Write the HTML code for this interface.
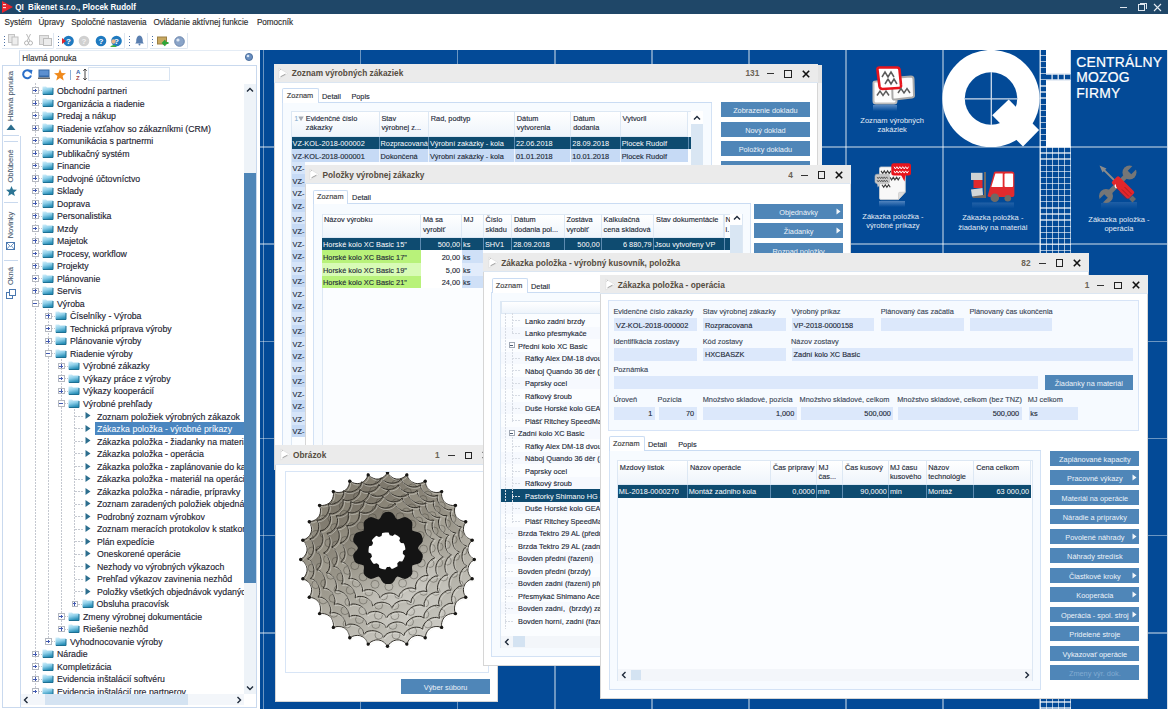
<!DOCTYPE html><html><head><meta charset="utf-8"><style>html,body{margin:0;padding:0;width:1168px;height:709px;overflow:hidden;background:#fff}body{font-family:"Liberation Sans", sans-serif;position:relative}div{position:absolute;box-sizing:border-box}.t{white-space:pre;transform:scaleY(1.06);-webkit-text-stroke:0.13px currentColor}</style></head><body><div style="left:0.00px;top:0.00px;width:1168.00px;height:13.50px;background:#1f4768"></div><svg style="position:absolute;left:2.00px;top:1.00px;" width="11" height="12" viewBox="0 0 11 12"><polygon points="0,0 11,6 0,12" fill="#e8242c"/><rect x="1" y="3" width="3" height="1.2" fill="#fff" opacity=".8"/><rect x="1" y="6" width="3" height="1.2" fill="#fff" opacity=".8"/></svg><div class="t" style="left:15.20px;top:2.00px;line-height:11px;font-size:8.03px;color:#ffffff;font-weight:700;-webkit-text-stroke:0;">QI  Bikenet s.r.o., Plocek Rudolf</div><div style="left:1119.50px;top:6.50px;width:7.50px;height:1.00px;background:#dfe6ee"></div><div style="left:1138.00px;top:4.00px;width:7.00px;height:6.50px;border:1px solid #dfe6ee"></div><div style="left:1140.00px;top:2.50px;width:6.50px;height:6.00px;border-top:1px solid #dfe6ee;border-right:1px solid #dfe6ee"></div><svg style="position:absolute;left:1153.00px;top:3.00px;" width="9" height="9" viewBox="0 0 9 9"><path d="M1 1 L8 8 M8 1 L1 8" stroke="#e6ecf2" stroke-width="1.1"/></svg><div class="t" style="left:4.60px;top:17.40px;line-height:12px;font-size:8.15px;color:#2a2a2a;font-weight:400;">Systém</div><div class="t" style="left:38.50px;top:17.40px;line-height:12px;font-size:8.15px;color:#2a2a2a;font-weight:400;">Úpravy</div><div class="t" style="left:71.20px;top:17.40px;line-height:12px;font-size:8.15px;color:#2a2a2a;font-weight:400;">Spoločné nastavenia</div><div class="t" style="left:153.40px;top:17.40px;line-height:12px;font-size:8.15px;color:#2a2a2a;font-weight:400;">Ovládanie aktívnej funkcie</div><div class="t" style="left:256.90px;top:17.40px;line-height:12px;font-size:8.15px;color:#2a2a2a;font-weight:400;">Pomocník</div><div style="left:2.00px;top:32.50px;width:52.00px;height:16.10px;border-right:1px solid #dfe7f1;border-bottom:1px solid #dfe7f1;border-radius:0 0 2px 0"></div><div style="left:56.00px;top:32.50px;width:68.60px;height:16.10px;border-right:1px solid #dfe7f1;border-bottom:1px solid #dfe7f1;border-radius:0 0 2px 0"></div><div style="left:126.40px;top:32.50px;width:21.30px;height:16.10px;border-right:1px solid #dfe7f1;border-bottom:1px solid #dfe7f1;border-radius:0 0 2px 0"></div><div style="left:149.50px;top:32.50px;width:38.00px;height:16.10px;border-right:1px solid #dfe7f1;border-bottom:1px solid #dfe7f1;border-radius:0 0 2px 0"></div><div style="left:3.50px;top:35.60px;width:1.20px;height:1.20px;background:#4a6fa5"></div><div style="left:3.50px;top:38.60px;width:1.20px;height:1.20px;background:#4a6fa5"></div><div style="left:3.50px;top:41.60px;width:1.20px;height:1.20px;background:#4a6fa5"></div><div style="left:3.50px;top:44.60px;width:1.20px;height:1.20px;background:#4a6fa5"></div><div style="left:58.00px;top:35.60px;width:1.20px;height:1.20px;background:#4a6fa5"></div><div style="left:58.00px;top:38.60px;width:1.20px;height:1.20px;background:#4a6fa5"></div><div style="left:58.00px;top:41.60px;width:1.20px;height:1.20px;background:#4a6fa5"></div><div style="left:58.00px;top:44.60px;width:1.20px;height:1.20px;background:#4a6fa5"></div><div style="left:129.00px;top:35.60px;width:1.20px;height:1.20px;background:#4a6fa5"></div><div style="left:129.00px;top:38.60px;width:1.20px;height:1.20px;background:#4a6fa5"></div><div style="left:129.00px;top:41.60px;width:1.20px;height:1.20px;background:#4a6fa5"></div><div style="left:129.00px;top:44.60px;width:1.20px;height:1.20px;background:#4a6fa5"></div><div style="left:152.00px;top:35.60px;width:1.20px;height:1.20px;background:#4a6fa5"></div><div style="left:152.00px;top:38.60px;width:1.20px;height:1.20px;background:#4a6fa5"></div><div style="left:152.00px;top:41.60px;width:1.20px;height:1.20px;background:#4a6fa5"></div><div style="left:152.00px;top:44.60px;width:1.20px;height:1.20px;background:#4a6fa5"></div><svg style="position:absolute;left:8.00px;top:34.00px;" width="11" height="12" viewBox="0 0 11 12"><rect x="0.5" y="0.5" width="6" height="8" fill="#e8e8e8" stroke="#c4c4c4"/><rect x="4" y="3" width="6" height="8" fill="#eee" stroke="#c0c0c0"/></svg><svg style="position:absolute;left:24.00px;top:34.00px;" width="9" height="12" viewBox="0 0 9 12"><circle cx="2.5" cy="9" r="2" fill="none" stroke="#b5b5b5"/><circle cx="6.5" cy="9" r="2" fill="none" stroke="#b5b5b5"/><path d="M3 7 L6.5 0 M6 7 L2.5 0" stroke="#b9b9b9"/></svg><svg style="position:absolute;left:39.00px;top:34.00px;" width="13" height="12" viewBox="0 0 13 12"><rect x="0.5" y="1.5" width="9" height="9" fill="#e4e4e4" stroke="#c4c4c4"/><rect x="4.5" y="4.5" width="8" height="7" fill="#ececec" stroke="#bcbcbc"/></svg><svg style="position:absolute;left:61.50px;top:34.50px;" width="12" height="12" viewBox="0 0 12 12"><circle cx="6.5" cy="6" r="5.3" fill="#1f7ac0"/><path d="M0 3 L4 6 L0 9Z" fill="#e0242a"/><text x="6.5" y="8.8" font-size="8" font-weight="700" fill="#fff" text-anchor="middle" font-family="Liberation Sans">?</text></svg><svg style="position:absolute;left:78.00px;top:34.50px;" width="12" height="12" viewBox="0 0 12 12"><circle cx="6" cy="6" r="5.3" fill="#d0d0d0"/><text x="6" y="8.8" font-size="8" font-weight="700" fill="#f2f2f2" text-anchor="middle" font-family="Liberation Sans">?</text></svg><svg style="position:absolute;left:94.50px;top:34.50px;" width="12" height="12" viewBox="0 0 12 12"><circle cx="6" cy="6" r="5.3" fill="#1f7ac0"/><text x="6" y="8.8" font-size="8" font-weight="700" fill="#fff" text-anchor="middle" font-family="Liberation Sans">?</text></svg><svg style="position:absolute;left:110.00px;top:34.50px;" width="12" height="12" viewBox="0 0 12 12"><circle cx="6.5" cy="6" r="5.3" fill="#1f7ac0"/><text x="6.5" y="8.8" font-size="8" font-weight="700" fill="#fff" text-anchor="middle" font-family="Liberation Sans">?</text><circle cx="3.5" cy="6.5" r="2.2" fill="#e9b48a"/><path d="M0 12 Q3.5 8 7 12Z" fill="#3cb043"/></svg><svg style="position:absolute;left:134.50px;top:35.00px;" width="9" height="11" viewBox="0 0 9 11"><path d="M4.5 0.5 Q8 1 7.8 7 L8.8 8.5 L0.2 8.5 L1.2 7 Q1 1 4.5 0.5Z" fill="#5a7fb0"/><circle cx="4.5" cy="9.6" r="1" fill="#5a7fb0"/></svg><svg style="position:absolute;left:157.00px;top:34.50px;" width="12" height="12" viewBox="0 0 12 12"><rect x="0.5" y="2" width="9" height="7" fill="#c8a860" stroke="#9b8045"/><path d="M6 8 L11.5 8 M8.5 5.5 L6 8 L8.5 10.5" stroke="#2fa53a" stroke-width="2" fill="none"/></svg><svg style="position:absolute;left:174.00px;top:34.50px;" width="11" height="12" viewBox="0 0 11 12"><circle cx="5.5" cy="6.5" r="4.8" fill="#8aa4c8" stroke="#6b86ad"/><circle cx="4" cy="5" r="1.6" fill="#dfe8f3"/></svg><div style="left:19.30px;top:49.60px;width:239.70px;height:15.40px;border-left:1px solid #d3e0ef;border-top:1px solid #e4ecf5"></div><div class="t" style="left:22.30px;top:52.60px;line-height:12px;font-size:8.15px;color:#2a2a2a;font-weight:400;">Hlavná ponuka</div><svg style="position:absolute;left:244.00px;top:52.00px;" width="10" height="10" viewBox="0 0 10 10"><circle cx="5" cy="5" r="3.6" fill="#6a8fc0" stroke="#3a5f90" stroke-width=".8"/><circle cx="4" cy="4" r="1.3" fill="#d8e6f5"/></svg><div style="left:2.00px;top:65.00px;width:255.00px;height:642.50px;border:1px solid #c9d9ee;border-right:1px solid #c9d9ee"></div><div style="left:19.60px;top:65.50px;width:1.00px;height:641.50px;background:#c9d9ee"></div><div style="left:2.50px;top:65.50px;width:17.00px;height:70.80px;background:#fff;border-bottom:1px solid #c9d9ee"></div><div style="left:19.00px;top:66.00px;width:1.60px;height:70.00px;background:#fff"></div><div class="t" style="left:-29px;top:89.5px;width:80px;line-height:12px;text-align:center;font-size:7.5px;color:#4a5a70;transform:rotate(-90deg);-webkit-text-stroke:0.1px #4a5a70">Hlavná ponuka</div><div class="t" style="left:-29px;top:159.5px;width:80px;line-height:12px;text-align:center;font-size:7.5px;color:#4a5a70;transform:rotate(-90deg);-webkit-text-stroke:0.1px #4a5a70">Obľúbené</div><div class="t" style="left:-29px;top:219.3px;width:80px;line-height:12px;text-align:center;font-size:7.5px;color:#4a5a70;transform:rotate(-90deg);-webkit-text-stroke:0.1px #4a5a70">Novinky</div><div class="t" style="left:-29px;top:270px;width:80px;line-height:12px;text-align:center;font-size:7.5px;color:#4a5a70;transform:rotate(-90deg);-webkit-text-stroke:0.1px #4a5a70">Okná</div><div style="left:4.00px;top:141.00px;width:14.00px;height:1.00px;background:#c9d9ee"></div><div style="left:4.00px;top:202.00px;width:14.00px;height:1.00px;background:#c9d9ee"></div><div style="left:4.00px;top:260.00px;width:14.00px;height:1.00px;background:#c9d9ee"></div><svg style="position:absolute;left:6.00px;top:124.00px;" width="10" height="7" viewBox="0 0 10 7"><polygon points="5,0.5 9.5,6 0.5,6" fill="#2c6e8e"/></svg><svg style="position:absolute;left:5.50px;top:185.50px;" width="11" height="10" viewBox="0 0 11 10"><polygon points="5.5,0 7,3.6 11,3.8 7.9,6.4 8.9,10 5.5,7.9 2.1,10 3.1,6.4 0,3.8 4,3.6" fill="#2c7494"/></svg><svg style="position:absolute;left:6.00px;top:242.00px;" width="10" height="9" viewBox="0 0 10 9"><rect x="0.5" y="0.5" width="8" height="7" fill="none" stroke="#4a78b0"/><path d="M0.5 0.5 L4.5 4.5 L8.5 0.5 M0.5 7.5 L3.5 4 M8.5 7.5 L5.5 4" stroke="#4a78b0" stroke-width=".8" fill="none"/></svg><svg style="position:absolute;left:5.50px;top:289.00px;" width="11" height="10" viewBox="0 0 11 10"><rect x="0.5" y="3.5" width="6" height="6" fill="#fff" stroke="#4a78b0"/><rect x="3.5" y="0.5" width="6" height="6" fill="#fff" stroke="#4a78b0"/></svg><svg style="position:absolute;left:21.50px;top:68.50px;" width="11" height="11" viewBox="0 0 11 11"><path d="M8.5 3 A4 4 0 1 0 9 6.5" fill="none" stroke="#2a6fc9" stroke-width="2"/><polygon points="6,0.5 10.5,1 9.5,5.5" fill="#2a6fc9"/></svg><svg style="position:absolute;left:37.50px;top:69.00px;" width="12" height="10" viewBox="0 0 12 10"><rect x="0.5" y="0.5" width="11" height="8" fill="#3568a8"/><rect x="1.5" y="1.5" width="9" height="5" fill="#5c8fd0"/><rect x="0" y="8.5" width="12" height="1.5" fill="#6a6a6a"/></svg><svg style="position:absolute;left:53.50px;top:68.50px;" width="12" height="12" viewBox="0 0 12 12"><polygon points="6,0 7.6,4 12,4.2 8.6,7 9.7,11.5 6,9 2.3,11.5 3.4,7 0,4.2 4.4,4" fill="#f08a1c"/></svg><div style="left:70.00px;top:69.50px;width:1.00px;height:10.00px;background:#8ab0d8"></div><svg style="position:absolute;left:76.00px;top:68.00px;" width="12" height="13" viewBox="0 0 12 13"><text x="0" y="5.5" font-size="6" font-weight="700" fill="#3060a8" font-family="Liberation Sans">A</text><text x="0" y="12" font-size="6" font-weight="700" fill="#a04040" font-family="Liberation Sans">Z</text><path d="M9 1 L9 12 M7.3 2.8 L9 1 L10.7 2.8 M7.3 10.2 L9 12 L10.7 10.2" stroke="#333" stroke-width=".9" fill="none"/></svg><div style="left:87.80px;top:67.30px;width:82.50px;height:13.90px;border:1px solid #d8e4f2;background:#fff"></div><svg width="0" height="0" style="position:absolute"><defs><linearGradient id="fg" x1="0" y1="0" x2="0.3" y2="1"><stop offset="0" stop-color="#d6f0fb"/><stop offset="0.5" stop-color="#8fd0ea"/><stop offset="1" stop-color="#2a90b8"/></linearGradient></defs></svg><div style="left:20.60px;top:83.00px;width:223.40px;height:610.50px;overflow:hidden;"><div style="left:-20.60px;top:-83.00px;width:1168px;height:709px"><div style="left:34.50px;top:83.00px;width:1px;height:617.00px;background:repeating-linear-gradient(#c4c8d0 0 2px,transparent 2px 3px)"></div><div style="left:47.50px;top:303.24px;width:1px;height:338.04px;background:repeating-linear-gradient(#c4c8d0 0 2px,transparent 2px 3px)"></div><div style="left:60.50px;top:353.32px;width:1px;height:275.44px;background:repeating-linear-gradient(#c4c8d0 0 2px,transparent 2px 3px)"></div><div style="left:74.00px;top:403.40px;width:1px;height:200.32px;background:repeating-linear-gradient(#c4c8d0 0 2px,transparent 2px 3px)"></div><div style="left:35.00px;top:90.40px;width:7px;height:1px;background:repeating-linear-gradient(90deg,#c4c8d0 0 2px,transparent 2px 3px)"></div><div style="left:32.00px;top:87.40px;width:6.5px;height:6.5px;border:1px solid #b4b8c0;background:#fff"></div><div style="left:33.40px;top:90.10px;width:3.50px;height:1.00px;background:#4058b0"></div><div style="left:34.80px;top:88.80px;width:0.70px;height:3.50px;background:#4058b0"></div><svg style="position:absolute;left:42.30px;top:85.90px;" width="12" height="9" viewBox="0 0 12 9"><path d="M0.5 0.5 L4 0.5 L5 1.5 L11 1.5 L11 8.5 L0.5 8.5Z" fill="url(#fg)"/><path d="M11 2 L11 8.5 L1 8.5" stroke="#1d6f92" stroke-width="1" fill="none"/></svg><div class="t" style="left:57.00px;top:85.00px;line-height:12px;font-size:8.75px;color:#1c2230;font-weight:400;">Obchodní partneri</div><div style="left:35.00px;top:102.92px;width:7px;height:1px;background:repeating-linear-gradient(90deg,#c4c8d0 0 2px,transparent 2px 3px)"></div><div style="left:32.00px;top:99.92px;width:6.5px;height:6.5px;border:1px solid #b4b8c0;background:#fff"></div><div style="left:33.40px;top:102.62px;width:3.50px;height:1.00px;background:#4058b0"></div><div style="left:34.80px;top:101.32px;width:0.70px;height:3.50px;background:#4058b0"></div><svg style="position:absolute;left:42.30px;top:98.42px;" width="12" height="9" viewBox="0 0 12 9"><path d="M0.5 0.5 L4 0.5 L5 1.5 L11 1.5 L11 8.5 L0.5 8.5Z" fill="url(#fg)"/><path d="M11 2 L11 8.5 L1 8.5" stroke="#1d6f92" stroke-width="1" fill="none"/></svg><div class="t" style="left:57.00px;top:97.52px;line-height:12px;font-size:8.75px;color:#1c2230;font-weight:400;">Organizácia a riadenie</div><div style="left:35.00px;top:115.44px;width:7px;height:1px;background:repeating-linear-gradient(90deg,#c4c8d0 0 2px,transparent 2px 3px)"></div><div style="left:32.00px;top:112.44px;width:6.5px;height:6.5px;border:1px solid #b4b8c0;background:#fff"></div><div style="left:33.40px;top:115.14px;width:3.50px;height:1.00px;background:#4058b0"></div><div style="left:34.80px;top:113.84px;width:0.70px;height:3.50px;background:#4058b0"></div><svg style="position:absolute;left:42.30px;top:110.94px;" width="12" height="9" viewBox="0 0 12 9"><path d="M0.5 0.5 L4 0.5 L5 1.5 L11 1.5 L11 8.5 L0.5 8.5Z" fill="url(#fg)"/><path d="M11 2 L11 8.5 L1 8.5" stroke="#1d6f92" stroke-width="1" fill="none"/></svg><div class="t" style="left:57.00px;top:110.04px;line-height:12px;font-size:8.75px;color:#1c2230;font-weight:400;">Predaj a nákup</div><div style="left:35.00px;top:127.96px;width:7px;height:1px;background:repeating-linear-gradient(90deg,#c4c8d0 0 2px,transparent 2px 3px)"></div><div style="left:32.00px;top:124.96px;width:6.5px;height:6.5px;border:1px solid #b4b8c0;background:#fff"></div><div style="left:33.40px;top:127.66px;width:3.50px;height:1.00px;background:#4058b0"></div><div style="left:34.80px;top:126.36px;width:0.70px;height:3.50px;background:#4058b0"></div><svg style="position:absolute;left:42.30px;top:123.46px;" width="12" height="9" viewBox="0 0 12 9"><path d="M0.5 0.5 L4 0.5 L5 1.5 L11 1.5 L11 8.5 L0.5 8.5Z" fill="url(#fg)"/><path d="M11 2 L11 8.5 L1 8.5" stroke="#1d6f92" stroke-width="1" fill="none"/></svg><div class="t" style="left:57.00px;top:122.56px;line-height:12px;font-size:8.75px;color:#1c2230;font-weight:400;">Riadenie vzťahov so zákazníkmi (CRM)</div><div style="left:35.00px;top:140.48px;width:7px;height:1px;background:repeating-linear-gradient(90deg,#c4c8d0 0 2px,transparent 2px 3px)"></div><div style="left:32.00px;top:137.48px;width:6.5px;height:6.5px;border:1px solid #b4b8c0;background:#fff"></div><div style="left:33.40px;top:140.18px;width:3.50px;height:1.00px;background:#4058b0"></div><div style="left:34.80px;top:138.88px;width:0.70px;height:3.50px;background:#4058b0"></div><svg style="position:absolute;left:42.30px;top:135.98px;" width="12" height="9" viewBox="0 0 12 9"><path d="M0.5 0.5 L4 0.5 L5 1.5 L11 1.5 L11 8.5 L0.5 8.5Z" fill="url(#fg)"/><path d="M11 2 L11 8.5 L1 8.5" stroke="#1d6f92" stroke-width="1" fill="none"/></svg><div class="t" style="left:57.00px;top:135.08px;line-height:12px;font-size:8.75px;color:#1c2230;font-weight:400;">Komunikácia s partnermi</div><div style="left:35.00px;top:153.00px;width:7px;height:1px;background:repeating-linear-gradient(90deg,#c4c8d0 0 2px,transparent 2px 3px)"></div><div style="left:32.00px;top:150.00px;width:6.5px;height:6.5px;border:1px solid #b4b8c0;background:#fff"></div><div style="left:33.40px;top:152.70px;width:3.50px;height:1.00px;background:#4058b0"></div><div style="left:34.80px;top:151.40px;width:0.70px;height:3.50px;background:#4058b0"></div><svg style="position:absolute;left:42.30px;top:148.50px;" width="12" height="9" viewBox="0 0 12 9"><path d="M0.5 0.5 L4 0.5 L5 1.5 L11 1.5 L11 8.5 L0.5 8.5Z" fill="url(#fg)"/><path d="M11 2 L11 8.5 L1 8.5" stroke="#1d6f92" stroke-width="1" fill="none"/></svg><div class="t" style="left:57.00px;top:147.60px;line-height:12px;font-size:8.75px;color:#1c2230;font-weight:400;">Publikačný systém</div><div style="left:35.00px;top:165.52px;width:7px;height:1px;background:repeating-linear-gradient(90deg,#c4c8d0 0 2px,transparent 2px 3px)"></div><div style="left:32.00px;top:162.52px;width:6.5px;height:6.5px;border:1px solid #b4b8c0;background:#fff"></div><div style="left:33.40px;top:165.22px;width:3.50px;height:1.00px;background:#4058b0"></div><div style="left:34.80px;top:163.92px;width:0.70px;height:3.50px;background:#4058b0"></div><svg style="position:absolute;left:42.30px;top:161.02px;" width="12" height="9" viewBox="0 0 12 9"><path d="M0.5 0.5 L4 0.5 L5 1.5 L11 1.5 L11 8.5 L0.5 8.5Z" fill="url(#fg)"/><path d="M11 2 L11 8.5 L1 8.5" stroke="#1d6f92" stroke-width="1" fill="none"/></svg><div class="t" style="left:57.00px;top:160.12px;line-height:12px;font-size:8.75px;color:#1c2230;font-weight:400;">Financie</div><div style="left:35.00px;top:178.04px;width:7px;height:1px;background:repeating-linear-gradient(90deg,#c4c8d0 0 2px,transparent 2px 3px)"></div><div style="left:32.00px;top:175.04px;width:6.5px;height:6.5px;border:1px solid #b4b8c0;background:#fff"></div><div style="left:33.40px;top:177.74px;width:3.50px;height:1.00px;background:#4058b0"></div><div style="left:34.80px;top:176.44px;width:0.70px;height:3.50px;background:#4058b0"></div><svg style="position:absolute;left:42.30px;top:173.54px;" width="12" height="9" viewBox="0 0 12 9"><path d="M0.5 0.5 L4 0.5 L5 1.5 L11 1.5 L11 8.5 L0.5 8.5Z" fill="url(#fg)"/><path d="M11 2 L11 8.5 L1 8.5" stroke="#1d6f92" stroke-width="1" fill="none"/></svg><div class="t" style="left:57.00px;top:172.64px;line-height:12px;font-size:8.75px;color:#1c2230;font-weight:400;">Podvojné účtovníctvo</div><div style="left:35.00px;top:190.56px;width:7px;height:1px;background:repeating-linear-gradient(90deg,#c4c8d0 0 2px,transparent 2px 3px)"></div><div style="left:32.00px;top:187.56px;width:6.5px;height:6.5px;border:1px solid #b4b8c0;background:#fff"></div><div style="left:33.40px;top:190.26px;width:3.50px;height:1.00px;background:#4058b0"></div><div style="left:34.80px;top:188.96px;width:0.70px;height:3.50px;background:#4058b0"></div><svg style="position:absolute;left:42.30px;top:186.06px;" width="12" height="9" viewBox="0 0 12 9"><path d="M0.5 0.5 L4 0.5 L5 1.5 L11 1.5 L11 8.5 L0.5 8.5Z" fill="url(#fg)"/><path d="M11 2 L11 8.5 L1 8.5" stroke="#1d6f92" stroke-width="1" fill="none"/></svg><div class="t" style="left:57.00px;top:185.16px;line-height:12px;font-size:8.75px;color:#1c2230;font-weight:400;">Sklady</div><div style="left:35.00px;top:203.08px;width:7px;height:1px;background:repeating-linear-gradient(90deg,#c4c8d0 0 2px,transparent 2px 3px)"></div><div style="left:32.00px;top:200.08px;width:6.5px;height:6.5px;border:1px solid #b4b8c0;background:#fff"></div><div style="left:33.40px;top:202.78px;width:3.50px;height:1.00px;background:#4058b0"></div><div style="left:34.80px;top:201.48px;width:0.70px;height:3.50px;background:#4058b0"></div><svg style="position:absolute;left:42.30px;top:198.58px;" width="12" height="9" viewBox="0 0 12 9"><path d="M0.5 0.5 L4 0.5 L5 1.5 L11 1.5 L11 8.5 L0.5 8.5Z" fill="url(#fg)"/><path d="M11 2 L11 8.5 L1 8.5" stroke="#1d6f92" stroke-width="1" fill="none"/></svg><div class="t" style="left:57.00px;top:197.68px;line-height:12px;font-size:8.75px;color:#1c2230;font-weight:400;">Doprava</div><div style="left:35.00px;top:215.60px;width:7px;height:1px;background:repeating-linear-gradient(90deg,#c4c8d0 0 2px,transparent 2px 3px)"></div><div style="left:32.00px;top:212.60px;width:6.5px;height:6.5px;border:1px solid #b4b8c0;background:#fff"></div><div style="left:33.40px;top:215.30px;width:3.50px;height:1.00px;background:#4058b0"></div><div style="left:34.80px;top:214.00px;width:0.70px;height:3.50px;background:#4058b0"></div><svg style="position:absolute;left:42.30px;top:211.10px;" width="12" height="9" viewBox="0 0 12 9"><path d="M0.5 0.5 L4 0.5 L5 1.5 L11 1.5 L11 8.5 L0.5 8.5Z" fill="url(#fg)"/><path d="M11 2 L11 8.5 L1 8.5" stroke="#1d6f92" stroke-width="1" fill="none"/></svg><div class="t" style="left:57.00px;top:210.20px;line-height:12px;font-size:8.75px;color:#1c2230;font-weight:400;">Personalistika</div><div style="left:35.00px;top:228.12px;width:7px;height:1px;background:repeating-linear-gradient(90deg,#c4c8d0 0 2px,transparent 2px 3px)"></div><div style="left:32.00px;top:225.12px;width:6.5px;height:6.5px;border:1px solid #b4b8c0;background:#fff"></div><div style="left:33.40px;top:227.82px;width:3.50px;height:1.00px;background:#4058b0"></div><div style="left:34.80px;top:226.52px;width:0.70px;height:3.50px;background:#4058b0"></div><svg style="position:absolute;left:42.30px;top:223.62px;" width="12" height="9" viewBox="0 0 12 9"><path d="M0.5 0.5 L4 0.5 L5 1.5 L11 1.5 L11 8.5 L0.5 8.5Z" fill="url(#fg)"/><path d="M11 2 L11 8.5 L1 8.5" stroke="#1d6f92" stroke-width="1" fill="none"/></svg><div class="t" style="left:57.00px;top:222.72px;line-height:12px;font-size:8.75px;color:#1c2230;font-weight:400;">Mzdy</div><div style="left:35.00px;top:240.64px;width:7px;height:1px;background:repeating-linear-gradient(90deg,#c4c8d0 0 2px,transparent 2px 3px)"></div><div style="left:32.00px;top:237.64px;width:6.5px;height:6.5px;border:1px solid #b4b8c0;background:#fff"></div><div style="left:33.40px;top:240.34px;width:3.50px;height:1.00px;background:#4058b0"></div><div style="left:34.80px;top:239.04px;width:0.70px;height:3.50px;background:#4058b0"></div><svg style="position:absolute;left:42.30px;top:236.14px;" width="12" height="9" viewBox="0 0 12 9"><path d="M0.5 0.5 L4 0.5 L5 1.5 L11 1.5 L11 8.5 L0.5 8.5Z" fill="url(#fg)"/><path d="M11 2 L11 8.5 L1 8.5" stroke="#1d6f92" stroke-width="1" fill="none"/></svg><div class="t" style="left:57.00px;top:235.24px;line-height:12px;font-size:8.75px;color:#1c2230;font-weight:400;">Majetok</div><div style="left:35.00px;top:253.16px;width:7px;height:1px;background:repeating-linear-gradient(90deg,#c4c8d0 0 2px,transparent 2px 3px)"></div><div style="left:32.00px;top:250.16px;width:6.5px;height:6.5px;border:1px solid #b4b8c0;background:#fff"></div><div style="left:33.40px;top:252.86px;width:3.50px;height:1.00px;background:#4058b0"></div><div style="left:34.80px;top:251.56px;width:0.70px;height:3.50px;background:#4058b0"></div><svg style="position:absolute;left:42.30px;top:248.66px;" width="12" height="9" viewBox="0 0 12 9"><path d="M0.5 0.5 L4 0.5 L5 1.5 L11 1.5 L11 8.5 L0.5 8.5Z" fill="url(#fg)"/><path d="M11 2 L11 8.5 L1 8.5" stroke="#1d6f92" stroke-width="1" fill="none"/></svg><div class="t" style="left:57.00px;top:247.76px;line-height:12px;font-size:8.75px;color:#1c2230;font-weight:400;">Procesy, workflow</div><div style="left:35.00px;top:265.68px;width:7px;height:1px;background:repeating-linear-gradient(90deg,#c4c8d0 0 2px,transparent 2px 3px)"></div><div style="left:32.00px;top:262.68px;width:6.5px;height:6.5px;border:1px solid #b4b8c0;background:#fff"></div><div style="left:33.40px;top:265.38px;width:3.50px;height:1.00px;background:#4058b0"></div><div style="left:34.80px;top:264.08px;width:0.70px;height:3.50px;background:#4058b0"></div><svg style="position:absolute;left:42.30px;top:261.18px;" width="12" height="9" viewBox="0 0 12 9"><path d="M0.5 0.5 L4 0.5 L5 1.5 L11 1.5 L11 8.5 L0.5 8.5Z" fill="url(#fg)"/><path d="M11 2 L11 8.5 L1 8.5" stroke="#1d6f92" stroke-width="1" fill="none"/></svg><div class="t" style="left:57.00px;top:260.28px;line-height:12px;font-size:8.75px;color:#1c2230;font-weight:400;">Projekty</div><div style="left:35.00px;top:278.20px;width:7px;height:1px;background:repeating-linear-gradient(90deg,#c4c8d0 0 2px,transparent 2px 3px)"></div><div style="left:32.00px;top:275.20px;width:6.5px;height:6.5px;border:1px solid #b4b8c0;background:#fff"></div><div style="left:33.40px;top:277.90px;width:3.50px;height:1.00px;background:#4058b0"></div><div style="left:34.80px;top:276.60px;width:0.70px;height:3.50px;background:#4058b0"></div><svg style="position:absolute;left:42.30px;top:273.70px;" width="12" height="9" viewBox="0 0 12 9"><path d="M0.5 0.5 L4 0.5 L5 1.5 L11 1.5 L11 8.5 L0.5 8.5Z" fill="url(#fg)"/><path d="M11 2 L11 8.5 L1 8.5" stroke="#1d6f92" stroke-width="1" fill="none"/></svg><div class="t" style="left:57.00px;top:272.80px;line-height:12px;font-size:8.75px;color:#1c2230;font-weight:400;">Plánovanie</div><div style="left:35.00px;top:290.72px;width:7px;height:1px;background:repeating-linear-gradient(90deg,#c4c8d0 0 2px,transparent 2px 3px)"></div><div style="left:32.00px;top:287.72px;width:6.5px;height:6.5px;border:1px solid #b4b8c0;background:#fff"></div><div style="left:33.40px;top:290.42px;width:3.50px;height:1.00px;background:#4058b0"></div><div style="left:34.80px;top:289.12px;width:0.70px;height:3.50px;background:#4058b0"></div><svg style="position:absolute;left:42.30px;top:286.22px;" width="12" height="9" viewBox="0 0 12 9"><path d="M0.5 0.5 L4 0.5 L5 1.5 L11 1.5 L11 8.5 L0.5 8.5Z" fill="url(#fg)"/><path d="M11 2 L11 8.5 L1 8.5" stroke="#1d6f92" stroke-width="1" fill="none"/></svg><div class="t" style="left:57.00px;top:285.32px;line-height:12px;font-size:8.75px;color:#1c2230;font-weight:400;">Servis</div><div style="left:35.00px;top:303.24px;width:7px;height:1px;background:repeating-linear-gradient(90deg,#c4c8d0 0 2px,transparent 2px 3px)"></div><div style="left:32.00px;top:300.24px;width:6.5px;height:6.5px;border:1px solid #b4b8c0;background:#fff"></div><div style="left:33.40px;top:302.94px;width:3.50px;height:1.00px;background:#4058b0"></div><svg style="position:absolute;left:42.30px;top:298.74px;" width="12" height="9" viewBox="0 0 12 9"><path d="M0.5 0.5 L4 0.5 L5 1.5 L11 1.5 L11 8.5 L0.5 8.5Z" fill="url(#fg)"/><path d="M11 2 L11 8.5 L1 8.5" stroke="#1d6f92" stroke-width="1" fill="none"/></svg><div class="t" style="left:57.00px;top:297.84px;line-height:12px;font-size:8.75px;color:#1c2230;font-weight:400;">Výroba</div><div style="left:48.00px;top:315.76px;width:7px;height:1px;background:repeating-linear-gradient(90deg,#c4c8d0 0 2px,transparent 2px 3px)"></div><div style="left:45.00px;top:312.76px;width:6.5px;height:6.5px;border:1px solid #b4b8c0;background:#fff"></div><div style="left:46.40px;top:315.46px;width:3.50px;height:1.00px;background:#4058b0"></div><div style="left:47.80px;top:314.16px;width:0.70px;height:3.50px;background:#4058b0"></div><svg style="position:absolute;left:55.30px;top:311.26px;" width="12" height="9" viewBox="0 0 12 9"><path d="M0.5 0.5 L4 0.5 L5 1.5 L11 1.5 L11 8.5 L0.5 8.5Z" fill="url(#fg)"/><path d="M11 2 L11 8.5 L1 8.5" stroke="#1d6f92" stroke-width="1" fill="none"/></svg><div class="t" style="left:70.00px;top:310.36px;line-height:12px;font-size:8.75px;color:#1c2230;font-weight:400;">Číselníky - Výroba</div><div style="left:48.00px;top:328.28px;width:7px;height:1px;background:repeating-linear-gradient(90deg,#c4c8d0 0 2px,transparent 2px 3px)"></div><div style="left:45.00px;top:325.28px;width:6.5px;height:6.5px;border:1px solid #b4b8c0;background:#fff"></div><div style="left:46.40px;top:327.98px;width:3.50px;height:1.00px;background:#4058b0"></div><div style="left:47.80px;top:326.68px;width:0.70px;height:3.50px;background:#4058b0"></div><svg style="position:absolute;left:55.30px;top:323.78px;" width="12" height="9" viewBox="0 0 12 9"><path d="M0.5 0.5 L4 0.5 L5 1.5 L11 1.5 L11 8.5 L0.5 8.5Z" fill="url(#fg)"/><path d="M11 2 L11 8.5 L1 8.5" stroke="#1d6f92" stroke-width="1" fill="none"/></svg><div class="t" style="left:70.00px;top:322.88px;line-height:12px;font-size:8.75px;color:#1c2230;font-weight:400;">Technická príprava výroby</div><div style="left:48.00px;top:340.80px;width:7px;height:1px;background:repeating-linear-gradient(90deg,#c4c8d0 0 2px,transparent 2px 3px)"></div><div style="left:45.00px;top:337.80px;width:6.5px;height:6.5px;border:1px solid #b4b8c0;background:#fff"></div><div style="left:46.40px;top:340.50px;width:3.50px;height:1.00px;background:#4058b0"></div><div style="left:47.80px;top:339.20px;width:0.70px;height:3.50px;background:#4058b0"></div><svg style="position:absolute;left:55.30px;top:336.30px;" width="12" height="9" viewBox="0 0 12 9"><path d="M0.5 0.5 L4 0.5 L5 1.5 L11 1.5 L11 8.5 L0.5 8.5Z" fill="url(#fg)"/><path d="M11 2 L11 8.5 L1 8.5" stroke="#1d6f92" stroke-width="1" fill="none"/></svg><div class="t" style="left:70.00px;top:335.40px;line-height:12px;font-size:8.75px;color:#1c2230;font-weight:400;">Plánovanie výroby</div><div style="left:48.00px;top:353.32px;width:7px;height:1px;background:repeating-linear-gradient(90deg,#c4c8d0 0 2px,transparent 2px 3px)"></div><div style="left:45.00px;top:350.32px;width:6.5px;height:6.5px;border:1px solid #b4b8c0;background:#fff"></div><div style="left:46.40px;top:353.02px;width:3.50px;height:1.00px;background:#4058b0"></div><svg style="position:absolute;left:55.30px;top:348.82px;" width="12" height="9" viewBox="0 0 12 9"><path d="M0.5 0.5 L4 0.5 L5 1.5 L11 1.5 L11 8.5 L0.5 8.5Z" fill="url(#fg)"/><path d="M11 2 L11 8.5 L1 8.5" stroke="#1d6f92" stroke-width="1" fill="none"/></svg><div class="t" style="left:70.00px;top:347.92px;line-height:12px;font-size:8.75px;color:#1c2230;font-weight:400;">Riadenie výroby</div><div style="left:61.00px;top:365.84px;width:7px;height:1px;background:repeating-linear-gradient(90deg,#c4c8d0 0 2px,transparent 2px 3px)"></div><div style="left:58.00px;top:362.84px;width:6.5px;height:6.5px;border:1px solid #b4b8c0;background:#fff"></div><div style="left:59.40px;top:365.54px;width:3.50px;height:1.00px;background:#4058b0"></div><div style="left:60.80px;top:364.24px;width:0.70px;height:3.50px;background:#4058b0"></div><svg style="position:absolute;left:68.30px;top:361.34px;" width="12" height="9" viewBox="0 0 12 9"><path d="M0.5 0.5 L4 0.5 L5 1.5 L11 1.5 L11 8.5 L0.5 8.5Z" fill="url(#fg)"/><path d="M11 2 L11 8.5 L1 8.5" stroke="#1d6f92" stroke-width="1" fill="none"/></svg><div class="t" style="left:83.00px;top:360.44px;line-height:12px;font-size:8.75px;color:#1c2230;font-weight:400;">Výrobné zákazky</div><div style="left:61.00px;top:378.36px;width:7px;height:1px;background:repeating-linear-gradient(90deg,#c4c8d0 0 2px,transparent 2px 3px)"></div><div style="left:58.00px;top:375.36px;width:6.5px;height:6.5px;border:1px solid #b4b8c0;background:#fff"></div><div style="left:59.40px;top:378.06px;width:3.50px;height:1.00px;background:#4058b0"></div><div style="left:60.80px;top:376.76px;width:0.70px;height:3.50px;background:#4058b0"></div><svg style="position:absolute;left:68.30px;top:373.86px;" width="12" height="9" viewBox="0 0 12 9"><path d="M0.5 0.5 L4 0.5 L5 1.5 L11 1.5 L11 8.5 L0.5 8.5Z" fill="url(#fg)"/><path d="M11 2 L11 8.5 L1 8.5" stroke="#1d6f92" stroke-width="1" fill="none"/></svg><div class="t" style="left:83.00px;top:372.96px;line-height:12px;font-size:8.75px;color:#1c2230;font-weight:400;">Výkazy práce z výroby</div><div style="left:61.00px;top:390.88px;width:7px;height:1px;background:repeating-linear-gradient(90deg,#c4c8d0 0 2px,transparent 2px 3px)"></div><div style="left:58.00px;top:387.88px;width:6.5px;height:6.5px;border:1px solid #b4b8c0;background:#fff"></div><div style="left:59.40px;top:390.58px;width:3.50px;height:1.00px;background:#4058b0"></div><div style="left:60.80px;top:389.28px;width:0.70px;height:3.50px;background:#4058b0"></div><svg style="position:absolute;left:68.30px;top:386.38px;" width="12" height="9" viewBox="0 0 12 9"><path d="M0.5 0.5 L4 0.5 L5 1.5 L11 1.5 L11 8.5 L0.5 8.5Z" fill="url(#fg)"/><path d="M11 2 L11 8.5 L1 8.5" stroke="#1d6f92" stroke-width="1" fill="none"/></svg><div class="t" style="left:83.00px;top:385.48px;line-height:12px;font-size:8.75px;color:#1c2230;font-weight:400;">Výkazy kooperácií</div><div style="left:61.00px;top:403.40px;width:7px;height:1px;background:repeating-linear-gradient(90deg,#c4c8d0 0 2px,transparent 2px 3px)"></div><div style="left:58.00px;top:400.40px;width:6.5px;height:6.5px;border:1px solid #b4b8c0;background:#fff"></div><div style="left:59.40px;top:403.10px;width:3.50px;height:1.00px;background:#4058b0"></div><svg style="position:absolute;left:68.30px;top:398.90px;" width="12" height="9" viewBox="0 0 12 9"><path d="M0.5 0.5 L4 0.5 L5 1.5 L11 1.5 L11 8.5 L0.5 8.5Z" fill="url(#fg)"/><path d="M11 2 L11 8.5 L1 8.5" stroke="#1d6f92" stroke-width="1" fill="none"/></svg><div class="t" style="left:83.00px;top:398.00px;line-height:12px;font-size:8.75px;color:#1c2230;font-weight:400;">Výrobné prehľady</div><div style="left:74.50px;top:415.92px;width:8px;height:1px;background:repeating-linear-gradient(90deg,#c4c8d0 0 2px,transparent 2px 3px)"></div><svg style="position:absolute;left:85.00px;top:412.42px;" width="6" height="7" viewBox="0 0 6 7"><polygon points="0.5,0 5.5,3.5 0.5,7" fill="#2c6e8e"/></svg><div class="t" style="left:96.90px;top:410.52px;line-height:12px;font-size:8.75px;color:#1c2230;font-weight:400;">Zoznam položiek výrobných zákazok</div><div style="left:74.50px;top:428.44px;width:8px;height:1px;background:repeating-linear-gradient(90deg,#c4c8d0 0 2px,transparent 2px 3px)"></div><svg style="position:absolute;left:85.00px;top:424.94px;" width="6" height="7" viewBox="0 0 6 7"><polygon points="0.5,0 5.5,3.5 0.5,7" fill="#2c6e8e"/></svg><div style="left:95.00px;top:422.14px;width:149.00px;height:12.50px;background:#4a86c0"></div><div class="t" style="left:96.90px;top:423.04px;line-height:12px;font-size:8.75px;color:#ffffff;font-weight:400;-webkit-text-stroke:0;">Zákazka položka - výrobné príkazy</div><div style="left:74.50px;top:440.96px;width:8px;height:1px;background:repeating-linear-gradient(90deg,#c4c8d0 0 2px,transparent 2px 3px)"></div><svg style="position:absolute;left:85.00px;top:437.46px;" width="6" height="7" viewBox="0 0 6 7"><polygon points="0.5,0 5.5,3.5 0.5,7" fill="#2c6e8e"/></svg><div class="t" style="left:96.90px;top:435.56px;line-height:12px;font-size:8.75px;color:#1c2230;font-weight:400;">Zákazka položka - žiadanky na materiál</div><div style="left:74.50px;top:453.48px;width:8px;height:1px;background:repeating-linear-gradient(90deg,#c4c8d0 0 2px,transparent 2px 3px)"></div><svg style="position:absolute;left:85.00px;top:449.98px;" width="6" height="7" viewBox="0 0 6 7"><polygon points="0.5,0 5.5,3.5 0.5,7" fill="#2c6e8e"/></svg><div class="t" style="left:96.90px;top:448.08px;line-height:12px;font-size:8.75px;color:#1c2230;font-weight:400;">Zákazka položka - operácia</div><div style="left:74.50px;top:466.00px;width:8px;height:1px;background:repeating-linear-gradient(90deg,#c4c8d0 0 2px,transparent 2px 3px)"></div><svg style="position:absolute;left:85.00px;top:462.50px;" width="6" height="7" viewBox="0 0 6 7"><polygon points="0.5,0 5.5,3.5 0.5,7" fill="#2c6e8e"/></svg><div class="t" style="left:96.90px;top:460.60px;line-height:12px;font-size:8.75px;color:#1c2230;font-weight:400;">Zákazka položka - zaplánovanie do kapacít</div><div style="left:74.50px;top:478.52px;width:8px;height:1px;background:repeating-linear-gradient(90deg,#c4c8d0 0 2px,transparent 2px 3px)"></div><svg style="position:absolute;left:85.00px;top:475.02px;" width="6" height="7" viewBox="0 0 6 7"><polygon points="0.5,0 5.5,3.5 0.5,7" fill="#2c6e8e"/></svg><div class="t" style="left:96.90px;top:473.12px;line-height:12px;font-size:8.75px;color:#1c2230;font-weight:400;">Zákazka položka - materiál na operácie</div><div style="left:74.50px;top:491.04px;width:8px;height:1px;background:repeating-linear-gradient(90deg,#c4c8d0 0 2px,transparent 2px 3px)"></div><svg style="position:absolute;left:85.00px;top:487.54px;" width="6" height="7" viewBox="0 0 6 7"><polygon points="0.5,0 5.5,3.5 0.5,7" fill="#2c6e8e"/></svg><div class="t" style="left:96.90px;top:485.64px;line-height:12px;font-size:8.75px;color:#1c2230;font-weight:400;">Zákazka položka - náradie, prípravky</div><div style="left:74.50px;top:503.56px;width:8px;height:1px;background:repeating-linear-gradient(90deg,#c4c8d0 0 2px,transparent 2px 3px)"></div><svg style="position:absolute;left:85.00px;top:500.06px;" width="6" height="7" viewBox="0 0 6 7"><polygon points="0.5,0 5.5,3.5 0.5,7" fill="#2c6e8e"/></svg><div class="t" style="left:96.90px;top:498.16px;line-height:12px;font-size:8.75px;color:#1c2230;font-weight:400;">Zoznam zaradených položiek objednávok</div><div style="left:74.50px;top:516.08px;width:8px;height:1px;background:repeating-linear-gradient(90deg,#c4c8d0 0 2px,transparent 2px 3px)"></div><svg style="position:absolute;left:85.00px;top:512.58px;" width="6" height="7" viewBox="0 0 6 7"><polygon points="0.5,0 5.5,3.5 0.5,7" fill="#2c6e8e"/></svg><div class="t" style="left:96.90px;top:510.68px;line-height:12px;font-size:8.75px;color:#1c2230;font-weight:400;">Podrobný zoznam výrobkov</div><div style="left:74.50px;top:528.60px;width:8px;height:1px;background:repeating-linear-gradient(90deg,#c4c8d0 0 2px,transparent 2px 3px)"></div><svg style="position:absolute;left:85.00px;top:525.10px;" width="6" height="7" viewBox="0 0 6 7"><polygon points="0.5,0 5.5,3.5 0.5,7" fill="#2c6e8e"/></svg><div class="t" style="left:96.90px;top:523.20px;line-height:12px;font-size:8.75px;color:#1c2230;font-weight:400;">Zoznam meracích protokolov k statkom</div><div style="left:74.50px;top:541.12px;width:8px;height:1px;background:repeating-linear-gradient(90deg,#c4c8d0 0 2px,transparent 2px 3px)"></div><svg style="position:absolute;left:85.00px;top:537.62px;" width="6" height="7" viewBox="0 0 6 7"><polygon points="0.5,0 5.5,3.5 0.5,7" fill="#2c6e8e"/></svg><div class="t" style="left:96.90px;top:535.72px;line-height:12px;font-size:8.75px;color:#1c2230;font-weight:400;">Plán expedície</div><div style="left:74.50px;top:553.64px;width:8px;height:1px;background:repeating-linear-gradient(90deg,#c4c8d0 0 2px,transparent 2px 3px)"></div><svg style="position:absolute;left:85.00px;top:550.14px;" width="6" height="7" viewBox="0 0 6 7"><polygon points="0.5,0 5.5,3.5 0.5,7" fill="#2c6e8e"/></svg><div class="t" style="left:96.90px;top:548.24px;line-height:12px;font-size:8.75px;color:#1c2230;font-weight:400;">Oneskorené operácie</div><div style="left:74.50px;top:566.16px;width:8px;height:1px;background:repeating-linear-gradient(90deg,#c4c8d0 0 2px,transparent 2px 3px)"></div><svg style="position:absolute;left:85.00px;top:562.66px;" width="6" height="7" viewBox="0 0 6 7"><polygon points="0.5,0 5.5,3.5 0.5,7" fill="#2c6e8e"/></svg><div class="t" style="left:96.90px;top:560.76px;line-height:12px;font-size:8.75px;color:#1c2230;font-weight:400;">Nezhody vo výrobných výkazoch</div><div style="left:74.50px;top:578.68px;width:8px;height:1px;background:repeating-linear-gradient(90deg,#c4c8d0 0 2px,transparent 2px 3px)"></div><svg style="position:absolute;left:85.00px;top:575.18px;" width="6" height="7" viewBox="0 0 6 7"><polygon points="0.5,0 5.5,3.5 0.5,7" fill="#2c6e8e"/></svg><div class="t" style="left:96.90px;top:573.28px;line-height:12px;font-size:8.75px;color:#1c2230;font-weight:400;">Prehľad výkazov zavinenia nezhôd</div><div style="left:74.50px;top:591.20px;width:8px;height:1px;background:repeating-linear-gradient(90deg,#c4c8d0 0 2px,transparent 2px 3px)"></div><svg style="position:absolute;left:85.00px;top:587.70px;" width="6" height="7" viewBox="0 0 6 7"><polygon points="0.5,0 5.5,3.5 0.5,7" fill="#2c6e8e"/></svg><div class="t" style="left:96.90px;top:585.80px;line-height:12px;font-size:8.75px;color:#1c2230;font-weight:400;">Položky všetkých objednávok vydaných</div><div style="left:74.50px;top:603.72px;width:7px;height:1px;background:repeating-linear-gradient(90deg,#c4c8d0 0 2px,transparent 2px 3px)"></div><div style="left:71.50px;top:600.72px;width:6.5px;height:6.5px;border:1px solid #b4b8c0;background:#fff"></div><div style="left:72.90px;top:603.42px;width:3.50px;height:1.00px;background:#4058b0"></div><div style="left:74.30px;top:602.12px;width:0.70px;height:3.50px;background:#4058b0"></div><svg style="position:absolute;left:81.80px;top:599.22px;" width="12" height="9" viewBox="0 0 12 9"><path d="M0.5 0.5 L4 0.5 L5 1.5 L11 1.5 L11 8.5 L0.5 8.5Z" fill="url(#fg)"/><path d="M11 2 L11 8.5 L1 8.5" stroke="#1d6f92" stroke-width="1" fill="none"/></svg><div class="t" style="left:96.50px;top:598.32px;line-height:12px;font-size:8.75px;color:#1c2230;font-weight:400;">Obsluha pracovísk</div><div style="left:61.00px;top:616.24px;width:7px;height:1px;background:repeating-linear-gradient(90deg,#c4c8d0 0 2px,transparent 2px 3px)"></div><div style="left:58.00px;top:613.24px;width:6.5px;height:6.5px;border:1px solid #b4b8c0;background:#fff"></div><div style="left:59.40px;top:615.94px;width:3.50px;height:1.00px;background:#4058b0"></div><div style="left:60.80px;top:614.64px;width:0.70px;height:3.50px;background:#4058b0"></div><svg style="position:absolute;left:68.30px;top:611.74px;" width="12" height="9" viewBox="0 0 12 9"><path d="M0.5 0.5 L4 0.5 L5 1.5 L11 1.5 L11 8.5 L0.5 8.5Z" fill="url(#fg)"/><path d="M11 2 L11 8.5 L1 8.5" stroke="#1d6f92" stroke-width="1" fill="none"/></svg><div class="t" style="left:83.00px;top:610.84px;line-height:12px;font-size:8.75px;color:#1c2230;font-weight:400;">Zmeny výrobnej dokumentácie</div><div style="left:61.00px;top:628.76px;width:7px;height:1px;background:repeating-linear-gradient(90deg,#c4c8d0 0 2px,transparent 2px 3px)"></div><div style="left:58.00px;top:625.76px;width:6.5px;height:6.5px;border:1px solid #b4b8c0;background:#fff"></div><div style="left:59.40px;top:628.46px;width:3.50px;height:1.00px;background:#4058b0"></div><div style="left:60.80px;top:627.16px;width:0.70px;height:3.50px;background:#4058b0"></div><svg style="position:absolute;left:68.30px;top:624.26px;" width="12" height="9" viewBox="0 0 12 9"><path d="M0.5 0.5 L4 0.5 L5 1.5 L11 1.5 L11 8.5 L0.5 8.5Z" fill="url(#fg)"/><path d="M11 2 L11 8.5 L1 8.5" stroke="#1d6f92" stroke-width="1" fill="none"/></svg><div class="t" style="left:83.00px;top:623.36px;line-height:12px;font-size:8.75px;color:#1c2230;font-weight:400;">Riešenie nezhôd</div><div style="left:48.00px;top:641.28px;width:7px;height:1px;background:repeating-linear-gradient(90deg,#c4c8d0 0 2px,transparent 2px 3px)"></div><div style="left:45.00px;top:638.28px;width:6.5px;height:6.5px;border:1px solid #b4b8c0;background:#fff"></div><div style="left:46.40px;top:640.98px;width:3.50px;height:1.00px;background:#4058b0"></div><div style="left:47.80px;top:639.68px;width:0.70px;height:3.50px;background:#4058b0"></div><svg style="position:absolute;left:55.30px;top:636.78px;" width="12" height="9" viewBox="0 0 12 9"><path d="M0.5 0.5 L4 0.5 L5 1.5 L11 1.5 L11 8.5 L0.5 8.5Z" fill="url(#fg)"/><path d="M11 2 L11 8.5 L1 8.5" stroke="#1d6f92" stroke-width="1" fill="none"/></svg><div class="t" style="left:70.00px;top:635.88px;line-height:12px;font-size:8.75px;color:#1c2230;font-weight:400;">Vyhodnocovanie výroby</div><div style="left:35.00px;top:653.80px;width:7px;height:1px;background:repeating-linear-gradient(90deg,#c4c8d0 0 2px,transparent 2px 3px)"></div><div style="left:32.00px;top:650.80px;width:6.5px;height:6.5px;border:1px solid #b4b8c0;background:#fff"></div><div style="left:33.40px;top:653.50px;width:3.50px;height:1.00px;background:#4058b0"></div><div style="left:34.80px;top:652.20px;width:0.70px;height:3.50px;background:#4058b0"></div><svg style="position:absolute;left:42.30px;top:649.30px;" width="12" height="9" viewBox="0 0 12 9"><path d="M0.5 0.5 L4 0.5 L5 1.5 L11 1.5 L11 8.5 L0.5 8.5Z" fill="url(#fg)"/><path d="M11 2 L11 8.5 L1 8.5" stroke="#1d6f92" stroke-width="1" fill="none"/></svg><div class="t" style="left:57.00px;top:648.40px;line-height:12px;font-size:8.75px;color:#1c2230;font-weight:400;">Náradie</div><div style="left:35.00px;top:666.32px;width:7px;height:1px;background:repeating-linear-gradient(90deg,#c4c8d0 0 2px,transparent 2px 3px)"></div><div style="left:32.00px;top:663.32px;width:6.5px;height:6.5px;border:1px solid #b4b8c0;background:#fff"></div><div style="left:33.40px;top:666.02px;width:3.50px;height:1.00px;background:#4058b0"></div><div style="left:34.80px;top:664.72px;width:0.70px;height:3.50px;background:#4058b0"></div><svg style="position:absolute;left:42.30px;top:661.82px;" width="12" height="9" viewBox="0 0 12 9"><path d="M0.5 0.5 L4 0.5 L5 1.5 L11 1.5 L11 8.5 L0.5 8.5Z" fill="url(#fg)"/><path d="M11 2 L11 8.5 L1 8.5" stroke="#1d6f92" stroke-width="1" fill="none"/></svg><div class="t" style="left:57.00px;top:660.92px;line-height:12px;font-size:8.75px;color:#1c2230;font-weight:400;">Kompletizácia</div><div style="left:35.00px;top:678.84px;width:7px;height:1px;background:repeating-linear-gradient(90deg,#c4c8d0 0 2px,transparent 2px 3px)"></div><div style="left:32.00px;top:675.84px;width:6.5px;height:6.5px;border:1px solid #b4b8c0;background:#fff"></div><div style="left:33.40px;top:678.54px;width:3.50px;height:1.00px;background:#4058b0"></div><div style="left:34.80px;top:677.24px;width:0.70px;height:3.50px;background:#4058b0"></div><svg style="position:absolute;left:42.30px;top:674.34px;" width="12" height="9" viewBox="0 0 12 9"><path d="M0.5 0.5 L4 0.5 L5 1.5 L11 1.5 L11 8.5 L0.5 8.5Z" fill="url(#fg)"/><path d="M11 2 L11 8.5 L1 8.5" stroke="#1d6f92" stroke-width="1" fill="none"/></svg><div class="t" style="left:57.00px;top:673.44px;line-height:12px;font-size:8.75px;color:#1c2230;font-weight:400;">Evidencia inštalácií softvéru</div><div style="left:35.00px;top:691.36px;width:7px;height:1px;background:repeating-linear-gradient(90deg,#c4c8d0 0 2px,transparent 2px 3px)"></div><div style="left:32.00px;top:688.36px;width:6.5px;height:6.5px;border:1px solid #b4b8c0;background:#fff"></div><div style="left:33.40px;top:691.06px;width:3.50px;height:1.00px;background:#4058b0"></div><div style="left:34.80px;top:689.76px;width:0.70px;height:3.50px;background:#4058b0"></div><svg style="position:absolute;left:42.30px;top:686.86px;" width="12" height="9" viewBox="0 0 12 9"><path d="M0.5 0.5 L4 0.5 L5 1.5 L11 1.5 L11 8.5 L0.5 8.5Z" fill="url(#fg)"/><path d="M11 2 L11 8.5 L1 8.5" stroke="#1d6f92" stroke-width="1" fill="none"/></svg><div class="t" style="left:57.00px;top:685.96px;line-height:12px;font-size:8.75px;color:#1c2230;font-weight:400;">Evidencia inštalácií pre partnerov</div></div></div><div style="left:244.10px;top:83.60px;width:11.80px;height:610.00px;background:#eef3f8"></div><div style="left:244.10px;top:173.30px;width:11.80px;height:409.70px;background:#4f86b8"></div><svg style="position:absolute;left:246.00px;top:86.50px;" width="8" height="6" viewBox="0 0 8 6"><path d="M1 4.5 L4 1.5 L7 4.5" stroke="#1e2a3a" stroke-width="1.4" fill="none"/></svg><svg style="position:absolute;left:246.00px;top:684.50px;" width="8" height="6" viewBox="0 0 8 6"><path d="M1 1.5 L4 4.5 L7 1.5" stroke="#1e2a3a" stroke-width="1.4" fill="none"/></svg><div style="left:20.60px;top:693.60px;width:223.40px;height:11.60px;background:#f3f6fa"></div><div style="left:45.00px;top:693.60px;width:143.40px;height:11.60px;background:#d4e3f2"></div><svg style="position:absolute;left:22.50px;top:696.00px;" width="6" height="8" viewBox="0 0 6 8"><path d="M4.5 1 L1.5 4 L4.5 7" stroke="#1e2a3a" stroke-width="1.4" fill="none"/></svg><svg style="position:absolute;left:235.50px;top:696.00px;" width="6" height="8" viewBox="0 0 6 8"><path d="M1.5 1 L4.5 4 L1.5 7" stroke="#1e2a3a" stroke-width="1.4" fill="none"/></svg><div style="left:259.80px;top:49.70px;width:908.20px;height:659.30px;background:#034a97"></div><div style="left:262.75px;top:49.70px;width:1.50px;height:659.30px;background:rgba(255,255,255,0.42)"></div><div style="left:359.84px;top:49.70px;width:1.50px;height:659.30px;background:rgba(255,255,255,0.42)"></div><div style="left:456.93px;top:49.70px;width:1.50px;height:659.30px;background:rgba(255,255,255,0.42)"></div><div style="left:554.02px;top:49.70px;width:1.50px;height:659.30px;background:rgba(255,255,255,0.42)"></div><div style="left:651.11px;top:49.70px;width:1.50px;height:659.30px;background:rgba(255,255,255,0.42)"></div><div style="left:748.20px;top:49.70px;width:1.50px;height:659.30px;background:rgba(255,255,255,0.42)"></div><div style="left:845.29px;top:49.70px;width:1.50px;height:659.30px;background:rgba(255,255,255,0.42)"></div><div style="left:942.38px;top:49.70px;width:1.50px;height:659.30px;background:rgba(255,255,255,0.42)"></div><div style="left:1039.47px;top:49.70px;width:1.50px;height:659.30px;background:rgba(255,255,255,0.42)"></div><div style="left:259.80px;top:146.15px;width:908.20px;height:1.50px;background:rgba(255,255,255,0.42)"></div><div style="left:259.80px;top:243.35px;width:908.20px;height:1.50px;background:rgba(255,255,255,0.42)"></div><div style="left:259.80px;top:340.55px;width:908.20px;height:1.50px;background:rgba(255,255,255,0.42)"></div><div style="left:259.80px;top:437.75px;width:908.20px;height:1.50px;background:rgba(255,255,255,0.42)"></div><div style="left:259.80px;top:534.95px;width:908.20px;height:1.50px;background:rgba(255,255,255,0.42)"></div><div style="left:259.80px;top:632.15px;width:908.20px;height:1.50px;background:rgba(255,255,255,0.42)"></div><div style="left:1039.50px;top:49.70px;width:1.40px;height:659.30px;background:rgba(255,255,255,0.62)"></div><div style="left:1045.62px;top:49.70px;width:1.40px;height:659.30px;background:rgba(255,255,255,0.62)"></div><div style="left:1051.74px;top:49.70px;width:1.40px;height:659.30px;background:rgba(255,255,255,0.62)"></div><div style="left:1057.86px;top:49.70px;width:1.40px;height:659.30px;background:rgba(255,255,255,0.62)"></div><div style="left:1063.98px;top:49.70px;width:1.40px;height:659.30px;background:rgba(255,255,255,0.62)"></div><div style="left:1070.10px;top:49.70px;width:1.40px;height:659.30px;background:rgba(255,255,255,0.62)"></div><div style="left:1040.20px;top:146.20px;width:30.60px;height:1.40px;background:rgba(255,255,255,0.62)"></div><div style="left:1040.20px;top:152.30px;width:30.60px;height:1.40px;background:rgba(255,255,255,0.62)"></div><div style="left:1040.20px;top:158.40px;width:30.60px;height:1.40px;background:rgba(255,255,255,0.62)"></div><div style="left:1040.20px;top:164.50px;width:30.60px;height:1.40px;background:rgba(255,255,255,0.62)"></div><div style="left:1040.20px;top:170.60px;width:30.60px;height:1.40px;background:rgba(255,255,255,0.62)"></div><div style="left:1040.20px;top:176.70px;width:30.60px;height:1.40px;background:rgba(255,255,255,0.62)"></div><div style="left:1040.20px;top:182.80px;width:30.60px;height:1.40px;background:rgba(255,255,255,0.62)"></div><div style="left:1040.20px;top:188.90px;width:30.60px;height:1.40px;background:rgba(255,255,255,0.62)"></div><div style="left:1040.20px;top:195.00px;width:30.60px;height:1.40px;background:rgba(255,255,255,0.62)"></div><div style="left:1040.20px;top:201.10px;width:30.60px;height:1.40px;background:rgba(255,255,255,0.62)"></div><div style="left:1040.20px;top:207.20px;width:30.60px;height:1.40px;background:rgba(255,255,255,0.62)"></div><div style="left:1040.20px;top:213.30px;width:30.60px;height:1.40px;background:rgba(255,255,255,0.62)"></div><div style="left:1040.20px;top:219.40px;width:30.60px;height:1.40px;background:rgba(255,255,255,0.62)"></div><div style="left:1040.20px;top:225.50px;width:30.60px;height:1.40px;background:rgba(255,255,255,0.62)"></div><div style="left:1040.20px;top:231.60px;width:30.60px;height:1.40px;background:rgba(255,255,255,0.62)"></div><div style="left:1040.20px;top:237.70px;width:30.60px;height:1.40px;background:rgba(255,255,255,0.62)"></div><div style="left:1040.20px;top:243.80px;width:30.60px;height:1.40px;background:rgba(255,255,255,0.62)"></div><div style="left:1040.20px;top:249.90px;width:30.60px;height:1.40px;background:rgba(255,255,255,0.62)"></div><div style="left:1040.20px;top:256.00px;width:30.60px;height:1.40px;background:rgba(255,255,255,0.62)"></div><div style="left:1040.20px;top:262.10px;width:30.60px;height:1.40px;background:rgba(255,255,255,0.62)"></div><div style="left:1040.20px;top:268.20px;width:30.60px;height:1.40px;background:rgba(255,255,255,0.62)"></div><div style="left:1040.20px;top:274.30px;width:30.60px;height:1.40px;background:rgba(255,255,255,0.62)"></div><div style="left:1040.20px;top:280.40px;width:30.60px;height:1.40px;background:rgba(255,255,255,0.62)"></div><div style="left:1040.20px;top:286.50px;width:30.60px;height:1.40px;background:rgba(255,255,255,0.62)"></div><div style="left:1040.20px;top:292.60px;width:30.60px;height:1.40px;background:rgba(255,255,255,0.62)"></div><div style="left:1040.20px;top:298.70px;width:30.60px;height:1.40px;background:rgba(255,255,255,0.62)"></div><div style="left:1040.20px;top:304.80px;width:30.60px;height:1.40px;background:rgba(255,255,255,0.62)"></div><div style="left:1040.20px;top:310.90px;width:30.60px;height:1.40px;background:rgba(255,255,255,0.62)"></div><div style="left:1040.20px;top:317.00px;width:30.60px;height:1.40px;background:rgba(255,255,255,0.62)"></div><div style="left:1040.20px;top:323.10px;width:30.60px;height:1.40px;background:rgba(255,255,255,0.62)"></div><div style="left:1040.20px;top:329.20px;width:30.60px;height:1.40px;background:rgba(255,255,255,0.62)"></div><div style="left:1040.20px;top:335.30px;width:30.60px;height:1.40px;background:rgba(255,255,255,0.62)"></div><div style="left:1040.20px;top:341.40px;width:30.60px;height:1.40px;background:rgba(255,255,255,0.62)"></div><div style="left:1040.20px;top:347.50px;width:30.60px;height:1.40px;background:rgba(255,255,255,0.62)"></div><div style="left:1040.20px;top:353.60px;width:30.60px;height:1.40px;background:rgba(255,255,255,0.62)"></div><div style="left:1040.20px;top:359.70px;width:30.60px;height:1.40px;background:rgba(255,255,255,0.62)"></div><div style="left:1040.20px;top:365.80px;width:30.60px;height:1.40px;background:rgba(255,255,255,0.62)"></div><div style="left:1040.20px;top:371.90px;width:30.60px;height:1.40px;background:rgba(255,255,255,0.62)"></div><div style="left:1040.20px;top:378.00px;width:30.60px;height:1.40px;background:rgba(255,255,255,0.62)"></div><div style="left:1040.20px;top:384.10px;width:30.60px;height:1.40px;background:rgba(255,255,255,0.62)"></div><div style="left:1040.20px;top:390.20px;width:30.60px;height:1.40px;background:rgba(255,255,255,0.62)"></div><div style="left:1040.20px;top:396.30px;width:30.60px;height:1.40px;background:rgba(255,255,255,0.62)"></div><div style="left:1040.20px;top:402.40px;width:30.60px;height:1.40px;background:rgba(255,255,255,0.62)"></div><div style="left:1040.20px;top:408.50px;width:30.60px;height:1.40px;background:rgba(255,255,255,0.62)"></div><div style="left:1040.20px;top:414.60px;width:30.60px;height:1.40px;background:rgba(255,255,255,0.62)"></div><div style="left:1040.20px;top:420.70px;width:30.60px;height:1.40px;background:rgba(255,255,255,0.62)"></div><div style="left:1040.20px;top:426.80px;width:30.60px;height:1.40px;background:rgba(255,255,255,0.62)"></div><div style="left:1040.20px;top:432.90px;width:30.60px;height:1.40px;background:rgba(255,255,255,0.62)"></div><div style="left:1040.20px;top:439.00px;width:30.60px;height:1.40px;background:rgba(255,255,255,0.62)"></div><div style="left:1040.20px;top:445.10px;width:30.60px;height:1.40px;background:rgba(255,255,255,0.62)"></div><div style="left:1040.20px;top:451.20px;width:30.60px;height:1.40px;background:rgba(255,255,255,0.62)"></div><div style="left:1040.20px;top:457.30px;width:30.60px;height:1.40px;background:rgba(255,255,255,0.62)"></div><div style="left:1040.20px;top:463.40px;width:30.60px;height:1.40px;background:rgba(255,255,255,0.62)"></div><div style="left:1040.20px;top:469.50px;width:30.60px;height:1.40px;background:rgba(255,255,255,0.62)"></div><div style="left:1040.20px;top:475.60px;width:30.60px;height:1.40px;background:rgba(255,255,255,0.62)"></div><div style="left:1040.20px;top:481.70px;width:30.60px;height:1.40px;background:rgba(255,255,255,0.62)"></div><div style="left:1040.20px;top:487.80px;width:30.60px;height:1.40px;background:rgba(255,255,255,0.62)"></div><div style="left:1040.20px;top:493.90px;width:30.60px;height:1.40px;background:rgba(255,255,255,0.62)"></div><div style="left:1040.20px;top:500.00px;width:30.60px;height:1.40px;background:rgba(255,255,255,0.62)"></div><div style="left:1040.20px;top:506.10px;width:30.60px;height:1.40px;background:rgba(255,255,255,0.62)"></div><div style="left:1040.20px;top:512.20px;width:30.60px;height:1.40px;background:rgba(255,255,255,0.62)"></div><div style="left:1040.20px;top:518.30px;width:30.60px;height:1.40px;background:rgba(255,255,255,0.62)"></div><div style="left:1040.20px;top:524.40px;width:30.60px;height:1.40px;background:rgba(255,255,255,0.62)"></div><div style="left:1040.20px;top:530.50px;width:30.60px;height:1.40px;background:rgba(255,255,255,0.62)"></div><div style="left:1040.20px;top:536.60px;width:30.60px;height:1.40px;background:rgba(255,255,255,0.62)"></div><div style="left:1040.20px;top:542.70px;width:30.60px;height:1.40px;background:rgba(255,255,255,0.62)"></div><div style="left:1040.20px;top:548.80px;width:30.60px;height:1.40px;background:rgba(255,255,255,0.62)"></div><div style="left:1040.20px;top:554.90px;width:30.60px;height:1.40px;background:rgba(255,255,255,0.62)"></div><div style="left:1040.20px;top:561.00px;width:30.60px;height:1.40px;background:rgba(255,255,255,0.62)"></div><div style="left:1040.20px;top:567.10px;width:30.60px;height:1.40px;background:rgba(255,255,255,0.62)"></div><div style="left:1040.20px;top:573.20px;width:30.60px;height:1.40px;background:rgba(255,255,255,0.62)"></div><div style="left:1040.20px;top:579.30px;width:30.60px;height:1.40px;background:rgba(255,255,255,0.62)"></div><div style="left:1040.20px;top:585.40px;width:30.60px;height:1.40px;background:rgba(255,255,255,0.62)"></div><div style="left:1040.20px;top:591.50px;width:30.60px;height:1.40px;background:rgba(255,255,255,0.62)"></div><div style="left:1040.20px;top:597.60px;width:30.60px;height:1.40px;background:rgba(255,255,255,0.62)"></div><div style="left:1040.20px;top:603.70px;width:30.60px;height:1.40px;background:rgba(255,255,255,0.62)"></div><div style="left:1040.20px;top:609.80px;width:30.60px;height:1.40px;background:rgba(255,255,255,0.62)"></div><div style="left:1040.20px;top:615.90px;width:30.60px;height:1.40px;background:rgba(255,255,255,0.62)"></div><div style="left:1040.20px;top:622.00px;width:30.60px;height:1.40px;background:rgba(255,255,255,0.62)"></div><div style="left:1040.20px;top:628.10px;width:30.60px;height:1.40px;background:rgba(255,255,255,0.62)"></div><div style="left:1040.20px;top:634.20px;width:30.60px;height:1.40px;background:rgba(255,255,255,0.62)"></div><div style="left:1040.20px;top:640.30px;width:30.60px;height:1.40px;background:rgba(255,255,255,0.62)"></div><div style="left:1040.20px;top:646.40px;width:30.60px;height:1.40px;background:rgba(255,255,255,0.62)"></div><div style="left:1040.20px;top:652.50px;width:30.60px;height:1.40px;background:rgba(255,255,255,0.62)"></div><div style="left:1040.20px;top:658.60px;width:30.60px;height:1.40px;background:rgba(255,255,255,0.62)"></div><div style="left:1040.20px;top:664.70px;width:30.60px;height:1.40px;background:rgba(255,255,255,0.62)"></div><div style="left:1040.20px;top:670.80px;width:30.60px;height:1.40px;background:rgba(255,255,255,0.62)"></div><div style="left:1040.20px;top:676.90px;width:30.60px;height:1.40px;background:rgba(255,255,255,0.62)"></div><div style="left:1040.20px;top:683.00px;width:30.60px;height:1.40px;background:rgba(255,255,255,0.62)"></div><div style="left:1040.20px;top:689.10px;width:30.60px;height:1.40px;background:rgba(255,255,255,0.62)"></div><div style="left:1040.20px;top:695.20px;width:30.60px;height:1.40px;background:rgba(255,255,255,0.62)"></div><div style="left:1040.20px;top:701.30px;width:30.60px;height:1.40px;background:rgba(255,255,255,0.62)"></div><div style="left:1040.20px;top:707.40px;width:30.60px;height:1.40px;background:rgba(255,255,255,0.62)"></div><div style="left:1040.20px;top:140.10px;width:6.12px;height:1.40px;background:rgba(255,255,255,0.62)"></div><div style="left:1040.20px;top:134.00px;width:6.12px;height:1.40px;background:rgba(255,255,255,0.62)"></div><div style="left:1040.20px;top:127.90px;width:6.12px;height:1.40px;background:rgba(255,255,255,0.62)"></div><div style="left:1040.20px;top:121.80px;width:6.12px;height:1.40px;background:rgba(255,255,255,0.62)"></div><div style="left:1040.20px;top:115.70px;width:6.12px;height:1.40px;background:rgba(255,255,255,0.62)"></div><div style="left:1040.20px;top:109.60px;width:6.12px;height:1.40px;background:rgba(255,255,255,0.62)"></div><div style="left:1040.20px;top:103.50px;width:6.12px;height:1.40px;background:rgba(255,255,255,0.62)"></div><div style="left:1040.20px;top:97.40px;width:6.12px;height:1.40px;background:rgba(255,255,255,0.62)"></div><div style="left:1040.20px;top:91.30px;width:6.12px;height:1.40px;background:rgba(255,255,255,0.62)"></div><div style="left:1040.20px;top:85.20px;width:6.12px;height:1.40px;background:rgba(255,255,255,0.62)"></div><div style="left:1040.20px;top:79.10px;width:6.12px;height:1.40px;background:rgba(255,255,255,0.62)"></div><div style="left:1040.20px;top:73.00px;width:6.12px;height:1.40px;background:rgba(255,255,255,0.62)"></div><div style="left:1040.20px;top:66.90px;width:6.12px;height:1.40px;background:rgba(255,255,255,0.62)"></div><div style="left:1040.20px;top:60.80px;width:6.12px;height:1.40px;background:rgba(255,255,255,0.62)"></div><div style="left:1040.20px;top:54.70px;width:6.12px;height:1.40px;background:rgba(255,255,255,0.62)"></div><div style="left:1040.20px;top:48.60px;width:6.12px;height:1.40px;background:rgba(255,255,255,0.62)"></div><svg style="position:absolute;left:940.00px;top:49.70px;" width="131" height="98" viewBox="0 0 131 98"><defs><clipPath id="qc"><rect x="0" y="0" width="131" height="97.2"/></clipPath></defs><g clip-path="url(#qc)"><circle cx="51" cy="48.5" r="48.6" fill="#fff"/><circle cx="51" cy="48.5" r="26.2" fill="#034a97"/><path d="M51.3 22 L51.3 75 M25 48.8 L77 48.8" stroke="#cfdcec" stroke-width="1.3"/><polygon points="68.7,49.6 99.1,80.1 83,96.6 52.2,65.3" fill="#fff"/><rect x="106" y="0" width="24.5" height="97.2" fill="#fff"/><rect x="106" y="24" width="24.5" height="6" fill="#034a97"/><path d="M106 24 H130.5 M106 30 H130.5 M112.1 24 V30 M118.2 24 V30 M124.3 24 V30" stroke="#dfe8f2" stroke-width="1.3"/></g></svg><div style="left:1071.00px;top:49.70px;width:95.80px;height:96.50px;background:#034a97"></div><div style="left:1166.80px;top:49.70px;width:1.20px;height:659.30px;background:#d9e1ea"></div><div class="t" style="left:1076.20px;top:55.30px;line-height:15px;font-size:13.9px;color:#ffffff;font-weight:400;letter-spacing:0.2px;-webkit-text-stroke:0.2px #fff">CENTRÁLNY</div><div class="t" style="left:1076.20px;top:70.20px;line-height:15px;font-size:13.9px;color:#ffffff;font-weight:400;letter-spacing:0.2px;-webkit-text-stroke:0.2px #fff">MOZOG</div><div class="t" style="left:1076.20px;top:85.60px;line-height:15px;font-size:13.9px;color:#ffffff;font-weight:400;letter-spacing:0.2px;-webkit-text-stroke:0.2px #fff">FIRMY</div><div class="t" style="left:592.20px;width:600px;text-align:center;top:116.10px;line-height:10px;font-size:7.55px;color:#e4ecf6;font-weight:400;-webkit-text-stroke:0;">Zoznam výrobných</div><div class="t" style="left:592.20px;width:600px;text-align:center;top:124.90px;line-height:10px;font-size:7.55px;color:#e4ecf6;font-weight:400;-webkit-text-stroke:0;">zakáziek</div><div class="t" style="left:592.90px;width:600px;text-align:center;top:211.60px;line-height:10px;font-size:7.55px;color:#e4ecf6;font-weight:400;-webkit-text-stroke:0;">Zákazka položka -</div><div class="t" style="left:592.90px;width:600px;text-align:center;top:221.00px;line-height:10px;font-size:7.55px;color:#e4ecf6;font-weight:400;-webkit-text-stroke:0;">výrobné príkazy</div><div class="t" style="left:692.80px;width:600px;text-align:center;top:213.20px;line-height:10px;font-size:7.55px;color:#e4ecf6;font-weight:400;-webkit-text-stroke:0;">Zákazka položka -</div><div class="t" style="left:692.80px;width:600px;text-align:center;top:222.60px;line-height:10px;font-size:7.55px;color:#e4ecf6;font-weight:400;-webkit-text-stroke:0;">žiadanky na materiál</div><div class="t" style="left:818.90px;width:600px;text-align:center;top:214.50px;line-height:10px;font-size:7.55px;color:#e4ecf6;font-weight:400;-webkit-text-stroke:0;">Zákazka položka -</div><div class="t" style="left:818.90px;width:600px;text-align:center;top:224.00px;line-height:10px;font-size:7.55px;color:#e4ecf6;font-weight:400;-webkit-text-stroke:0;">operácia</div><svg style="position:absolute;left:866.00px;top:62.00px;" width="54" height="50" viewBox="0 0 54 50"><defs><linearGradient id="rf1" x1="0" y1="0" x2="0" y2="1"><stop offset="0" stop-color="#9fbde6" stop-opacity=".55"/><stop offset="1" stop-color="#9fbde6" stop-opacity="0"/></linearGradient></defs><rect x="7" y="43" width="24" height="6" fill="url(#rf1)"/><path d="M7.5 22 Q7 19.5 9.5 19.5 L27.5 19 Q30 19 30 21.5 L30.5 39 Q30.5 41.5 28 41.5 L10 41.5 Q7.5 41.5 7.5 39Z" fill="#fdfdfd" stroke="#bdbdbd" stroke-width="2"/><path d="M26 16 L45 14.5 Q47.5 14.5 47.5 17 L48 33 Q48.5 35 46 35.5 L29 37.5 Q26.5 38 26.5 35.5Z" fill="#fbfbfb" stroke="#a9a9a9" stroke-width="2"/><path d="M11.5 8 Q11 5.5 13.5 5.5 L31 5.5 Q33.5 5.5 33.5 8 L35 23 Q35.5 26 32.5 26 L16.5 27 Q14 27 13.5 24.5Z" fill="#fff" stroke="#e8141c" stroke-width="2.6"/><path d="M16 15 L19 10 L22 15 L25 10 L28 15 M19 22 L22 17 L25 22 L28 17 L31 22 M11 33.5 L14 29 L17 33.5 L20 29 L23 33.5 M32 31 L35 26.5 L38 31 L41 26.5 L44 31" stroke="#5c5c5c" stroke-width="1.5" fill="none"/></svg><svg style="position:absolute;left:868.00px;top:158.00px;" width="50" height="50" viewBox="0 0 50 50"><defs><linearGradient id="rf2" x1="0" y1="0" x2="0" y2="1"><stop offset="0" stop-color="#9fbde6" stop-opacity=".5"/><stop offset="1" stop-color="#9fbde6" stop-opacity="0"/></linearGradient></defs><rect x="11" y="43" width="26" height="6" fill="url(#rf2)"/><path d="M11.5 10.5 Q11.5 9 13 9 L36 9 Q37.3 9 37.3 10.5 L37.3 34 L30.5 41.6 L13 41.6 Q11.5 41.6 11.5 40Z" fill="#f8f8f8" stroke="#d2d2d2" stroke-width=".8"/><path d="M30.5 41.6 L30.5 35.5 Q30.5 34.3 31.7 34.3 L37.3 34Z" fill="#dcdcdc" stroke="#c4c4c4" stroke-width=".6"/><path d="M13.0 12.9 L14.7 15.5 L16.3 12.9 L17.9 15.5 L19.6 12.9 L21.2 15.5 L22.9 12.9 M22.0 19.3 L23.6 21.9 L25.3 19.3 L26.9 21.9 L28.6 19.3 L30.2 21.9 L31.9 19.3 M14.0 26.7 L15.7 29.3 L17.3 26.7 L18.9 29.3 L20.6 26.7 L22.2 29.3" stroke="#3a3a3a" stroke-width="1.1" fill="none"/><rect x="7" y="16.2" width="14.5" height="9.4" rx="2" fill="#c8c8c8" stroke="#b0b0b0" stroke-width=".6"/><polygon points="9,25 13,25 9.8,29.6" fill="#c8c8c8"/><path d="M9.0 18.9 L10.2 20.7 L11.4 18.9 L12.6 20.7 L13.8 18.9 L15.0 20.7 L16.2 18.9 L17.4 20.7 L18.6 18.9 L19.8 20.7 M9.0 22.1 L10.2 23.9 L11.4 22.1 L12.6 23.9 L13.8 22.1 L15.0 23.9 L16.2 22.1 L17.4 23.9 L18.6 22.1 L19.8 23.9" stroke="#555" stroke-width=".9" fill="none"/><rect x="23.3" y="5.3" width="19.7" height="12.2" rx="2.5" fill="#e8141c"/><polygon points="33,17 37.5,17 36.5,23.6" fill="#e8141c"/><path d="M26.0 8.7 L27.4 10.9 L28.9 8.7 L30.3 10.9 L31.8 8.7 L33.2 10.9 L34.7 8.7 L36.2 10.9 L37.6 8.7 L39.1 10.9 L40.5 8.7 M26.0 12.9 L27.4 15.1 L28.9 12.9 L30.3 15.1 L31.8 12.9 L33.2 15.1 L34.7 12.9 L36.2 15.1 L37.6 12.9 L39.1 15.1 L40.5 12.9" stroke="#fff" stroke-width="1" fill="none"/></svg><svg style="position:absolute;left:1101.00px;top:202.00px;" width="36" height="7" viewBox="0 0 36 7"><defs><linearGradient id="rf4" x1="0" y1="0" x2="0" y2="1"><stop offset="0" stop-color="#9fbde6" stop-opacity=".18"/><stop offset="1" stop-color="#9fbde6" stop-opacity="0"/></linearGradient></defs><rect x="0" y="0" width="36" height="7" fill="url(#rf4)"/></svg><svg style="position:absolute;left:965.00px;top:165.00px;" width="55" height="45" viewBox="0 0 55 45"><defs><linearGradient id="rf3" x1="0" y1="0" x2="0" y2="1"><stop offset="0" stop-color="#9fbde6" stop-opacity=".2"/><stop offset="1" stop-color="#9fbde6" stop-opacity="0"/></linearGradient></defs><rect x="7" y="37.5" width="42" height="6" fill="url(#rf3)"/><rect x="19" y="7" width="2" height="26" fill="#6f6a66"/><rect x="7.6" y="30" width="13.4" height="3" fill="#6f6a66"/><rect x="6" y="7.8" width="11.5" height="7.2" fill="#cdd1d3"/><rect x="8.5" y="15" width="9" height="8" fill="#e22a2e"/><polygon points="6,24.5 17.5,23 18,30 7,31.5" fill="#d2d6d8"/><path d="M22.6 31 L29 7.6 Q29.5 6.5 31 6.5 L47 6.5 Q49.4 6.5 49.4 9 L49.4 30 Q49.4 32 47.4 32 L24 32Z" fill="#e22a2e"/><polygon points="26.3,22 30.4,8.6 37.7,8.6 37.7,22" fill="#fff"/><rect x="39.5" y="8.6" width="8.6" height="13.4" rx="1" fill="#fff"/><circle cx="29.8" cy="32.7" r="4.3" fill="#6f6a66"/><circle cx="42.8" cy="33.3" r="3.3" fill="#6f6a66"/></svg><svg style="position:absolute;left:1099.00px;top:165.00px;" width="38" height="38" viewBox="0 0 38 38"><path d="M8 30 L29 9" stroke="#767676" stroke-width="4.6"/><circle cx="30.5" cy="7.5" r="7" fill="#767676"/><rect x="30.5" y="5" width="10" height="5" fill="#034a97" transform="rotate(-45 30.5 7.5)"/><circle cx="7" cy="31" r="7" fill="#767676"/><rect x="-3" y="28.5" width="10" height="5" fill="#034a97" transform="rotate(-45 7 31)"/><polygon points="0.5,0.5 7.5,3.5 3.5,7.5" fill="#8c8c8c"/><path d="M4 4 L16 16" stroke="#8c8c8c" stroke-width="1.8"/><rect x="12" y="17.5" width="24" height="10" rx="2" fill="#e2262c" transform="rotate(45 24 22.5)"/><path d="M20.5 27 L27.5 34 M23 24.5 L30 31.5 M25.5 22 L32.5 29" stroke="#9e1a1e" stroke-width="1" opacity=".8"/><path d="M16.5 19.5 Q15.5 21.5 17.5 23" stroke="#fff" stroke-width="1.2" fill="none"/><rect x="31" y="31.5" width="5" height="5" fill="#6a6a6a" transform="rotate(45 33.5 34)"/></svg><div style="left:817.80px;top:65.20px;width:4.00px;height:404.80px;background:#f2f2f2"></div><div style="left:817.80px;top:65.20px;width:4.00px;height:17.60px;background:#e3e3e3"></div><div style="left:273.90px;top:63.80px;width:543.90px;height:406.20px;background:#fff;border:1px solid #d6d6d6"></div><div style="left:273.90px;top:63.80px;width:543.90px;height:19.20px;background:#ebebeb;border-bottom:1px solid #dbe6f2"></div><svg style="position:absolute;left:278.40px;top:66.60px;" width="11" height="13" viewBox="0 0 11 13"><polygon points="0.8,1 9.8,6.5 0.8,12" fill="#ffffff" stroke="#dcdcdc" stroke-width=".7"/><path d="M2.5 9.8 L7.5 7.2" stroke="#9c9c9c" stroke-width="1"/><path d="M1.5 3.5 L2.8 2" stroke="#b0b0b0" stroke-width=".8"/></svg><div class="t" style="left:291.70px;top:66.90px;line-height:12px;font-size:8.3px;color:#554c40;font-weight:700;-webkit-text-stroke:0;">Zoznam výrobných zákaziek</div><div class="t" style="left:459.30px;width:300px;text-align:right;top:66.80px;line-height:12px;font-size:8.3px;color:#6a6254;font-weight:700;-webkit-text-stroke:0;">131</div><div style="left:767.30px;top:73.30px;width:7.00px;height:1.00px;background:#333"></div><div style="left:784.30px;top:70.20px;width:7.60px;height:7.50px;border:1.2px solid #222"></div><svg style="position:absolute;left:801.60px;top:69.80px;" width="8" height="8" viewBox="0 0 8 8"><path d="M0.8 0.8 L7.2 7.2 M7.2 0.8 L0.8 7.2" stroke="#111" stroke-width="1.6"/></svg><div style="left:282.40px;top:102.20px;width:429.20px;height:372.80px;background:#f7fbff;border:1px solid #d3e2f5"></div><div style="left:282.40px;top:88.20px;width:36.50px;height:15.00px;background:#fff;border:1px solid #cadcf3;border-bottom:none;border-radius:2px 2px 0 0"></div><div style="left:318.90px;top:102.20px;width:392.70px;height:1.00px;background:#cadcf3"></div><div class="t" style="left:286.70px;top:89.80px;line-height:11px;font-size:7.35px;color:#3a3a3a;font-weight:400;">Zoznam</div><div class="t" style="left:322.00px;top:90.70px;line-height:11px;font-size:7.35px;color:#1e2a38;font-weight:400;">Detail</div><div class="t" style="left:351.40px;top:90.70px;line-height:11px;font-size:7.35px;color:#1e2a38;font-weight:400;">Popis</div><div style="left:291.00px;top:111.20px;width:412.20px;height:363.80px;background:#fbfdff;border:1px solid #dde8f4"></div><div style="left:291.00px;top:111.20px;width:397.20px;height:25.60px;background:linear-gradient(#ffffff,#eef4fb);border:1px solid #dde8f4"></div><div style="left:378.50px;top:111.20px;width:1.00px;height:25.60px;background:#dde8f4"></div><div style="left:427.90px;top:111.20px;width:1.00px;height:25.60px;background:#dde8f4"></div><div style="left:513.90px;top:111.20px;width:1.00px;height:25.60px;background:#dde8f4"></div><div style="left:570.30px;top:111.20px;width:1.00px;height:25.60px;background:#dde8f4"></div><div style="left:619.70px;top:111.20px;width:1.00px;height:25.60px;background:#dde8f4"></div><div class="t" style="left:294.50px;top:115.20px;line-height:8px;font-size:6.5px;color:#8ab0d0;font-weight:400;">1</div><svg style="position:absolute;left:298.00px;top:115.50px;" width="6" height="6" viewBox="0 0 6 6"><polygon points="0.3,0.5 5.7,0.5 3,5.2" fill="#a4a9b2"/></svg><div class="t" style="left:305.80px;top:114.20px;line-height:10px;font-size:7.35px;color:#1e2a38;font-weight:400;">Evidenčné číslo</div><div class="t" style="left:305.80px;top:123.20px;line-height:10px;font-size:7.35px;color:#1e2a38;font-weight:400;">zákazky</div><div class="t" style="left:381.40px;top:114.20px;line-height:10px;font-size:7.35px;color:#1e2a38;font-weight:400;">Stav</div><div class="t" style="left:381.40px;top:123.20px;line-height:10px;font-size:7.35px;color:#1e2a38;font-weight:400;">výrobnej z...</div><div class="t" style="left:430.80px;top:114.20px;line-height:10px;font-size:7.35px;color:#1e2a38;font-weight:400;">Rad, podtyp</div><div class="t" style="left:516.80px;top:114.20px;line-height:10px;font-size:7.35px;color:#1e2a38;font-weight:400;">Dátum</div><div class="t" style="left:516.80px;top:123.20px;line-height:10px;font-size:7.35px;color:#1e2a38;font-weight:400;">vytvorenia</div><div class="t" style="left:573.20px;top:114.20px;line-height:10px;font-size:7.35px;color:#1e2a38;font-weight:400;">Dátum</div><div class="t" style="left:573.20px;top:123.20px;line-height:10px;font-size:7.35px;color:#1e2a38;font-weight:400;">dodania</div><div class="t" style="left:622.60px;top:114.20px;line-height:10px;font-size:7.35px;color:#1e2a38;font-weight:400;">Vytvoril</div><div style="left:291.50px;top:136.80px;width:399.00px;height:12.53px;background:#0e4b70"></div><div style="left:378.50px;top:136.80px;width:1.00px;height:12.53px;background:#5d8bb0"></div><div style="left:427.90px;top:136.80px;width:1.00px;height:12.53px;background:#5d8bb0"></div><div style="left:513.90px;top:136.80px;width:1.00px;height:12.53px;background:#5d8bb0"></div><div style="left:570.30px;top:136.80px;width:1.00px;height:12.53px;background:#5d8bb0"></div><div style="left:619.70px;top:136.80px;width:1.00px;height:12.53px;background:#5d8bb0"></div><div style="left:687.70px;top:136.80px;width:1.00px;height:12.53px;background:#5d8bb0"></div><div style="left:291.00px;top:136.80px;width:87.50px;height:12.53px;overflow:hidden;"><div style="left:-291.00px;top:-136.80px;width:1168px;height:709px"><div class="t" style="left:292.50px;top:138.36px;line-height:11px;font-size:7.35px;color:#ffffff;font-weight:400;-webkit-text-stroke:0;">VZ-KOL-2018-000002</div></div></div><div style="left:379.00px;top:136.80px;width:48.90px;height:12.53px;overflow:hidden;"><div style="left:-379.00px;top:-136.80px;width:1168px;height:709px"><div class="t" style="left:380.50px;top:138.36px;line-height:11px;font-size:7.35px;color:#ffffff;font-weight:400;-webkit-text-stroke:0;">Rozpracovaná</div></div></div><div style="left:428.40px;top:136.80px;width:85.50px;height:12.53px;overflow:hidden;"><div style="left:-428.40px;top:-136.80px;width:1168px;height:709px"><div class="t" style="left:429.90px;top:138.36px;line-height:11px;font-size:7.35px;color:#ffffff;font-weight:400;-webkit-text-stroke:0;">Výrobní zakázky - kola</div></div></div><div style="left:514.40px;top:136.80px;width:55.90px;height:12.53px;overflow:hidden;"><div style="left:-514.40px;top:-136.80px;width:1168px;height:709px"><div class="t" style="left:515.90px;top:138.36px;line-height:11px;font-size:7.35px;color:#ffffff;font-weight:400;-webkit-text-stroke:0;">22.06.2018</div></div></div><div style="left:570.80px;top:136.80px;width:48.90px;height:12.53px;overflow:hidden;"><div style="left:-570.80px;top:-136.80px;width:1168px;height:709px"><div class="t" style="left:572.30px;top:138.36px;line-height:11px;font-size:7.35px;color:#ffffff;font-weight:400;-webkit-text-stroke:0;">28.09.2018</div></div></div><div style="left:620.20px;top:136.80px;width:67.50px;height:12.53px;overflow:hidden;"><div style="left:-620.20px;top:-136.80px;width:1168px;height:709px"><div class="t" style="left:621.70px;top:138.36px;line-height:11px;font-size:7.35px;color:#ffffff;font-weight:400;-webkit-text-stroke:0;">Plocek Rudolf</div></div></div><div style="left:291.50px;top:149.33px;width:396.70px;height:12.53px;background:#c6daf5"></div><div style="left:378.50px;top:149.33px;width:1.00px;height:12.53px;background:#eef4fc"></div><div style="left:427.90px;top:149.33px;width:1.00px;height:12.53px;background:#eef4fc"></div><div style="left:513.90px;top:149.33px;width:1.00px;height:12.53px;background:#eef4fc"></div><div style="left:570.30px;top:149.33px;width:1.00px;height:12.53px;background:#eef4fc"></div><div style="left:619.70px;top:149.33px;width:1.00px;height:12.53px;background:#eef4fc"></div><div style="left:291.00px;top:149.33px;width:87.50px;height:12.53px;overflow:hidden;"><div style="left:-291.00px;top:-149.33px;width:1168px;height:709px"><div class="t" style="left:292.50px;top:150.89px;line-height:11px;font-size:7.35px;color:#1e2a38;font-weight:400;">VZ-KOL-2018-000001</div></div></div><div style="left:379.00px;top:149.33px;width:48.90px;height:12.53px;overflow:hidden;"><div style="left:-379.00px;top:-149.33px;width:1168px;height:709px"><div class="t" style="left:380.50px;top:150.89px;line-height:11px;font-size:7.35px;color:#1e2a38;font-weight:400;">Dokončená</div></div></div><div style="left:428.40px;top:149.33px;width:85.50px;height:12.53px;overflow:hidden;"><div style="left:-428.40px;top:-149.33px;width:1168px;height:709px"><div class="t" style="left:429.90px;top:150.89px;line-height:11px;font-size:7.35px;color:#1e2a38;font-weight:400;">Výrobní zakázky - kola</div></div></div><div style="left:514.40px;top:149.33px;width:55.90px;height:12.53px;overflow:hidden;"><div style="left:-514.40px;top:-149.33px;width:1168px;height:709px"><div class="t" style="left:515.90px;top:150.89px;line-height:11px;font-size:7.35px;color:#1e2a38;font-weight:400;">01.01.2018</div></div></div><div style="left:570.80px;top:149.33px;width:48.90px;height:12.53px;overflow:hidden;"><div style="left:-570.80px;top:-149.33px;width:1168px;height:709px"><div class="t" style="left:572.30px;top:150.89px;line-height:11px;font-size:7.35px;color:#1e2a38;font-weight:400;">10.01.2018</div></div></div><div style="left:620.20px;top:149.33px;width:67.50px;height:12.53px;overflow:hidden;"><div style="left:-620.20px;top:-149.33px;width:1168px;height:709px"><div class="t" style="left:621.70px;top:150.89px;line-height:11px;font-size:7.35px;color:#1e2a38;font-weight:400;">Plocek Rudolf</div></div></div><div style="left:291.50px;top:161.85px;width:13.00px;height:12.53px;background:#d6e5f9"></div><div style="left:291.00px;top:161.85px;width:13.50px;height:12.53px;overflow:hidden;"><div style="left:-291.00px;top:-161.85px;width:1168px;height:709px"><div class="t" style="left:292.50px;top:163.41px;line-height:11px;font-size:7.35px;color:#1e2a38;font-weight:400;">VZ-</div></div></div><div style="left:291.50px;top:174.38px;width:13.00px;height:12.53px;background:#c6daf5"></div><div style="left:291.00px;top:174.38px;width:13.50px;height:12.53px;overflow:hidden;"><div style="left:-291.00px;top:-174.38px;width:1168px;height:709px"><div class="t" style="left:292.50px;top:175.94px;line-height:11px;font-size:7.35px;color:#1e2a38;font-weight:400;">VZ-</div></div></div><div style="left:291.50px;top:186.90px;width:13.00px;height:12.53px;background:#d6e5f9"></div><div style="left:291.00px;top:186.90px;width:13.50px;height:12.53px;overflow:hidden;"><div style="left:-291.00px;top:-186.90px;width:1168px;height:709px"><div class="t" style="left:292.50px;top:188.46px;line-height:11px;font-size:7.35px;color:#1e2a38;font-weight:400;">VZ-</div></div></div><div style="left:291.50px;top:199.43px;width:13.00px;height:12.53px;background:#c6daf5"></div><div style="left:291.00px;top:199.43px;width:13.50px;height:12.53px;overflow:hidden;"><div style="left:-291.00px;top:-199.43px;width:1168px;height:709px"><div class="t" style="left:292.50px;top:200.99px;line-height:11px;font-size:7.35px;color:#1e2a38;font-weight:400;">VZ-</div></div></div><div style="left:291.50px;top:211.95px;width:13.00px;height:12.53px;background:#d6e5f9"></div><div style="left:291.00px;top:211.95px;width:13.50px;height:12.53px;overflow:hidden;"><div style="left:-291.00px;top:-211.95px;width:1168px;height:709px"><div class="t" style="left:292.50px;top:213.51px;line-height:11px;font-size:7.35px;color:#1e2a38;font-weight:400;">VZ-</div></div></div><div style="left:291.50px;top:224.48px;width:13.00px;height:12.53px;background:#c6daf5"></div><div style="left:291.00px;top:224.48px;width:13.50px;height:12.53px;overflow:hidden;"><div style="left:-291.00px;top:-224.48px;width:1168px;height:709px"><div class="t" style="left:292.50px;top:226.04px;line-height:11px;font-size:7.35px;color:#1e2a38;font-weight:400;">VZ-</div></div></div><div style="left:291.50px;top:237.00px;width:13.00px;height:12.53px;background:#d6e5f9"></div><div style="left:291.00px;top:237.00px;width:13.50px;height:12.53px;overflow:hidden;"><div style="left:-291.00px;top:-237.00px;width:1168px;height:709px"><div class="t" style="left:292.50px;top:238.56px;line-height:11px;font-size:7.35px;color:#1e2a38;font-weight:400;">VZ-</div></div></div><div style="left:291.50px;top:249.53px;width:13.00px;height:12.52px;background:#c6daf5"></div><div style="left:291.00px;top:249.53px;width:13.50px;height:12.52px;overflow:hidden;"><div style="left:-291.00px;top:-249.53px;width:1168px;height:709px"><div class="t" style="left:292.50px;top:251.09px;line-height:11px;font-size:7.35px;color:#1e2a38;font-weight:400;">VZ-</div></div></div><div style="left:291.50px;top:262.05px;width:13.00px;height:12.52px;background:#d6e5f9"></div><div style="left:291.00px;top:262.05px;width:13.50px;height:12.52px;overflow:hidden;"><div style="left:-291.00px;top:-262.05px;width:1168px;height:709px"><div class="t" style="left:292.50px;top:263.61px;line-height:11px;font-size:7.35px;color:#1e2a38;font-weight:400;">VZ-</div></div></div><div style="left:291.50px;top:274.58px;width:13.00px;height:12.52px;background:#c6daf5"></div><div style="left:291.00px;top:274.58px;width:13.50px;height:12.52px;overflow:hidden;"><div style="left:-291.00px;top:-274.58px;width:1168px;height:709px"><div class="t" style="left:292.50px;top:276.14px;line-height:11px;font-size:7.35px;color:#1e2a38;font-weight:400;">VZ-</div></div></div><div style="left:291.50px;top:287.10px;width:13.00px;height:12.52px;background:#d6e5f9"></div><div style="left:291.00px;top:287.10px;width:13.50px;height:12.52px;overflow:hidden;"><div style="left:-291.00px;top:-287.10px;width:1168px;height:709px"><div class="t" style="left:292.50px;top:288.66px;line-height:11px;font-size:7.35px;color:#1e2a38;font-weight:400;">VZ-</div></div></div><div style="left:291.50px;top:299.62px;width:13.00px;height:12.52px;background:#c6daf5"></div><div style="left:291.00px;top:299.62px;width:13.50px;height:12.52px;overflow:hidden;"><div style="left:-291.00px;top:-299.62px;width:1168px;height:709px"><div class="t" style="left:292.50px;top:301.19px;line-height:11px;font-size:7.35px;color:#1e2a38;font-weight:400;">VZ-</div></div></div><div style="left:291.50px;top:312.15px;width:13.00px;height:12.52px;background:#d6e5f9"></div><div style="left:291.00px;top:312.15px;width:13.50px;height:12.52px;overflow:hidden;"><div style="left:-291.00px;top:-312.15px;width:1168px;height:709px"><div class="t" style="left:292.50px;top:313.71px;line-height:11px;font-size:7.35px;color:#1e2a38;font-weight:400;">VZ-</div></div></div><div style="left:291.50px;top:324.68px;width:13.00px;height:12.52px;background:#c6daf5"></div><div style="left:291.00px;top:324.68px;width:13.50px;height:12.52px;overflow:hidden;"><div style="left:-291.00px;top:-324.68px;width:1168px;height:709px"><div class="t" style="left:292.50px;top:326.24px;line-height:11px;font-size:7.35px;color:#1e2a38;font-weight:400;">VZ-</div></div></div><div style="left:291.50px;top:337.20px;width:13.00px;height:12.52px;background:#d6e5f9"></div><div style="left:291.00px;top:337.20px;width:13.50px;height:12.52px;overflow:hidden;"><div style="left:-291.00px;top:-337.20px;width:1168px;height:709px"><div class="t" style="left:292.50px;top:338.76px;line-height:11px;font-size:7.35px;color:#1e2a38;font-weight:400;">VZ-</div></div></div><div style="left:291.50px;top:349.73px;width:13.00px;height:12.52px;background:#c6daf5"></div><div style="left:291.00px;top:349.73px;width:13.50px;height:12.52px;overflow:hidden;"><div style="left:-291.00px;top:-349.73px;width:1168px;height:709px"><div class="t" style="left:292.50px;top:351.29px;line-height:11px;font-size:7.35px;color:#1e2a38;font-weight:400;">VZ-</div></div></div><div style="left:291.50px;top:362.25px;width:13.00px;height:12.52px;background:#d6e5f9"></div><div style="left:291.00px;top:362.25px;width:13.50px;height:12.52px;overflow:hidden;"><div style="left:-291.00px;top:-362.25px;width:1168px;height:709px"><div class="t" style="left:292.50px;top:363.81px;line-height:11px;font-size:7.35px;color:#1e2a38;font-weight:400;">VZ-</div></div></div><div style="left:291.50px;top:374.77px;width:13.00px;height:12.52px;background:#c6daf5"></div><div style="left:291.00px;top:374.77px;width:13.50px;height:12.52px;overflow:hidden;"><div style="left:-291.00px;top:-374.77px;width:1168px;height:709px"><div class="t" style="left:292.50px;top:376.34px;line-height:11px;font-size:7.35px;color:#1e2a38;font-weight:400;">VZ-</div></div></div><div style="left:291.50px;top:387.30px;width:13.00px;height:12.52px;background:#d6e5f9"></div><div style="left:291.00px;top:387.30px;width:13.50px;height:12.52px;overflow:hidden;"><div style="left:-291.00px;top:-387.30px;width:1168px;height:709px"><div class="t" style="left:292.50px;top:388.86px;line-height:11px;font-size:7.35px;color:#1e2a38;font-weight:400;">VZ-</div></div></div><div style="left:291.50px;top:399.83px;width:13.00px;height:12.52px;background:#c6daf5"></div><div style="left:291.00px;top:399.83px;width:13.50px;height:12.52px;overflow:hidden;"><div style="left:-291.00px;top:-399.83px;width:1168px;height:709px"><div class="t" style="left:292.50px;top:401.39px;line-height:11px;font-size:7.35px;color:#1e2a38;font-weight:400;">VZ-</div></div></div><div style="left:291.50px;top:412.35px;width:13.00px;height:12.52px;background:#d6e5f9"></div><div style="left:291.00px;top:412.35px;width:13.50px;height:12.52px;overflow:hidden;"><div style="left:-291.00px;top:-412.35px;width:1168px;height:709px"><div class="t" style="left:292.50px;top:413.91px;line-height:11px;font-size:7.35px;color:#1e2a38;font-weight:400;">VZ-</div></div></div><div style="left:291.50px;top:424.88px;width:13.00px;height:12.52px;background:#c6daf5"></div><div style="left:291.00px;top:424.88px;width:13.50px;height:12.52px;overflow:hidden;"><div style="left:-291.00px;top:-424.88px;width:1168px;height:709px"><div class="t" style="left:292.50px;top:426.44px;line-height:11px;font-size:7.35px;color:#1e2a38;font-weight:400;">VZ-</div></div></div><div style="left:690.50px;top:111.20px;width:12.70px;height:12.80px;background:#fff"></div><svg style="position:absolute;left:693.00px;top:114.60px;" width="8" height="6" viewBox="0 0 8 6"><path d="M1 4.5 L4 1.5 L7 4.5" stroke="#1e2a3a" stroke-width="1.4" fill="none"/></svg><div style="left:690.50px;top:124.00px;width:12.70px;height:346.00px;background:#d9e6f3"></div><div style="left:721.00px;top:102.30px;width:88.80px;height:15.00px;background:#4f86b8"></div><div class="t" style="left:465.40px;width:600px;text-align:center;top:105.30px;line-height:11px;font-size:7.35px;color:#eef3f9;font-weight:400;-webkit-text-stroke:0;">Zobrazenie dokladu</div><div style="left:721.00px;top:121.75px;width:88.80px;height:15.00px;background:#4f86b8"></div><div class="t" style="left:465.40px;width:600px;text-align:center;top:124.75px;line-height:11px;font-size:7.35px;color:#eef3f9;font-weight:400;-webkit-text-stroke:0;">Nový doklad</div><div style="left:721.00px;top:141.20px;width:88.80px;height:15.00px;background:#4f86b8"></div><div class="t" style="left:465.40px;width:600px;text-align:center;top:144.20px;line-height:11px;font-size:7.35px;color:#eef3f9;font-weight:400;-webkit-text-stroke:0;">Položky dokladu</div><div style="left:721.00px;top:160.65px;width:88.80px;height:15.00px;background:#4f86b8"></div><div class="t" style="left:465.40px;width:600px;text-align:center;top:163.65px;line-height:11px;font-size:7.35px;color:#eef3f9;font-weight:400;-webkit-text-stroke:0;">Rozpad</div><div style="left:304.70px;top:165.00px;width:546.70px;height:305.00px;background:#fff;border:1px solid #d6d6d6"></div><div style="left:304.70px;top:165.00px;width:546.70px;height:19.20px;background:#ebebeb;border-bottom:1px solid #dbe6f2"></div><svg style="position:absolute;left:309.20px;top:167.80px;" width="11" height="13" viewBox="0 0 11 13"><polygon points="0.8,1 9.8,6.5 0.8,12" fill="#ffffff" stroke="#dcdcdc" stroke-width=".7"/><path d="M2.5 9.8 L7.5 7.2" stroke="#9c9c9c" stroke-width="1"/><path d="M1.5 3.5 L2.8 2" stroke="#b0b0b0" stroke-width=".8"/></svg><div class="t" style="left:322.50px;top:168.70px;line-height:12px;font-size:8.3px;color:#554c40;font-weight:700;-webkit-text-stroke:0;">Položky výrobnej zákazky</div><div class="t" style="left:492.90px;width:300px;text-align:right;top:168.60px;line-height:12px;font-size:8.3px;color:#6a6254;font-weight:700;-webkit-text-stroke:0;">4</div><div style="left:800.90px;top:174.50px;width:7.00px;height:1.00px;background:#333"></div><div style="left:817.90px;top:171.40px;width:7.60px;height:7.50px;border:1.2px solid #222"></div><svg style="position:absolute;left:835.20px;top:171.00px;" width="8" height="8" viewBox="0 0 8 8"><path d="M0.8 0.8 L7.2 7.2 M7.2 0.8 L0.8 7.2" stroke="#111" stroke-width="1.6"/></svg><div style="left:312.60px;top:203.40px;width:438.80px;height:271.60px;background:#f7fbff;border:1px solid #d3e2f5"></div><div style="left:312.60px;top:190.00px;width:35.90px;height:14.40px;background:#fff;border:1px solid #cadcf3;border-bottom:none;border-radius:2px 2px 0 0"></div><div style="left:348.50px;top:203.40px;width:402.90px;height:1.00px;background:#cadcf3"></div><div class="t" style="left:317.00px;top:191.30px;line-height:11px;font-size:7.35px;color:#3a3a3a;font-weight:400;">Zoznam</div><div class="t" style="left:352.10px;top:192.20px;line-height:11px;font-size:7.35px;color:#1e2a38;font-weight:400;">Detail</div><div style="left:321.50px;top:213.60px;width:421.00px;height:261.40px;background:#fbfdff;border:1px solid #dde8f4"></div><div style="left:321.50px;top:213.60px;width:402.70px;height:24.30px;background:linear-gradient(#ffffff,#eef4fb);border:1px solid #dde8f4"></div><div style="left:420.20px;top:213.60px;width:1.00px;height:24.30px;background:#dde8f4"></div><div style="left:461.10px;top:213.60px;width:1.00px;height:24.30px;background:#dde8f4"></div><div style="left:482.90px;top:213.60px;width:1.00px;height:24.30px;background:#dde8f4"></div><div style="left:511.20px;top:213.60px;width:1.00px;height:24.30px;background:#dde8f4"></div><div style="left:563.50px;top:213.60px;width:1.00px;height:24.30px;background:#dde8f4"></div><div style="left:600.80px;top:213.60px;width:1.00px;height:24.30px;background:#dde8f4"></div><div style="left:652.60px;top:213.60px;width:1.00px;height:24.30px;background:#dde8f4"></div><div class="t" style="left:323.90px;top:215.20px;line-height:10px;font-size:7.35px;color:#1e2a38;font-weight:400;">Názov výrobku</div><div class="t" style="left:422.90px;top:215.20px;line-height:10px;font-size:7.35px;color:#1e2a38;font-weight:400;">Má sa</div><div class="t" style="left:422.90px;top:224.50px;line-height:10px;font-size:7.35px;color:#1e2a38;font-weight:400;">vyrobiť</div><div class="t" style="left:463.60px;top:215.20px;line-height:10px;font-size:7.35px;color:#1e2a38;font-weight:400;">MJ</div><div class="t" style="left:485.50px;top:215.20px;line-height:10px;font-size:7.35px;color:#1e2a38;font-weight:400;">Číslo</div><div class="t" style="left:485.50px;top:224.50px;line-height:10px;font-size:7.35px;color:#1e2a38;font-weight:400;">skladu</div><div class="t" style="left:514.00px;top:215.20px;line-height:10px;font-size:7.35px;color:#1e2a38;font-weight:400;">Dátum</div><div class="t" style="left:514.00px;top:224.50px;line-height:10px;font-size:7.35px;color:#1e2a38;font-weight:400;">dodania pol...</div><div class="t" style="left:566.40px;top:215.20px;line-height:10px;font-size:7.35px;color:#1e2a38;font-weight:400;">Zostáva</div><div class="t" style="left:566.40px;top:224.50px;line-height:10px;font-size:7.35px;color:#1e2a38;font-weight:400;">vyrobiť</div><div class="t" style="left:603.60px;top:215.20px;line-height:10px;font-size:7.35px;color:#1e2a38;font-weight:400;">Kalkulačná</div><div class="t" style="left:603.60px;top:224.50px;line-height:10px;font-size:7.35px;color:#1e2a38;font-weight:400;">cena skladová</div><div class="t" style="left:656.00px;top:215.20px;line-height:10px;font-size:7.35px;color:#1e2a38;font-weight:400;">Stav dokumentácie</div><div class="t" style="left:725.60px;top:215.20px;line-height:10px;font-size:7.35px;color:#1e2a38;font-weight:400;">N</div><div class="t" style="left:725.60px;top:224.50px;line-height:10px;font-size:7.35px;color:#1e2a38;font-weight:400;">i.</div><div style="left:730.30px;top:213.60px;width:12.20px;height:11.40px;background:#fff"></div><svg style="position:absolute;left:732.50px;top:214.80px;" width="8" height="6" viewBox="0 0 8 6"><path d="M1 4.5 L4 1.5 L7 4.5" stroke="#1e2a3a" stroke-width="1.4" fill="none"/></svg><div style="left:730.30px;top:225.00px;width:12.20px;height:245.00px;background:#d9e6f3"></div><div style="left:723.70px;top:213.60px;width:1.00px;height:24.30px;background:#dde8f4"></div><div style="left:322.00px;top:237.90px;width:408.30px;height:12.55px;background:#0e4b70"></div><div style="left:723.70px;top:237.90px;width:1.00px;height:12.55px;background:#5d8bb0"></div><div style="left:420.20px;top:237.90px;width:1.00px;height:12.55px;background:#5d8bb0"></div><div style="left:461.10px;top:237.90px;width:1.00px;height:12.55px;background:#5d8bb0"></div><div style="left:482.90px;top:237.90px;width:1.00px;height:12.55px;background:#5d8bb0"></div><div style="left:511.20px;top:237.90px;width:1.00px;height:12.55px;background:#5d8bb0"></div><div style="left:563.50px;top:237.90px;width:1.00px;height:12.55px;background:#5d8bb0"></div><div style="left:600.80px;top:237.90px;width:1.00px;height:12.55px;background:#5d8bb0"></div><div style="left:652.60px;top:237.90px;width:1.00px;height:12.55px;background:#5d8bb0"></div><div style="left:321.50px;top:237.90px;width:98.70px;height:12.55px;overflow:hidden;"><div style="left:-321.50px;top:-237.90px;width:1168px;height:709px"><div class="t" style="left:323.00px;top:239.47px;line-height:11px;font-size:7.35px;color:#fff;font-weight:400;-webkit-text-stroke:0;">Horské kolo XC Basic 15"</div></div></div><div style="left:420.70px;top:237.90px;width:40.40px;height:12.55px;overflow:hidden;"><div style="left:-420.70px;top:-237.90px;width:1168px;height:709px"><div class="t" style="left:160.10px;width:300px;text-align:right;top:239.47px;line-height:11px;font-size:7.35px;color:#fff;font-weight:400;-webkit-text-stroke:0;">500,00</div></div></div><div style="left:461.60px;top:237.90px;width:21.30px;height:12.55px;overflow:hidden;"><div style="left:-461.60px;top:-237.90px;width:1168px;height:709px"><div class="t" style="left:463.10px;top:239.47px;line-height:11px;font-size:7.35px;color:#fff;font-weight:400;-webkit-text-stroke:0;">ks</div></div></div><div style="left:483.40px;top:237.90px;width:27.80px;height:12.55px;overflow:hidden;"><div style="left:-483.40px;top:-237.90px;width:1168px;height:709px"><div class="t" style="left:484.90px;top:239.47px;line-height:11px;font-size:7.35px;color:#fff;font-weight:400;-webkit-text-stroke:0;">SHV1</div></div></div><div style="left:511.70px;top:237.90px;width:51.80px;height:12.55px;overflow:hidden;"><div style="left:-511.70px;top:-237.90px;width:1168px;height:709px"><div class="t" style="left:513.20px;top:239.47px;line-height:11px;font-size:7.35px;color:#fff;font-weight:400;-webkit-text-stroke:0;">28.09.2018</div></div></div><div style="left:564.00px;top:237.90px;width:36.80px;height:12.55px;overflow:hidden;"><div style="left:-564.00px;top:-237.90px;width:1168px;height:709px"><div class="t" style="left:299.80px;width:300px;text-align:right;top:239.47px;line-height:11px;font-size:7.35px;color:#fff;font-weight:400;-webkit-text-stroke:0;">500,00</div></div></div><div style="left:601.30px;top:237.90px;width:51.30px;height:12.55px;overflow:hidden;"><div style="left:-601.30px;top:-237.90px;width:1168px;height:709px"><div class="t" style="left:351.60px;width:300px;text-align:right;top:239.47px;line-height:11px;font-size:7.35px;color:#fff;font-weight:400;-webkit-text-stroke:0;">6 880,79</div></div></div><div style="left:653.10px;top:237.90px;width:70.60px;height:12.55px;overflow:hidden;"><div style="left:-653.10px;top:-237.90px;width:1168px;height:709px"><div class="t" style="left:654.60px;top:239.47px;line-height:11px;font-size:7.35px;color:#fff;font-weight:400;-webkit-text-stroke:0;">Jsou vytvořeny VP</div></div></div><div style="left:322.00px;top:250.45px;width:98.70px;height:12.55px;background:#b8f27a"></div><div style="left:420.70px;top:250.45px;width:40.90px;height:12.55px;background:#ffffff"></div><div style="left:461.60px;top:250.45px;width:21.80px;height:12.55px;background:#cfe0f7"></div><div style="left:321.50px;top:250.45px;width:98.70px;height:12.55px;overflow:hidden;"><div style="left:-321.50px;top:-250.45px;width:1168px;height:709px"><div class="t" style="left:323.00px;top:252.03px;line-height:11px;font-size:7.35px;color:#1e2a38;font-weight:400;">Horské kolo XC Basic 17"</div></div></div><div style="left:420.70px;top:250.45px;width:40.40px;height:12.55px;overflow:hidden;"><div style="left:-420.70px;top:-250.45px;width:1168px;height:709px"><div class="t" style="left:160.10px;width:300px;text-align:right;top:252.03px;line-height:11px;font-size:7.35px;color:#1e2a38;font-weight:400;">20,00</div></div></div><div style="left:461.60px;top:250.45px;width:21.30px;height:12.55px;overflow:hidden;"><div style="left:-461.60px;top:-250.45px;width:1168px;height:709px"><div class="t" style="left:463.10px;top:252.03px;line-height:11px;font-size:7.35px;color:#1e2a38;font-weight:400;">ks</div></div></div><div style="left:322.00px;top:263.00px;width:98.70px;height:12.55px;background:#d8fbb6"></div><div style="left:420.70px;top:263.00px;width:40.90px;height:12.55px;background:#ffffff"></div><div style="left:461.60px;top:263.00px;width:21.80px;height:12.55px;background:#e2ecfb"></div><div style="left:321.50px;top:263.00px;width:98.70px;height:12.55px;overflow:hidden;"><div style="left:-321.50px;top:-263.00px;width:1168px;height:709px"><div class="t" style="left:323.00px;top:264.57px;line-height:11px;font-size:7.35px;color:#1e2a38;font-weight:400;">Horské kolo XC Basic 19"</div></div></div><div style="left:420.70px;top:263.00px;width:40.40px;height:12.55px;overflow:hidden;"><div style="left:-420.70px;top:-263.00px;width:1168px;height:709px"><div class="t" style="left:160.10px;width:300px;text-align:right;top:264.57px;line-height:11px;font-size:7.35px;color:#1e2a38;font-weight:400;">5,00</div></div></div><div style="left:461.60px;top:263.00px;width:21.30px;height:12.55px;overflow:hidden;"><div style="left:-461.60px;top:-263.00px;width:1168px;height:709px"><div class="t" style="left:463.10px;top:264.57px;line-height:11px;font-size:7.35px;color:#1e2a38;font-weight:400;">ks</div></div></div><div style="left:322.00px;top:275.55px;width:98.70px;height:12.55px;background:#b8f27a"></div><div style="left:420.70px;top:275.55px;width:40.90px;height:12.55px;background:#ffffff"></div><div style="left:461.60px;top:275.55px;width:21.80px;height:12.55px;background:#cfe0f7"></div><div style="left:321.50px;top:275.55px;width:98.70px;height:12.55px;overflow:hidden;"><div style="left:-321.50px;top:-275.55px;width:1168px;height:709px"><div class="t" style="left:323.00px;top:277.12px;line-height:11px;font-size:7.35px;color:#1e2a38;font-weight:400;">Horské kolo XC Basic 21"</div></div></div><div style="left:420.70px;top:275.55px;width:40.40px;height:12.55px;overflow:hidden;"><div style="left:-420.70px;top:-275.55px;width:1168px;height:709px"><div class="t" style="left:160.10px;width:300px;text-align:right;top:277.12px;line-height:11px;font-size:7.35px;color:#1e2a38;font-weight:400;">24,00</div></div></div><div style="left:461.60px;top:275.55px;width:21.30px;height:12.55px;overflow:hidden;"><div style="left:-461.60px;top:-275.55px;width:1168px;height:709px"><div class="t" style="left:463.10px;top:277.12px;line-height:11px;font-size:7.35px;color:#1e2a38;font-weight:400;">ks</div></div></div><div style="left:754.00px;top:203.90px;width:89.30px;height:15.00px;background:#4f86b8"></div><div class="t" style="left:498.65px;width:600px;text-align:center;top:206.90px;line-height:11px;font-size:7.35px;color:#eef3f9;font-weight:400;-webkit-text-stroke:0;">Objednávky</div><svg style="position:absolute;left:835.70px;top:207.90px;" width="5" height="7" viewBox="0 0 5 7"><polygon points="0.5,0.5 4.5,3.5 0.5,6.5" fill="#f2f6fa"/></svg><div style="left:754.00px;top:223.30px;width:89.30px;height:15.00px;background:#4f86b8"></div><div class="t" style="left:498.65px;width:600px;text-align:center;top:226.30px;line-height:11px;font-size:7.35px;color:#eef3f9;font-weight:400;-webkit-text-stroke:0;">Žiadanky</div><svg style="position:absolute;left:835.70px;top:227.30px;" width="5" height="7" viewBox="0 0 5 7"><polygon points="0.5,0.5 4.5,3.5 0.5,6.5" fill="#f2f6fa"/></svg><div style="left:754.00px;top:242.70px;width:89.30px;height:15.00px;background:#4f86b8"></div><div class="t" style="left:498.65px;width:600px;text-align:center;top:245.70px;line-height:11px;font-size:7.35px;color:#eef3f9;font-weight:400;-webkit-text-stroke:0;">Rozpad položky</div><div style="left:275.30px;top:445.40px;width:222.90px;height:256.80px;background:#fff;border:1px solid #d6d6d6"></div><div style="left:275.30px;top:445.40px;width:222.90px;height:19.20px;background:#ebebeb;border-bottom:1px solid #dbe6f2"></div><svg style="position:absolute;left:279.80px;top:448.20px;" width="11" height="13" viewBox="0 0 11 13"><polygon points="0.8,1 9.8,6.5 0.8,12" fill="#ffffff" stroke="#dcdcdc" stroke-width=".7"/><path d="M2.5 9.8 L7.5 7.2" stroke="#9c9c9c" stroke-width="1"/><path d="M1.5 3.5 L2.8 2" stroke="#b0b0b0" stroke-width=".8"/></svg><div class="t" style="left:293.10px;top:448.80px;line-height:12px;font-size:8.3px;color:#554c40;font-weight:700;-webkit-text-stroke:0;">Obrázok</div><div class="t" style="left:139.70px;width:300px;text-align:right;top:448.70px;line-height:12px;font-size:8.3px;color:#6a6254;font-weight:700;-webkit-text-stroke:0;">1</div><div style="left:447.70px;top:454.90px;width:7.00px;height:1.00px;background:#333"></div><div style="left:464.70px;top:451.80px;width:7.60px;height:7.50px;border:1.2px solid #222"></div><svg style="position:absolute;left:482.00px;top:451.40px;" width="8" height="8" viewBox="0 0 8 8"><path d="M0.8 0.8 L7.2 7.2 M7.2 0.8 L0.8 7.2" stroke="#111" stroke-width="1.6"/></svg><div style="left:284.60px;top:470.70px;width:204.40px;height:202.30px;background:#fff;border:1px solid #d8e5f6"></div><div style="left:285.60px;top:471.70px;width:202.40px;height:200.30px;overflow:hidden;"><div style="left:-285.60px;top:-471.70px;width:1168px;height:709px"><svg style="position:absolute;left:280.00px;top:472.00px;" width="220" height="200" viewBox="0 0 220 200"><defs><linearGradient id="sg" x1="0.2" y1="0" x2="0.7" y2="1"><stop offset="0" stop-color="#7c7668"/><stop offset="0.45" stop-color="#a19d91"/><stop offset="1" stop-color="#d0cfc9"/></linearGradient><linearGradient id="sg2" x1="0.2" y1="0" x2="0.7" y2="1"><stop offset="0" stop-color="#726c60"/><stop offset="0.5" stop-color="#9a968a"/><stop offset="1" stop-color="#c8c7c0"/></linearGradient></defs><polygon points="195.5,87.5 192.2,89.1 190.7,90.6 189.6,92.1 188.8,93.6 188.3,95.1 188.0,96.6 187.9,98.1 188.1,99.7 188.6,101.3 189.3,103.0 190.4,104.8 193.3,107.1 189.7,107.9 187.9,109.0 186.5,110.3 185.4,111.5 184.6,112.9 184.0,114.3 183.6,115.7 183.4,117.3 183.5,119.0 183.8,120.8 184.5,122.8 186.8,125.7 183.1,125.7 181.1,126.4 179.5,127.3 178.1,128.3 177.0,129.4 176.1,130.6 175.4,131.9 174.9,133.4 174.6,135.1 174.5,136.9 174.7,139.0 176.3,142.4 172.7,141.5 170.6,141.8 168.8,142.3 167.3,143.0 165.9,143.8 164.8,144.8 163.8,145.9 163.0,147.3 162.3,148.8 161.8,150.6 161.5,152.7 162.4,156.3 159.0,154.7 156.9,154.5 155.1,154.6 153.4,154.9 151.9,155.4 150.6,156.1 149.4,157.0 148.3,158.1 147.3,159.5 146.4,161.1 145.7,163.1 145.7,166.8 142.8,164.5 140.8,163.8 139.0,163.5 137.3,163.4 135.7,163.6 134.3,164.0 132.9,164.6 131.5,165.4 130.3,166.5 129.0,167.9 127.9,169.7 127.1,173.3 124.8,170.4 123.0,169.3 121.3,168.6 119.7,168.1 118.1,167.9 116.6,168.0 115.1,168.3 113.6,168.8 112.1,169.6 110.6,170.7 109.1,172.2 107.5,175.5 105.9,172.2 104.4,170.7 102.9,169.6 101.4,168.8 99.9,168.3 98.4,168.0 96.9,167.9 95.3,168.1 93.7,168.6 92.0,169.3 90.2,170.4 87.9,173.3 87.1,169.7 86.0,167.9 84.7,166.5 83.5,165.4 82.1,164.6 80.7,164.0 79.3,163.6 77.7,163.4 76.0,163.5 74.2,163.8 72.2,164.5 69.3,166.8 69.3,163.1 68.6,161.1 67.7,159.5 66.7,158.1 65.6,157.0 64.4,156.1 63.1,155.4 61.6,154.9 59.9,154.6 58.1,154.5 56.0,154.7 52.6,156.3 53.5,152.7 53.2,150.6 52.7,148.8 52.0,147.3 51.2,145.9 50.2,144.8 49.1,143.8 47.7,143.0 46.2,142.3 44.4,141.8 42.3,141.5 38.7,142.4 40.3,139.0 40.5,136.9 40.4,135.1 40.1,133.4 39.6,131.9 38.9,130.6 38.0,129.4 36.9,128.3 35.5,127.3 33.9,126.4 31.9,125.7 28.2,125.7 30.5,122.8 31.2,120.8 31.5,119.0 31.6,117.3 31.4,115.7 31.0,114.3 30.4,112.9 29.6,111.5 28.5,110.3 27.1,109.0 25.3,107.9 21.7,107.1 24.6,104.8 25.7,103.0 26.4,101.3 26.9,99.7 27.1,98.1 27.0,96.6 26.7,95.1 26.2,93.6 25.4,92.1 24.3,90.6 22.8,89.1 19.5,87.5 22.8,85.9 24.3,84.4 25.4,82.9 26.2,81.4 26.7,79.9 27.0,78.4 27.1,76.9 26.9,75.3 26.4,73.7 25.7,72.0 24.6,70.2 21.7,67.9 25.3,67.1 27.1,66.0 28.5,64.7 29.6,63.5 30.4,62.1 31.0,60.7 31.4,59.3 31.6,57.7 31.5,56.0 31.2,54.2 30.5,52.2 28.2,49.3 31.9,49.3 33.9,48.6 35.5,47.7 36.9,46.7 38.0,45.6 38.9,44.4 39.6,43.1 40.1,41.6 40.4,39.9 40.5,38.1 40.3,36.0 38.7,32.6 42.3,33.5 44.4,33.2 46.2,32.7 47.7,32.0 49.1,31.2 50.2,30.2 51.2,29.1 52.0,27.7 52.7,26.2 53.2,24.4 53.5,22.3 52.6,18.7 56.0,20.3 58.1,20.5 59.9,20.4 61.6,20.1 63.1,19.6 64.4,18.9 65.6,18.0 66.7,16.9 67.7,15.5 68.6,13.9 69.3,11.9 69.3,8.2 72.2,10.5 74.2,11.2 76.0,11.5 77.7,11.6 79.3,11.4 80.7,11.0 82.1,10.4 83.5,9.6 84.7,8.5 86.0,7.1 87.1,5.3 87.9,1.7 90.2,4.6 92.0,5.7 93.7,6.4 95.3,6.9 96.9,7.1 98.4,7.0 99.9,6.7 101.4,6.2 102.9,5.4 104.4,4.3 105.9,2.8 107.5,-0.5 109.1,2.8 110.6,4.3 112.1,5.4 113.6,6.2 115.1,6.7 116.6,7.0 118.1,7.1 119.7,6.9 121.3,6.4 123.0,5.7 124.8,4.6 127.1,1.7 127.9,5.3 129.0,7.1 130.3,8.5 131.5,9.6 132.9,10.4 134.3,11.0 135.7,11.4 137.3,11.6 139.0,11.5 140.8,11.2 142.8,10.5 145.7,8.2 145.7,11.9 146.4,13.9 147.3,15.5 148.3,16.9 149.4,18.0 150.6,18.9 151.9,19.6 153.4,20.1 155.1,20.4 156.9,20.5 159.0,20.3 162.4,18.7 161.5,22.3 161.8,24.4 162.3,26.2 163.0,27.7 163.8,29.1 164.8,30.2 165.9,31.2 167.3,32.0 168.8,32.7 170.6,33.2 172.7,33.5 176.3,32.6 174.7,36.0 174.5,38.1 174.6,39.9 174.9,41.6 175.4,43.1 176.1,44.4 177.0,45.6 178.1,46.7 179.5,47.7 181.1,48.6 183.1,49.3 186.8,49.3 184.5,52.2 183.8,54.2 183.5,56.0 183.4,57.7 183.6,59.3 184.0,60.7 184.6,62.1 185.4,63.5 186.5,64.7 187.9,66.0 189.7,67.1 193.3,67.9 190.4,70.2 189.3,72.0 188.6,73.7 188.1,75.3 187.9,76.9 188.0,78.4 188.3,79.9 188.8,81.4 189.6,82.9 190.7,84.4 192.2,85.9" fill="url(#sg)" stroke="#34312b" stroke-width="1.0"/><polygon points="195.5,87.5 192.2,89.1 190.7,90.6 189.6,92.1 188.8,93.6 188.3,95.1 188.0,96.6 187.9,98.1 188.1,99.7 188.6,101.3 189.3,103.0 190.4,104.8 193.3,107.1 189.7,107.9 187.9,109.0 186.5,110.3 185.4,111.5 184.6,112.9 184.0,114.3 183.6,115.7 183.4,117.3 183.5,119.0 183.8,120.8 184.5,122.8 186.8,125.7 183.1,125.7 181.1,126.4 179.5,127.3 178.1,128.3 177.0,129.4 176.1,130.6 175.4,131.9 174.9,133.4 174.6,135.1 174.5,136.9 174.7,139.0 176.3,142.4 172.7,141.5 170.6,141.8 168.8,142.3 167.3,143.0 165.9,143.8 164.8,144.8 163.8,145.9 163.0,147.3 162.3,148.8 161.8,150.6 161.5,152.7 162.4,156.3 159.0,154.7 156.9,154.5 155.1,154.6 153.4,154.9 151.9,155.4 150.6,156.1 149.4,157.0 148.3,158.1 147.3,159.5 146.4,161.1 145.7,163.1 145.7,166.8 142.8,164.5 140.8,163.8 139.0,163.5 137.3,163.4 135.7,163.6 134.3,164.0 132.9,164.6 131.5,165.4 130.3,166.5 129.0,167.9 127.9,169.7 127.1,173.3 124.8,170.4 123.0,169.3 121.3,168.6 119.7,168.1 118.1,167.9 116.6,168.0 115.1,168.3 113.6,168.8 112.1,169.6 110.6,170.7 109.1,172.2 107.5,175.5 105.9,172.2 104.4,170.7 102.9,169.6 101.4,168.8 99.9,168.3 98.4,168.0 96.9,167.9 95.3,168.1 93.7,168.6 92.0,169.3 90.2,170.4 87.9,173.3 87.1,169.7 86.0,167.9 84.7,166.5 83.5,165.4 82.1,164.6 80.7,164.0 79.3,163.6 77.7,163.4 76.0,163.5 74.2,163.8 72.2,164.5 69.3,166.8 69.3,163.1 68.6,161.1 67.7,159.5 66.7,158.1 65.6,157.0 64.4,156.1 63.1,155.4 61.6,154.9 59.9,154.6 58.1,154.5 56.0,154.7 52.6,156.3 53.5,152.7 53.2,150.6 52.7,148.8 52.0,147.3 51.2,145.9 50.2,144.8 49.1,143.8 47.7,143.0 46.2,142.3 44.4,141.8 42.3,141.5 38.7,142.4 40.3,139.0 40.5,136.9 40.4,135.1 40.1,133.4 39.6,131.9 38.9,130.6 38.0,129.4 36.9,128.3 35.5,127.3 33.9,126.4 31.9,125.7 28.2,125.7 30.5,122.8 31.2,120.8 31.5,119.0 31.6,117.3 31.4,115.7 31.0,114.3 30.4,112.9 29.6,111.5 28.5,110.3 27.1,109.0 25.3,107.9 21.7,107.1 24.6,104.8 25.7,103.0 26.4,101.3 26.9,99.7 27.1,98.1 27.0,96.6 26.7,95.1 26.2,93.6 25.4,92.1 24.3,90.6 22.8,89.1 19.5,87.5 22.8,85.9 24.3,84.4 25.4,82.9 26.2,81.4 26.7,79.9 27.0,78.4 27.1,76.9 26.9,75.3 26.4,73.7 25.7,72.0 24.6,70.2 21.7,67.9 25.3,67.1 27.1,66.0 28.5,64.7 29.6,63.5 30.4,62.1 31.0,60.7 31.4,59.3 31.6,57.7 31.5,56.0 31.2,54.2 30.5,52.2 28.2,49.3 31.9,49.3 33.9,48.6 35.5,47.7 36.9,46.7 38.0,45.6 38.9,44.4 39.6,43.1 40.1,41.6 40.4,39.9 40.5,38.1 40.3,36.0 38.7,32.6 42.3,33.5 44.4,33.2 46.2,32.7 47.7,32.0 49.1,31.2 50.2,30.2 51.2,29.1 52.0,27.7 52.7,26.2 53.2,24.4 53.5,22.3 52.6,18.7 56.0,20.3 58.1,20.5 59.9,20.4 61.6,20.1 63.1,19.6 64.4,18.9 65.6,18.0 66.7,16.9 67.7,15.5 68.6,13.9 69.3,11.9 69.3,8.2 72.2,10.5 74.2,11.2 76.0,11.5 77.7,11.6 79.3,11.4 80.7,11.0 82.1,10.4 83.5,9.6 84.7,8.5 86.0,7.1 87.1,5.3 87.9,1.7 90.2,4.6 92.0,5.7 93.7,6.4 95.3,6.9 96.9,7.1 98.4,7.0 99.9,6.7 101.4,6.2 102.9,5.4 104.4,4.3 105.9,2.8 107.5,-0.5 109.1,2.8 110.6,4.3 112.1,5.4 113.6,6.2 115.1,6.7 116.6,7.0 118.1,7.1 119.7,6.9 121.3,6.4 123.0,5.7 124.8,4.6 127.1,1.7 127.9,5.3 129.0,7.1 130.3,8.5 131.5,9.6 132.9,10.4 134.3,11.0 135.7,11.4 137.3,11.6 139.0,11.5 140.8,11.2 142.8,10.5 145.7,8.2 145.7,11.9 146.4,13.9 147.3,15.5 148.3,16.9 149.4,18.0 150.6,18.9 151.9,19.6 153.4,20.1 155.1,20.4 156.9,20.5 159.0,20.3 162.4,18.7 161.5,22.3 161.8,24.4 162.3,26.2 163.0,27.7 163.8,29.1 164.8,30.2 165.9,31.2 167.3,32.0 168.8,32.7 170.6,33.2 172.7,33.5 176.3,32.6 174.7,36.0 174.5,38.1 174.6,39.9 174.9,41.6 175.4,43.1 176.1,44.4 177.0,45.6 178.1,46.7 179.5,47.7 181.1,48.6 183.1,49.3 186.8,49.3 184.5,52.2 183.8,54.2 183.5,56.0 183.4,57.7 183.6,59.3 184.0,60.7 184.6,62.1 185.4,63.5 186.5,64.7 187.9,66.0 189.7,67.1 193.3,67.9 190.4,70.2 189.3,72.0 188.6,73.7 188.1,75.3 187.9,76.9 188.0,78.4 188.3,79.9 188.8,81.4 189.6,82.9 190.7,84.4 192.2,85.9" fill="none" stroke="#f0f0ec" stroke-width="1" opacity=".4" transform="translate(1.2,1.5)"/><circle cx="194.3" cy="87.5" r="1.7" fill="#171614"/><circle cx="192.1" cy="106.8" r="1.7" fill="#171614"/><circle cx="185.7" cy="125.2" r="1.7" fill="#171614"/><circle cx="175.4" cy="141.6" r="1.7" fill="#171614"/><circle cx="161.6" cy="155.4" r="1.7" fill="#171614"/><circle cx="145.2" cy="165.7" r="1.7" fill="#171614"/><circle cx="126.8" cy="172.1" r="1.7" fill="#171614"/><circle cx="107.5" cy="174.3" r="1.7" fill="#171614"/><circle cx="88.2" cy="172.1" r="1.7" fill="#171614"/><circle cx="69.8" cy="165.7" r="1.7" fill="#171614"/><circle cx="53.4" cy="155.4" r="1.7" fill="#171614"/><circle cx="39.6" cy="141.6" r="1.7" fill="#171614"/><circle cx="29.3" cy="125.2" r="1.7" fill="#171614"/><circle cx="22.9" cy="106.8" r="1.7" fill="#171614"/><circle cx="20.7" cy="87.5" r="1.7" fill="#171614"/><circle cx="22.9" cy="68.2" r="1.7" fill="#171614"/><circle cx="29.3" cy="49.8" r="1.7" fill="#171614"/><circle cx="39.6" cy="33.4" r="1.7" fill="#171614"/><circle cx="53.4" cy="19.6" r="1.7" fill="#171614"/><circle cx="69.8" cy="9.3" r="1.7" fill="#171614"/><circle cx="88.2" cy="2.9" r="1.7" fill="#171614"/><circle cx="107.5" cy="0.7" r="1.7" fill="#171614"/><circle cx="126.8" cy="2.9" r="1.7" fill="#171614"/><circle cx="145.2" cy="9.3" r="1.7" fill="#171614"/><circle cx="161.6" cy="19.6" r="1.7" fill="#171614"/><circle cx="175.4" cy="33.4" r="1.7" fill="#171614"/><circle cx="185.7" cy="49.8" r="1.7" fill="#171614"/><circle cx="192.1" cy="68.2" r="1.7" fill="#171614"/><circle cx="183.0" cy="96.0" r="4.0" fill="none" stroke="#3e3b35" stroke-width=".8" opacity=".5"/><circle cx="179.2" cy="112.6" r="4.0" fill="none" stroke="#3e3b35" stroke-width=".8" opacity=".5"/><circle cx="171.9" cy="127.9" r="4.0" fill="none" stroke="#3e3b35" stroke-width=".8" opacity=".5"/><circle cx="161.2" cy="141.2" r="4.0" fill="none" stroke="#3e3b35" stroke-width=".8" opacity=".5"/><circle cx="147.9" cy="151.9" r="4.0" fill="none" stroke="#3e3b35" stroke-width=".8" opacity=".5"/><circle cx="132.6" cy="159.2" r="4.0" fill="none" stroke="#3e3b35" stroke-width=".8" opacity=".5"/><circle cx="116.0" cy="163.0" r="4.0" fill="none" stroke="#3e3b35" stroke-width=".8" opacity=".5"/><circle cx="99.0" cy="163.0" r="4.0" fill="none" stroke="#3e3b35" stroke-width=".8" opacity=".5"/><circle cx="82.4" cy="159.2" r="4.0" fill="none" stroke="#3e3b35" stroke-width=".8" opacity=".5"/><circle cx="67.1" cy="151.9" r="4.0" fill="none" stroke="#3e3b35" stroke-width=".8" opacity=".5"/><circle cx="53.8" cy="141.2" r="4.0" fill="none" stroke="#3e3b35" stroke-width=".8" opacity=".5"/><circle cx="43.1" cy="127.9" r="4.0" fill="none" stroke="#3e3b35" stroke-width=".8" opacity=".5"/><circle cx="35.8" cy="112.6" r="4.0" fill="none" stroke="#3e3b35" stroke-width=".8" opacity=".5"/><circle cx="32.0" cy="96.0" r="4.0" fill="none" stroke="#3e3b35" stroke-width=".8" opacity=".5"/><circle cx="32.0" cy="79.0" r="4.0" fill="none" stroke="#3e3b35" stroke-width=".8" opacity=".5"/><circle cx="35.8" cy="62.4" r="4.0" fill="none" stroke="#3e3b35" stroke-width=".8" opacity=".5"/><circle cx="43.1" cy="47.1" r="4.0" fill="none" stroke="#3e3b35" stroke-width=".8" opacity=".5"/><circle cx="53.8" cy="33.8" r="4.0" fill="none" stroke="#3e3b35" stroke-width=".8" opacity=".5"/><circle cx="67.1" cy="23.1" r="4.0" fill="none" stroke="#3e3b35" stroke-width=".8" opacity=".5"/><circle cx="82.4" cy="15.8" r="4.0" fill="none" stroke="#3e3b35" stroke-width=".8" opacity=".5"/><circle cx="99.0" cy="12.0" r="4.0" fill="none" stroke="#3e3b35" stroke-width=".8" opacity=".5"/><circle cx="116.0" cy="12.0" r="4.0" fill="none" stroke="#3e3b35" stroke-width=".8" opacity=".5"/><circle cx="132.6" cy="15.8" r="4.0" fill="none" stroke="#3e3b35" stroke-width=".8" opacity=".5"/><circle cx="147.9" cy="23.1" r="4.0" fill="none" stroke="#3e3b35" stroke-width=".8" opacity=".5"/><circle cx="161.2" cy="33.8" r="4.0" fill="none" stroke="#3e3b35" stroke-width=".8" opacity=".5"/><circle cx="171.9" cy="47.1" r="4.0" fill="none" stroke="#3e3b35" stroke-width=".8" opacity=".5"/><circle cx="179.2" cy="62.4" r="4.0" fill="none" stroke="#3e3b35" stroke-width=".8" opacity=".5"/><circle cx="183.0" cy="79.0" r="4.0" fill="none" stroke="#3e3b35" stroke-width=".8" opacity=".5"/><polygon points="187.0,94.3 184.2,95.6 182.9,97.0 181.8,98.5 181.0,99.9 180.4,101.4 179.9,102.9 179.7,104.4 179.6,106.0 179.6,107.7 179.9,109.4 180.4,111.3 182.3,113.8 179.3,114.4 177.6,115.4 176.3,116.6 175.1,117.8 174.1,119.0 173.3,120.4 172.7,121.8 172.2,123.3 171.8,124.9 171.7,126.7 171.7,128.7 172.9,131.5 169.9,131.3 168.0,131.9 166.4,132.7 165.0,133.6 163.7,134.5 162.6,135.6 161.6,136.9 160.7,138.2 160.0,139.7 159.4,141.4 159.0,143.3 159.5,146.3 156.5,145.4 154.5,145.5 152.8,145.8 151.2,146.3 149.8,147.0 148.4,147.8 147.1,148.7 146.0,149.8 144.9,151.0 143.9,152.5 143.0,154.3 142.7,157.3 140.1,155.7 138.1,155.3 136.4,155.2 134.7,155.3 133.1,155.6 131.6,156.0 130.2,156.6 128.8,157.3 127.4,158.3 126.1,159.4 124.8,160.9 123.7,163.8 121.6,161.6 119.8,160.7 118.1,160.2 116.5,159.9 114.9,159.7 113.3,159.8 111.8,160.0 110.2,160.4 108.7,160.9 107.1,161.7 105.5,162.9 103.7,165.4 102.2,162.7 100.7,161.4 99.2,160.5 97.7,159.8 96.2,159.2 94.7,158.9 93.1,158.7 91.5,158.7 89.9,158.9 88.1,159.2 86.3,159.9 84.0,162.0 83.2,159.0 82.0,157.4 80.8,156.1 79.6,155.0 78.2,154.1 76.8,153.4 75.4,152.8 73.8,152.4 72.2,152.2 70.4,152.1 68.5,152.3 65.7,153.7 65.7,150.6 65.0,148.8 64.1,147.2 63.1,145.9 62.1,144.7 60.9,143.6 59.6,142.7 58.2,142.0 56.7,141.3 55.0,140.8 53.1,140.5 50.0,141.2 50.8,138.2 50.6,136.2 50.1,134.5 49.5,132.9 48.8,131.5 47.9,130.2 46.9,129.0 45.8,127.9 44.4,126.9 42.9,126.0 41.1,125.2 38.0,125.1 39.5,122.4 39.7,120.5 39.7,118.7 39.5,117.0 39.2,115.5 38.7,114.0 38.0,112.6 37.1,111.2 36.1,109.9 34.9,108.7 33.3,107.5 30.3,106.6 32.4,104.3 33.2,102.5 33.6,100.8 33.8,99.1 33.9,97.6 33.7,96.0 33.4,94.5 33.0,92.9 32.3,91.4 31.4,89.9 30.2,88.3 27.5,86.8 30.1,85.1 31.3,83.5 32.1,81.9 32.8,80.4 33.2,78.9 33.5,77.3 33.5,75.8 33.4,74.2 33.2,72.5 32.7,70.8 31.9,69.0 29.7,66.8 32.6,65.9 34.2,64.6 35.4,63.3 36.4,62.0 37.2,60.6 37.8,59.2 38.3,57.7 38.6,56.1 38.7,54.4 38.7,52.7 38.4,50.7 36.8,48.1 39.9,47.9 41.7,47.0 43.2,46.1 44.5,45.0 45.6,43.9 46.5,42.7 47.4,41.3 48.1,39.9 48.6,38.3 49.0,36.6 49.2,34.6 48.3,31.7 51.4,32.2 53.3,31.9 55.0,31.3 56.5,30.6 57.9,29.8 59.1,28.8 60.2,27.8 61.3,26.5 62.2,25.2 63.0,23.6 63.7,21.7 63.6,18.6 66.4,19.9 68.3,20.1 70.1,20.0 71.8,19.7 73.3,19.2 74.7,18.6 76.1,17.8 77.4,16.9 78.6,15.8 79.8,14.5 80.9,12.8 81.6,9.8 84.0,11.8 85.8,12.4 87.6,12.7 89.3,12.8 90.8,12.8 92.4,12.5 93.9,12.1 95.4,11.6 96.9,10.8 98.3,9.8 99.8,8.5 101.2,5.7 103.0,8.2 104.7,9.3 106.3,10.1 107.9,10.6 109.5,10.9 111.0,11.1 112.6,11.1 114.2,10.9 115.8,10.5 117.5,9.9 119.2,9.0 121.3,6.7 122.4,9.6 123.7,11.0 125.1,12.1 126.5,13.0 127.9,13.8 129.4,14.3 130.9,14.7 132.5,14.9 134.2,14.9 135.9,14.8 137.9,14.3 140.4,12.6 140.8,15.7 141.8,17.4 142.8,18.8 143.9,20.0 145.1,21.1 146.4,22.0 147.8,22.7 149.3,23.3 150.9,23.8 152.6,24.1 154.6,24.1 157.5,23.1 157.1,26.1 157.6,28.0 158.3,29.7 159.1,31.2 160.0,32.5 161.0,33.7 162.2,34.7 163.4,35.7 164.9,36.5 166.5,37.2 168.4,37.8 171.5,37.5 170.3,40.3 170.3,42.3 170.6,44.1 171.0,45.7 171.5,47.2 172.2,48.6 173.1,49.9 174.1,51.1 175.3,52.3 176.7,53.4 178.4,54.4 181.4,54.9 179.6,57.4 179.1,59.3 178.9,61.1 178.9,62.7 179.0,64.3 179.4,65.8 179.9,67.3 180.5,68.8 181.4,70.2 182.5,71.6 183.9,73.0 186.7,74.2 184.3,76.2 183.4,77.9 182.7,79.6 182.3,81.2 182.1,82.8 182.0,84.3 182.1,85.9 182.4,87.5 182.9,89.1 183.6,90.7 184.6,92.4" fill="url(#sg2)" stroke="#34312b" stroke-width="1.0"/><polygon points="187.0,94.3 184.2,95.6 182.9,97.0 181.8,98.5 181.0,99.9 180.4,101.4 179.9,102.9 179.7,104.4 179.6,106.0 179.6,107.7 179.9,109.4 180.4,111.3 182.3,113.8 179.3,114.4 177.6,115.4 176.3,116.6 175.1,117.8 174.1,119.0 173.3,120.4 172.7,121.8 172.2,123.3 171.8,124.9 171.7,126.7 171.7,128.7 172.9,131.5 169.9,131.3 168.0,131.9 166.4,132.7 165.0,133.6 163.7,134.5 162.6,135.6 161.6,136.9 160.7,138.2 160.0,139.7 159.4,141.4 159.0,143.3 159.5,146.3 156.5,145.4 154.5,145.5 152.8,145.8 151.2,146.3 149.8,147.0 148.4,147.8 147.1,148.7 146.0,149.8 144.9,151.0 143.9,152.5 143.0,154.3 142.7,157.3 140.1,155.7 138.1,155.3 136.4,155.2 134.7,155.3 133.1,155.6 131.6,156.0 130.2,156.6 128.8,157.3 127.4,158.3 126.1,159.4 124.8,160.9 123.7,163.8 121.6,161.6 119.8,160.7 118.1,160.2 116.5,159.9 114.9,159.7 113.3,159.8 111.8,160.0 110.2,160.4 108.7,160.9 107.1,161.7 105.5,162.9 103.7,165.4 102.2,162.7 100.7,161.4 99.2,160.5 97.7,159.8 96.2,159.2 94.7,158.9 93.1,158.7 91.5,158.7 89.9,158.9 88.1,159.2 86.3,159.9 84.0,162.0 83.2,159.0 82.0,157.4 80.8,156.1 79.6,155.0 78.2,154.1 76.8,153.4 75.4,152.8 73.8,152.4 72.2,152.2 70.4,152.1 68.5,152.3 65.7,153.7 65.7,150.6 65.0,148.8 64.1,147.2 63.1,145.9 62.1,144.7 60.9,143.6 59.6,142.7 58.2,142.0 56.7,141.3 55.0,140.8 53.1,140.5 50.0,141.2 50.8,138.2 50.6,136.2 50.1,134.5 49.5,132.9 48.8,131.5 47.9,130.2 46.9,129.0 45.8,127.9 44.4,126.9 42.9,126.0 41.1,125.2 38.0,125.1 39.5,122.4 39.7,120.5 39.7,118.7 39.5,117.0 39.2,115.5 38.7,114.0 38.0,112.6 37.1,111.2 36.1,109.9 34.9,108.7 33.3,107.5 30.3,106.6 32.4,104.3 33.2,102.5 33.6,100.8 33.8,99.1 33.9,97.6 33.7,96.0 33.4,94.5 33.0,92.9 32.3,91.4 31.4,89.9 30.2,88.3 27.5,86.8 30.1,85.1 31.3,83.5 32.1,81.9 32.8,80.4 33.2,78.9 33.5,77.3 33.5,75.8 33.4,74.2 33.2,72.5 32.7,70.8 31.9,69.0 29.7,66.8 32.6,65.9 34.2,64.6 35.4,63.3 36.4,62.0 37.2,60.6 37.8,59.2 38.3,57.7 38.6,56.1 38.7,54.4 38.7,52.7 38.4,50.7 36.8,48.1 39.9,47.9 41.7,47.0 43.2,46.1 44.5,45.0 45.6,43.9 46.5,42.7 47.4,41.3 48.1,39.9 48.6,38.3 49.0,36.6 49.2,34.6 48.3,31.7 51.4,32.2 53.3,31.9 55.0,31.3 56.5,30.6 57.9,29.8 59.1,28.8 60.2,27.8 61.3,26.5 62.2,25.2 63.0,23.6 63.7,21.7 63.6,18.6 66.4,19.9 68.3,20.1 70.1,20.0 71.8,19.7 73.3,19.2 74.7,18.6 76.1,17.8 77.4,16.9 78.6,15.8 79.8,14.5 80.9,12.8 81.6,9.8 84.0,11.8 85.8,12.4 87.6,12.7 89.3,12.8 90.8,12.8 92.4,12.5 93.9,12.1 95.4,11.6 96.9,10.8 98.3,9.8 99.8,8.5 101.2,5.7 103.0,8.2 104.7,9.3 106.3,10.1 107.9,10.6 109.5,10.9 111.0,11.1 112.6,11.1 114.2,10.9 115.8,10.5 117.5,9.9 119.2,9.0 121.3,6.7 122.4,9.6 123.7,11.0 125.1,12.1 126.5,13.0 127.9,13.8 129.4,14.3 130.9,14.7 132.5,14.9 134.2,14.9 135.9,14.8 137.9,14.3 140.4,12.6 140.8,15.7 141.8,17.4 142.8,18.8 143.9,20.0 145.1,21.1 146.4,22.0 147.8,22.7 149.3,23.3 150.9,23.8 152.6,24.1 154.6,24.1 157.5,23.1 157.1,26.1 157.6,28.0 158.3,29.7 159.1,31.2 160.0,32.5 161.0,33.7 162.2,34.7 163.4,35.7 164.9,36.5 166.5,37.2 168.4,37.8 171.5,37.5 170.3,40.3 170.3,42.3 170.6,44.1 171.0,45.7 171.5,47.2 172.2,48.6 173.1,49.9 174.1,51.1 175.3,52.3 176.7,53.4 178.4,54.4 181.4,54.9 179.6,57.4 179.1,59.3 178.9,61.1 178.9,62.7 179.0,64.3 179.4,65.8 179.9,67.3 180.5,68.8 181.4,70.2 182.5,71.6 183.9,73.0 186.7,74.2 184.3,76.2 183.4,77.9 182.7,79.6 182.3,81.2 182.1,82.8 182.0,84.3 182.1,85.9 182.4,87.5 182.9,89.1 183.6,90.7 184.6,92.4" fill="none" stroke="#f0f0ec" stroke-width="1" opacity=".4" transform="translate(1.2,1.5)"/><circle cx="173.6" cy="101.4" r="4.0" fill="none" stroke="#3e3b35" stroke-width=".8" opacity=".5"/><circle cx="167.6" cy="117.3" r="4.0" fill="none" stroke="#3e3b35" stroke-width=".8" opacity=".5"/><circle cx="157.8" cy="131.3" r="4.0" fill="none" stroke="#3e3b35" stroke-width=".8" opacity=".5"/><circle cx="144.8" cy="142.3" r="4.0" fill="none" stroke="#3e3b35" stroke-width=".8" opacity=".5"/><circle cx="129.5" cy="149.8" r="4.0" fill="none" stroke="#3e3b35" stroke-width=".8" opacity=".5"/><circle cx="112.8" cy="153.3" r="4.0" fill="none" stroke="#3e3b35" stroke-width=".8" opacity=".5"/><circle cx="95.8" cy="152.5" r="4.0" fill="none" stroke="#3e3b35" stroke-width=".8" opacity=".5"/><circle cx="79.5" cy="147.5" r="4.0" fill="none" stroke="#3e3b35" stroke-width=".8" opacity=".5"/><circle cx="65.0" cy="138.6" r="4.0" fill="none" stroke="#3e3b35" stroke-width=".8" opacity=".5"/><circle cx="53.1" cy="126.3" r="4.0" fill="none" stroke="#3e3b35" stroke-width=".8" opacity=".5"/><circle cx="44.7" cy="111.5" r="4.0" fill="none" stroke="#3e3b35" stroke-width=".8" opacity=".5"/><circle cx="40.2" cy="95.1" r="4.0" fill="none" stroke="#3e3b35" stroke-width=".8" opacity=".5"/><circle cx="39.9" cy="78.0" r="4.0" fill="none" stroke="#3e3b35" stroke-width=".8" opacity=".5"/><circle cx="43.9" cy="61.5" r="4.0" fill="none" stroke="#3e3b35" stroke-width=".8" opacity=".5"/><circle cx="51.9" cy="46.4" r="4.0" fill="none" stroke="#3e3b35" stroke-width=".8" opacity=".5"/><circle cx="63.3" cy="33.8" r="4.0" fill="none" stroke="#3e3b35" stroke-width=".8" opacity=".5"/><circle cx="77.6" cy="24.4" r="4.0" fill="none" stroke="#3e3b35" stroke-width=".8" opacity=".5"/><circle cx="93.7" cy="18.9" r="4.0" fill="none" stroke="#3e3b35" stroke-width=".8" opacity=".5"/><circle cx="110.7" cy="17.6" r="4.0" fill="none" stroke="#3e3b35" stroke-width=".8" opacity=".5"/><circle cx="127.5" cy="20.5" r="4.0" fill="none" stroke="#3e3b35" stroke-width=".8" opacity=".5"/><circle cx="143.0" cy="27.5" r="4.0" fill="none" stroke="#3e3b35" stroke-width=".8" opacity=".5"/><circle cx="156.3" cy="38.2" r="4.0" fill="none" stroke="#3e3b35" stroke-width=".8" opacity=".5"/><circle cx="166.6" cy="51.8" r="4.0" fill="none" stroke="#3e3b35" stroke-width=".8" opacity=".5"/><circle cx="173.1" cy="67.6" r="4.0" fill="none" stroke="#3e3b35" stroke-width=".8" opacity=".5"/><circle cx="175.5" cy="84.4" r="4.0" fill="none" stroke="#3e3b35" stroke-width=".8" opacity=".5"/><polygon points="177.8,99.7 174.9,100.7 173.4,101.9 172.2,103.2 171.2,104.5 170.4,105.8 169.8,107.2 169.4,108.7 169.1,110.2 169.0,111.8 169.0,113.5 169.3,115.4 170.9,118.1 167.9,118.2 166.1,119.0 164.6,119.9 163.3,120.9 162.2,122.0 161.2,123.2 160.4,124.4 159.7,125.8 159.2,127.4 158.8,129.0 158.6,131.0 159.4,133.9 156.4,133.2 154.5,133.5 152.8,134.0 151.3,134.6 149.9,135.3 148.7,136.2 147.5,137.2 146.5,138.4 145.6,139.7 144.7,141.2 144.0,143.0 144.0,146.1 141.3,144.6 139.4,144.4 137.6,144.4 136.0,144.5 134.5,144.9 133.1,145.4 131.7,146.1 130.4,146.9 129.1,147.9 127.9,149.1 126.7,150.7 125.9,153.6 123.7,151.5 121.9,150.7 120.2,150.2 118.6,150.0 117.1,149.9 115.6,150.0 114.1,150.3 112.6,150.7 111.1,151.4 109.6,152.2 108.0,153.4 106.4,156.0 104.9,153.3 103.4,152.1 101.9,151.2 100.4,150.5 98.9,150.1 97.5,149.7 95.9,149.6 94.4,149.6 92.8,149.8 91.1,150.2 89.3,151.0 87.0,153.0 86.3,150.1 85.1,148.5 84.0,147.2 82.7,146.2 81.4,145.3 80.1,144.6 78.7,144.0 77.2,143.6 75.6,143.4 73.8,143.4 71.9,143.6 69.2,144.9 69.2,141.9 68.6,140.1 67.8,138.5 66.9,137.2 65.9,136.0 64.8,134.9 63.5,134.0 62.2,133.3 60.7,132.6 59.1,132.1 57.2,131.7 54.1,132.3 55.0,129.4 54.9,127.5 54.5,125.8 54.0,124.2 53.4,122.8 52.6,121.5 51.7,120.3 50.6,119.2 49.3,118.2 47.9,117.2 46.1,116.4 43.1,116.2 44.7,113.6 45.1,111.7 45.2,109.9 45.2,108.3 44.9,106.8 44.5,105.3 43.9,103.9 43.2,102.5 42.3,101.2 41.1,99.9 39.7,98.6 36.8,97.6 39.1,95.5 40.0,93.8 40.5,92.2 40.9,90.6 41.1,89.1 41.1,87.5 40.9,86.0 40.6,84.5 40.1,83.0 39.3,81.4 38.2,79.8 35.8,78.0 38.5,76.6 39.8,75.2 40.8,73.8 41.6,72.4 42.2,70.9 42.6,69.5 42.8,68.0 42.9,66.4 42.8,64.8 42.5,63.1 41.9,61.3 40.0,58.9 43.0,58.3 44.7,57.3 46.0,56.2 47.2,55.0 48.1,53.8 48.9,52.5 49.6,51.1 50.1,49.7 50.4,48.1 50.6,46.4 50.5,44.4 49.3,41.6 52.4,41.9 54.2,41.3 55.8,40.6 57.2,39.8 58.5,38.9 59.6,37.9 60.6,36.7 61.5,35.4 62.2,34.0 62.8,32.4 63.3,30.5 62.9,27.5 65.8,28.6 67.7,28.5 69.4,28.3 71.0,27.9 72.5,27.4 73.8,26.7 75.1,25.8 76.3,24.8 77.4,23.6 78.4,22.3 79.4,20.6 79.8,17.5 82.3,19.4 84.2,19.9 85.9,20.1 87.5,20.1 89.0,20.0 90.5,19.7 92.0,19.2 93.4,18.6 94.8,17.8 96.2,16.7 97.5,15.3 98.8,12.5 100.7,15.0 102.3,16.0 103.9,16.6 105.5,17.1 107.0,17.4 108.5,17.5 110.0,17.4 111.6,17.2 113.1,16.8 114.7,16.1 116.4,15.2 118.4,12.8 119.5,15.7 120.9,17.1 122.2,18.2 123.6,19.0 125.0,19.7 126.4,20.2 127.9,20.6 129.4,20.8 131.0,20.8 132.8,20.6 134.7,20.1 137.2,18.4 137.5,21.5 138.4,23.2 139.4,24.6 140.5,25.8 141.7,26.8 142.9,27.7 144.2,28.4 145.7,29.0 147.2,29.5 148.9,29.8 150.9,29.8 153.8,28.8 153.3,31.9 153.7,33.8 154.3,35.4 155.0,36.9 155.8,38.2 156.8,39.3 157.9,40.4 159.1,41.4 160.5,42.2 162.0,43.0 163.9,43.6 166.9,43.4 165.7,46.2 165.5,48.1 165.7,49.8 166.0,51.4 166.4,52.9 167.0,54.3 167.8,55.6 168.7,56.9 169.8,58.1 171.1,59.2 172.7,60.3 175.7,60.9 173.7,63.3 173.1,65.1 172.7,66.8 172.6,68.4 172.6,70.0 172.8,71.5 173.2,72.9 173.7,74.4 174.5,75.8 175.4,77.3 176.7,78.7 179.4,80.2 176.9,81.9 175.7,83.5 174.9,85.0 174.4,86.5 174.0,88.0 173.8,89.5 173.7,91.1 173.9,92.6 174.2,94.2 174.7,95.8 175.5,97.6" fill="url(#sg)" stroke="#34312b" stroke-width="1.0"/><polygon points="177.8,99.7 174.9,100.7 173.4,101.9 172.2,103.2 171.2,104.5 170.4,105.8 169.8,107.2 169.4,108.7 169.1,110.2 169.0,111.8 169.0,113.5 169.3,115.4 170.9,118.1 167.9,118.2 166.1,119.0 164.6,119.9 163.3,120.9 162.2,122.0 161.2,123.2 160.4,124.4 159.7,125.8 159.2,127.4 158.8,129.0 158.6,131.0 159.4,133.9 156.4,133.2 154.5,133.5 152.8,134.0 151.3,134.6 149.9,135.3 148.7,136.2 147.5,137.2 146.5,138.4 145.6,139.7 144.7,141.2 144.0,143.0 144.0,146.1 141.3,144.6 139.4,144.4 137.6,144.4 136.0,144.5 134.5,144.9 133.1,145.4 131.7,146.1 130.4,146.9 129.1,147.9 127.9,149.1 126.7,150.7 125.9,153.6 123.7,151.5 121.9,150.7 120.2,150.2 118.6,150.0 117.1,149.9 115.6,150.0 114.1,150.3 112.6,150.7 111.1,151.4 109.6,152.2 108.0,153.4 106.4,156.0 104.9,153.3 103.4,152.1 101.9,151.2 100.4,150.5 98.9,150.1 97.5,149.7 95.9,149.6 94.4,149.6 92.8,149.8 91.1,150.2 89.3,151.0 87.0,153.0 86.3,150.1 85.1,148.5 84.0,147.2 82.7,146.2 81.4,145.3 80.1,144.6 78.7,144.0 77.2,143.6 75.6,143.4 73.8,143.4 71.9,143.6 69.2,144.9 69.2,141.9 68.6,140.1 67.8,138.5 66.9,137.2 65.9,136.0 64.8,134.9 63.5,134.0 62.2,133.3 60.7,132.6 59.1,132.1 57.2,131.7 54.1,132.3 55.0,129.4 54.9,127.5 54.5,125.8 54.0,124.2 53.4,122.8 52.6,121.5 51.7,120.3 50.6,119.2 49.3,118.2 47.9,117.2 46.1,116.4 43.1,116.2 44.7,113.6 45.1,111.7 45.2,109.9 45.2,108.3 44.9,106.8 44.5,105.3 43.9,103.9 43.2,102.5 42.3,101.2 41.1,99.9 39.7,98.6 36.8,97.6 39.1,95.5 40.0,93.8 40.5,92.2 40.9,90.6 41.1,89.1 41.1,87.5 40.9,86.0 40.6,84.5 40.1,83.0 39.3,81.4 38.2,79.8 35.8,78.0 38.5,76.6 39.8,75.2 40.8,73.8 41.6,72.4 42.2,70.9 42.6,69.5 42.8,68.0 42.9,66.4 42.8,64.8 42.5,63.1 41.9,61.3 40.0,58.9 43.0,58.3 44.7,57.3 46.0,56.2 47.2,55.0 48.1,53.8 48.9,52.5 49.6,51.1 50.1,49.7 50.4,48.1 50.6,46.4 50.5,44.4 49.3,41.6 52.4,41.9 54.2,41.3 55.8,40.6 57.2,39.8 58.5,38.9 59.6,37.9 60.6,36.7 61.5,35.4 62.2,34.0 62.8,32.4 63.3,30.5 62.9,27.5 65.8,28.6 67.7,28.5 69.4,28.3 71.0,27.9 72.5,27.4 73.8,26.7 75.1,25.8 76.3,24.8 77.4,23.6 78.4,22.3 79.4,20.6 79.8,17.5 82.3,19.4 84.2,19.9 85.9,20.1 87.5,20.1 89.0,20.0 90.5,19.7 92.0,19.2 93.4,18.6 94.8,17.8 96.2,16.7 97.5,15.3 98.8,12.5 100.7,15.0 102.3,16.0 103.9,16.6 105.5,17.1 107.0,17.4 108.5,17.5 110.0,17.4 111.6,17.2 113.1,16.8 114.7,16.1 116.4,15.2 118.4,12.8 119.5,15.7 120.9,17.1 122.2,18.2 123.6,19.0 125.0,19.7 126.4,20.2 127.9,20.6 129.4,20.8 131.0,20.8 132.8,20.6 134.7,20.1 137.2,18.4 137.5,21.5 138.4,23.2 139.4,24.6 140.5,25.8 141.7,26.8 142.9,27.7 144.2,28.4 145.7,29.0 147.2,29.5 148.9,29.8 150.9,29.8 153.8,28.8 153.3,31.9 153.7,33.8 154.3,35.4 155.0,36.9 155.8,38.2 156.8,39.3 157.9,40.4 159.1,41.4 160.5,42.2 162.0,43.0 163.9,43.6 166.9,43.4 165.7,46.2 165.5,48.1 165.7,49.8 166.0,51.4 166.4,52.9 167.0,54.3 167.8,55.6 168.7,56.9 169.8,58.1 171.1,59.2 172.7,60.3 175.7,60.9 173.7,63.3 173.1,65.1 172.7,66.8 172.6,68.4 172.6,70.0 172.8,71.5 173.2,72.9 173.7,74.4 174.5,75.8 175.4,77.3 176.7,78.7 179.4,80.2 176.9,81.9 175.7,83.5 174.9,85.0 174.4,86.5 174.0,88.0 173.8,89.5 173.7,91.1 173.9,92.6 174.2,94.2 174.7,95.8 175.5,97.6" fill="none" stroke="#f0f0ec" stroke-width="1" opacity=".4" transform="translate(1.2,1.5)"/><circle cx="163.7" cy="104.9" r="4.0" fill="none" stroke="#3e3b35" stroke-width=".8" opacity=".5"/><circle cx="156.0" cy="119.3" r="4.0" fill="none" stroke="#3e3b35" stroke-width=".8" opacity=".5"/><circle cx="144.7" cy="131.1" r="4.0" fill="none" stroke="#3e3b35" stroke-width=".8" opacity=".5"/><circle cx="130.6" cy="139.4" r="4.0" fill="none" stroke="#3e3b35" stroke-width=".8" opacity=".5"/><circle cx="114.8" cy="143.6" r="4.0" fill="none" stroke="#3e3b35" stroke-width=".8" opacity=".5"/><circle cx="98.4" cy="143.3" r="4.0" fill="none" stroke="#3e3b35" stroke-width=".8" opacity=".5"/><circle cx="82.8" cy="138.7" r="4.0" fill="none" stroke="#3e3b35" stroke-width=".8" opacity=".5"/><circle cx="68.9" cy="130.0" r="4.0" fill="none" stroke="#3e3b35" stroke-width=".8" opacity=".5"/><circle cx="58.0" cy="117.9" r="4.0" fill="none" stroke="#3e3b35" stroke-width=".8" opacity=".5"/><circle cx="50.7" cy="103.2" r="4.0" fill="none" stroke="#3e3b35" stroke-width=".8" opacity=".5"/><circle cx="47.6" cy="87.2" r="4.0" fill="none" stroke="#3e3b35" stroke-width=".8" opacity=".5"/><circle cx="48.9" cy="70.9" r="4.0" fill="none" stroke="#3e3b35" stroke-width=".8" opacity=".5"/><circle cx="54.7" cy="55.6" r="4.0" fill="none" stroke="#3e3b35" stroke-width=".8" opacity=".5"/><circle cx="64.3" cy="42.4" r="4.0" fill="none" stroke="#3e3b35" stroke-width=".8" opacity=".5"/><circle cx="77.1" cy="32.3" r="4.0" fill="none" stroke="#3e3b35" stroke-width=".8" opacity=".5"/><circle cx="92.2" cy="26.0" r="4.0" fill="none" stroke="#3e3b35" stroke-width=".8" opacity=".5"/><circle cx="108.4" cy="24.0" r="4.0" fill="none" stroke="#3e3b35" stroke-width=".8" opacity=".5"/><circle cx="124.6" cy="26.5" r="4.0" fill="none" stroke="#3e3b35" stroke-width=".8" opacity=".5"/><circle cx="139.4" cy="33.2" r="4.0" fill="none" stroke="#3e3b35" stroke-width=".8" opacity=".5"/><circle cx="152.0" cy="43.7" r="4.0" fill="none" stroke="#3e3b35" stroke-width=".8" opacity=".5"/><circle cx="161.2" cy="57.2" r="4.0" fill="none" stroke="#3e3b35" stroke-width=".8" opacity=".5"/><circle cx="166.4" cy="72.7" r="4.0" fill="none" stroke="#3e3b35" stroke-width=".8" opacity=".5"/><circle cx="167.3" cy="89.0" r="4.0" fill="none" stroke="#3e3b35" stroke-width=".8" opacity=".5"/><polygon points="168.0,102.7 165.0,103.4 163.4,104.5 162.1,105.6 160.9,106.8 160.0,108.1 159.2,109.4 158.6,110.8 158.1,112.3 157.7,113.9 157.5,115.6 157.5,117.6 158.7,120.4 155.6,120.1 153.7,120.6 152.1,121.3 150.7,122.1 149.4,123.0 148.2,124.0 147.2,125.1 146.2,126.4 145.4,127.8 144.7,129.4 144.1,131.3 144.3,134.4 141.5,133.1 139.5,133.0 137.8,133.2 136.1,133.5 134.6,133.9 133.2,134.5 131.9,135.3 130.6,136.2 129.4,137.3 128.2,138.6 127.1,140.2 126.3,143.2 124.0,141.1 122.2,140.4 120.5,140.0 118.8,139.8 117.3,139.8 115.7,139.9 114.2,140.2 112.7,140.7 111.2,141.3 109.7,142.2 108.1,143.4 106.5,146.0 104.9,143.3 103.4,142.1 101.9,141.2 100.4,140.5 98.9,140.0 97.4,139.6 95.9,139.4 94.3,139.4 92.7,139.6 91.0,139.9 89.1,140.6 86.8,142.5 86.1,139.5 85.0,137.9 83.9,136.6 82.7,135.4 81.4,134.5 80.1,133.7 78.7,133.1 77.2,132.6 75.6,132.2 73.9,132.0 71.9,132.0 69.1,133.2 69.4,130.1 68.9,128.2 68.2,126.6 67.4,125.2 66.5,123.9 65.5,122.7 64.4,121.7 63.1,120.7 61.7,119.9 60.1,119.2 58.2,118.6 55.1,118.8 56.4,116.0 56.5,114.0 56.3,112.3 56.0,110.6 55.6,109.1 55.0,107.7 54.2,106.4 53.3,105.1 52.2,103.9 50.9,102.7 49.3,101.6 46.3,100.8 48.4,98.5 49.1,96.7 49.5,95.0 49.7,93.3 49.7,91.8 49.6,90.2 49.3,88.7 48.8,87.2 48.2,85.7 47.3,84.2 46.1,82.6 43.5,81.0 46.2,79.4 47.4,77.9 48.3,76.4 49.0,74.9 49.5,73.4 49.9,71.9 50.1,70.4 50.1,68.8 49.9,67.2 49.6,65.5 48.9,63.6 47.0,61.3 50.0,60.6 51.6,59.5 52.9,58.4 54.1,57.2 55.0,55.9 55.8,54.6 56.4,53.2 56.9,51.7 57.3,50.1 57.5,48.4 57.5,46.4 56.3,43.6 59.4,43.9 61.3,43.4 62.9,42.7 64.3,41.9 65.6,41.0 66.8,40.0 67.8,38.9 68.8,37.6 69.6,36.2 70.3,34.6 70.9,32.7 70.7,29.6 73.5,30.9 75.5,31.0 77.2,30.8 78.9,30.5 80.4,30.1 81.8,29.5 83.1,28.7 84.4,27.8 85.6,26.7 86.8,25.4 87.9,23.8 88.7,20.8 91.0,22.9 92.8,23.6 94.5,24.0 96.2,24.2 97.7,24.2 99.3,24.1 100.8,23.8 102.3,23.3 103.8,22.7 105.3,21.8 106.9,20.6 108.5,18.0 110.1,20.7 111.6,21.9 113.1,22.8 114.6,23.5 116.1,24.0 117.6,24.4 119.1,24.6 120.7,24.6 122.3,24.4 124.0,24.1 125.9,23.4 128.2,21.5 128.9,24.5 130.0,26.1 131.1,27.4 132.3,28.6 133.6,29.5 134.9,30.3 136.3,30.9 137.8,31.4 139.4,31.8 141.1,32.0 143.1,32.0 145.9,30.8 145.6,33.9 146.1,35.8 146.8,37.4 147.6,38.8 148.5,40.1 149.5,41.3 150.6,42.3 151.9,43.3 153.3,44.1 154.9,44.8 156.8,45.4 159.9,45.2 158.6,48.0 158.5,50.0 158.7,51.7 159.0,53.4 159.4,54.9 160.0,56.3 160.8,57.6 161.7,58.9 162.8,60.1 164.1,61.3 165.7,62.4 168.7,63.2 166.6,65.5 165.9,67.3 165.5,69.0 165.3,70.7 165.3,72.2 165.4,73.8 165.7,75.3 166.2,76.8 166.8,78.3 167.7,79.8 168.9,81.4 171.5,83.0 168.8,84.6 167.6,86.1 166.7,87.6 166.0,89.1 165.5,90.6 165.1,92.1 164.9,93.6 164.9,95.2 165.1,96.8 165.4,98.5 166.1,100.4" fill="url(#sg2)" stroke="#34312b" stroke-width="1.0"/><polygon points="168.0,102.7 165.0,103.4 163.4,104.5 162.1,105.6 160.9,106.8 160.0,108.1 159.2,109.4 158.6,110.8 158.1,112.3 157.7,113.9 157.5,115.6 157.5,117.6 158.7,120.4 155.6,120.1 153.7,120.6 152.1,121.3 150.7,122.1 149.4,123.0 148.2,124.0 147.2,125.1 146.2,126.4 145.4,127.8 144.7,129.4 144.1,131.3 144.3,134.4 141.5,133.1 139.5,133.0 137.8,133.2 136.1,133.5 134.6,133.9 133.2,134.5 131.9,135.3 130.6,136.2 129.4,137.3 128.2,138.6 127.1,140.2 126.3,143.2 124.0,141.1 122.2,140.4 120.5,140.0 118.8,139.8 117.3,139.8 115.7,139.9 114.2,140.2 112.7,140.7 111.2,141.3 109.7,142.2 108.1,143.4 106.5,146.0 104.9,143.3 103.4,142.1 101.9,141.2 100.4,140.5 98.9,140.0 97.4,139.6 95.9,139.4 94.3,139.4 92.7,139.6 91.0,139.9 89.1,140.6 86.8,142.5 86.1,139.5 85.0,137.9 83.9,136.6 82.7,135.4 81.4,134.5 80.1,133.7 78.7,133.1 77.2,132.6 75.6,132.2 73.9,132.0 71.9,132.0 69.1,133.2 69.4,130.1 68.9,128.2 68.2,126.6 67.4,125.2 66.5,123.9 65.5,122.7 64.4,121.7 63.1,120.7 61.7,119.9 60.1,119.2 58.2,118.6 55.1,118.8 56.4,116.0 56.5,114.0 56.3,112.3 56.0,110.6 55.6,109.1 55.0,107.7 54.2,106.4 53.3,105.1 52.2,103.9 50.9,102.7 49.3,101.6 46.3,100.8 48.4,98.5 49.1,96.7 49.5,95.0 49.7,93.3 49.7,91.8 49.6,90.2 49.3,88.7 48.8,87.2 48.2,85.7 47.3,84.2 46.1,82.6 43.5,81.0 46.2,79.4 47.4,77.9 48.3,76.4 49.0,74.9 49.5,73.4 49.9,71.9 50.1,70.4 50.1,68.8 49.9,67.2 49.6,65.5 48.9,63.6 47.0,61.3 50.0,60.6 51.6,59.5 52.9,58.4 54.1,57.2 55.0,55.9 55.8,54.6 56.4,53.2 56.9,51.7 57.3,50.1 57.5,48.4 57.5,46.4 56.3,43.6 59.4,43.9 61.3,43.4 62.9,42.7 64.3,41.9 65.6,41.0 66.8,40.0 67.8,38.9 68.8,37.6 69.6,36.2 70.3,34.6 70.9,32.7 70.7,29.6 73.5,30.9 75.5,31.0 77.2,30.8 78.9,30.5 80.4,30.1 81.8,29.5 83.1,28.7 84.4,27.8 85.6,26.7 86.8,25.4 87.9,23.8 88.7,20.8 91.0,22.9 92.8,23.6 94.5,24.0 96.2,24.2 97.7,24.2 99.3,24.1 100.8,23.8 102.3,23.3 103.8,22.7 105.3,21.8 106.9,20.6 108.5,18.0 110.1,20.7 111.6,21.9 113.1,22.8 114.6,23.5 116.1,24.0 117.6,24.4 119.1,24.6 120.7,24.6 122.3,24.4 124.0,24.1 125.9,23.4 128.2,21.5 128.9,24.5 130.0,26.1 131.1,27.4 132.3,28.6 133.6,29.5 134.9,30.3 136.3,30.9 137.8,31.4 139.4,31.8 141.1,32.0 143.1,32.0 145.9,30.8 145.6,33.9 146.1,35.8 146.8,37.4 147.6,38.8 148.5,40.1 149.5,41.3 150.6,42.3 151.9,43.3 153.3,44.1 154.9,44.8 156.8,45.4 159.9,45.2 158.6,48.0 158.5,50.0 158.7,51.7 159.0,53.4 159.4,54.9 160.0,56.3 160.8,57.6 161.7,58.9 162.8,60.1 164.1,61.3 165.7,62.4 168.7,63.2 166.6,65.5 165.9,67.3 165.5,69.0 165.3,70.7 165.3,72.2 165.4,73.8 165.7,75.3 166.2,76.8 166.8,78.3 167.7,79.8 168.9,81.4 171.5,83.0 168.8,84.6 167.6,86.1 166.7,87.6 166.0,89.1 165.5,90.6 165.1,92.1 164.9,93.6 164.9,95.2 165.1,96.8 165.4,98.5 166.1,100.4" fill="none" stroke="#f0f0ec" stroke-width="1" opacity=".4" transform="translate(1.2,1.5)"/><circle cx="153.5" cy="106.3" r="4.0" fill="none" stroke="#3e3b35" stroke-width=".8" opacity=".5"/><circle cx="143.7" cy="119.3" r="4.0" fill="none" stroke="#3e3b35" stroke-width=".8" opacity=".5"/><circle cx="130.4" cy="128.7" r="4.0" fill="none" stroke="#3e3b35" stroke-width=".8" opacity=".5"/><circle cx="114.8" cy="133.5" r="4.0" fill="none" stroke="#3e3b35" stroke-width=".8" opacity=".5"/><circle cx="98.6" cy="133.2" r="4.0" fill="none" stroke="#3e3b35" stroke-width=".8" opacity=".5"/><circle cx="83.2" cy="128.0" r="4.0" fill="none" stroke="#3e3b35" stroke-width=".8" opacity=".5"/><circle cx="70.2" cy="118.2" r="4.0" fill="none" stroke="#3e3b35" stroke-width=".8" opacity=".5"/><circle cx="60.8" cy="104.9" r="4.0" fill="none" stroke="#3e3b35" stroke-width=".8" opacity=".5"/><circle cx="56.0" cy="89.3" r="4.0" fill="none" stroke="#3e3b35" stroke-width=".8" opacity=".5"/><circle cx="56.3" cy="73.1" r="4.0" fill="none" stroke="#3e3b35" stroke-width=".8" opacity=".5"/><circle cx="61.5" cy="57.7" r="4.0" fill="none" stroke="#3e3b35" stroke-width=".8" opacity=".5"/><circle cx="71.3" cy="44.7" r="4.0" fill="none" stroke="#3e3b35" stroke-width=".8" opacity=".5"/><circle cx="84.6" cy="35.3" r="4.0" fill="none" stroke="#3e3b35" stroke-width=".8" opacity=".5"/><circle cx="100.2" cy="30.5" r="4.0" fill="none" stroke="#3e3b35" stroke-width=".8" opacity=".5"/><circle cx="116.4" cy="30.8" r="4.0" fill="none" stroke="#3e3b35" stroke-width=".8" opacity=".5"/><circle cx="131.8" cy="36.0" r="4.0" fill="none" stroke="#3e3b35" stroke-width=".8" opacity=".5"/><circle cx="144.8" cy="45.8" r="4.0" fill="none" stroke="#3e3b35" stroke-width=".8" opacity=".5"/><circle cx="154.2" cy="59.1" r="4.0" fill="none" stroke="#3e3b35" stroke-width=".8" opacity=".5"/><circle cx="159.0" cy="74.7" r="4.0" fill="none" stroke="#3e3b35" stroke-width=".8" opacity=".5"/><circle cx="158.7" cy="90.9" r="4.0" fill="none" stroke="#3e3b35" stroke-width=".8" opacity=".5"/><polygon points="158.2,103.9 155.1,104.1 153.4,105.0 152.0,105.9 150.7,106.9 149.7,108.0 148.8,109.1 148.0,110.4 147.3,111.7 146.8,113.2 146.4,114.9 146.2,116.8 147.0,119.7 144.0,119.0 142.1,119.2 140.4,119.5 138.9,120.1 137.6,120.7 136.3,121.5 135.2,122.4 134.1,123.4 133.1,124.7 132.1,126.1 131.3,127.8 131.0,130.8 128.5,129.1 126.6,128.6 124.9,128.4 123.3,128.4 121.8,128.5 120.4,128.8 119.0,129.3 117.6,129.9 116.2,130.7 114.9,131.7 113.5,133.0 112.2,135.8 110.4,133.3 108.8,132.2 107.3,131.5 105.8,130.9 104.4,130.5 102.9,130.3 101.4,130.2 99.9,130.4 98.4,130.6 96.7,131.1 95.0,131.9 92.8,134.0 92.0,131.1 90.9,129.5 89.7,128.3 88.5,127.3 87.3,126.4 86.0,125.7 84.6,125.1 83.2,124.7 81.6,124.5 79.9,124.4 78.0,124.5 75.2,125.8 75.5,122.7 74.9,120.9 74.3,119.3 73.5,117.9 72.6,116.7 71.7,115.6 70.6,114.6 69.3,113.7 68.0,112.9 66.4,112.3 64.6,111.7 61.5,112.0 62.8,109.2 62.9,107.3 62.8,105.6 62.6,104.0 62.2,102.5 61.7,101.2 61.0,99.9 60.1,98.6 59.1,97.4 57.8,96.3 56.3,95.1 53.4,94.3 55.5,92.1 56.3,90.4 56.8,88.7 57.1,87.2 57.2,85.7 57.2,84.2 57.0,82.8 56.6,81.3 56.0,79.8 55.3,78.3 54.2,76.7 51.7,74.9 54.5,73.6 55.8,72.2 56.9,70.9 57.7,69.5 58.3,68.1 58.8,66.8 59.1,65.3 59.2,63.8 59.2,62.2 59.0,60.5 58.6,58.7 56.8,56.1 59.9,55.9 61.6,55.0 63.0,54.1 64.3,53.1 65.3,52.0 66.2,50.9 67.0,49.6 67.7,48.3 68.2,46.8 68.6,45.1 68.8,43.2 68.0,40.3 71.0,41.0 72.9,40.8 74.6,40.5 76.1,39.9 77.4,39.3 78.7,38.5 79.8,37.6 80.9,36.6 81.9,35.3 82.9,33.9 83.7,32.2 84.0,29.2 86.5,30.9 88.4,31.4 90.1,31.6 91.7,31.6 93.2,31.5 94.6,31.2 96.0,30.7 97.4,30.1 98.8,29.3 100.1,28.3 101.5,27.0 102.8,24.2 104.6,26.7 106.2,27.8 107.7,28.5 109.2,29.1 110.6,29.5 112.1,29.7 113.6,29.8 115.1,29.6 116.6,29.4 118.3,28.9 120.0,28.1 122.2,26.0 123.0,28.9 124.1,30.5 125.3,31.7 126.5,32.7 127.7,33.6 129.0,34.3 130.4,34.9 131.8,35.3 133.4,35.5 135.1,35.6 137.0,35.5 139.8,34.2 139.5,37.3 140.1,39.1 140.7,40.7 141.5,42.1 142.4,43.3 143.3,44.4 144.4,45.4 145.7,46.3 147.0,47.1 148.6,47.7 150.4,48.3 153.5,48.0 152.2,50.8 152.1,52.7 152.2,54.4 152.4,56.0 152.8,57.5 153.3,58.8 154.0,60.1 154.9,61.4 155.9,62.6 157.2,63.7 158.7,64.9 161.6,65.7 159.5,67.9 158.7,69.6 158.2,71.3 157.9,72.8 157.8,74.3 157.8,75.8 158.0,77.2 158.4,78.7 159.0,80.2 159.7,81.7 160.8,83.3 163.3,85.1 160.5,86.4 159.2,87.8 158.1,89.1 157.3,90.5 156.7,91.9 156.2,93.2 155.9,94.7 155.8,96.2 155.8,97.8 156.0,99.5 156.4,101.3" fill="url(#sg)" stroke="#34312b" stroke-width="1.0"/><polygon points="158.2,103.9 155.1,104.1 153.4,105.0 152.0,105.9 150.7,106.9 149.7,108.0 148.8,109.1 148.0,110.4 147.3,111.7 146.8,113.2 146.4,114.9 146.2,116.8 147.0,119.7 144.0,119.0 142.1,119.2 140.4,119.5 138.9,120.1 137.6,120.7 136.3,121.5 135.2,122.4 134.1,123.4 133.1,124.7 132.1,126.1 131.3,127.8 131.0,130.8 128.5,129.1 126.6,128.6 124.9,128.4 123.3,128.4 121.8,128.5 120.4,128.8 119.0,129.3 117.6,129.9 116.2,130.7 114.9,131.7 113.5,133.0 112.2,135.8 110.4,133.3 108.8,132.2 107.3,131.5 105.8,130.9 104.4,130.5 102.9,130.3 101.4,130.2 99.9,130.4 98.4,130.6 96.7,131.1 95.0,131.9 92.8,134.0 92.0,131.1 90.9,129.5 89.7,128.3 88.5,127.3 87.3,126.4 86.0,125.7 84.6,125.1 83.2,124.7 81.6,124.5 79.9,124.4 78.0,124.5 75.2,125.8 75.5,122.7 74.9,120.9 74.3,119.3 73.5,117.9 72.6,116.7 71.7,115.6 70.6,114.6 69.3,113.7 68.0,112.9 66.4,112.3 64.6,111.7 61.5,112.0 62.8,109.2 62.9,107.3 62.8,105.6 62.6,104.0 62.2,102.5 61.7,101.2 61.0,99.9 60.1,98.6 59.1,97.4 57.8,96.3 56.3,95.1 53.4,94.3 55.5,92.1 56.3,90.4 56.8,88.7 57.1,87.2 57.2,85.7 57.2,84.2 57.0,82.8 56.6,81.3 56.0,79.8 55.3,78.3 54.2,76.7 51.7,74.9 54.5,73.6 55.8,72.2 56.9,70.9 57.7,69.5 58.3,68.1 58.8,66.8 59.1,65.3 59.2,63.8 59.2,62.2 59.0,60.5 58.6,58.7 56.8,56.1 59.9,55.9 61.6,55.0 63.0,54.1 64.3,53.1 65.3,52.0 66.2,50.9 67.0,49.6 67.7,48.3 68.2,46.8 68.6,45.1 68.8,43.2 68.0,40.3 71.0,41.0 72.9,40.8 74.6,40.5 76.1,39.9 77.4,39.3 78.7,38.5 79.8,37.6 80.9,36.6 81.9,35.3 82.9,33.9 83.7,32.2 84.0,29.2 86.5,30.9 88.4,31.4 90.1,31.6 91.7,31.6 93.2,31.5 94.6,31.2 96.0,30.7 97.4,30.1 98.8,29.3 100.1,28.3 101.5,27.0 102.8,24.2 104.6,26.7 106.2,27.8 107.7,28.5 109.2,29.1 110.6,29.5 112.1,29.7 113.6,29.8 115.1,29.6 116.6,29.4 118.3,28.9 120.0,28.1 122.2,26.0 123.0,28.9 124.1,30.5 125.3,31.7 126.5,32.7 127.7,33.6 129.0,34.3 130.4,34.9 131.8,35.3 133.4,35.5 135.1,35.6 137.0,35.5 139.8,34.2 139.5,37.3 140.1,39.1 140.7,40.7 141.5,42.1 142.4,43.3 143.3,44.4 144.4,45.4 145.7,46.3 147.0,47.1 148.6,47.7 150.4,48.3 153.5,48.0 152.2,50.8 152.1,52.7 152.2,54.4 152.4,56.0 152.8,57.5 153.3,58.8 154.0,60.1 154.9,61.4 155.9,62.6 157.2,63.7 158.7,64.9 161.6,65.7 159.5,67.9 158.7,69.6 158.2,71.3 157.9,72.8 157.8,74.3 157.8,75.8 158.0,77.2 158.4,78.7 159.0,80.2 159.7,81.7 160.8,83.3 163.3,85.1 160.5,86.4 159.2,87.8 158.1,89.1 157.3,90.5 156.7,91.9 156.2,93.2 155.9,94.7 155.8,96.2 155.8,97.8 156.0,99.5 156.4,101.3" fill="none" stroke="#f0f0ec" stroke-width="1" opacity=".4" transform="translate(1.2,1.5)"/><circle cx="143.4" cy="105.4" r="4.0" fill="none" stroke="#3e3b35" stroke-width=".8" opacity=".5"/><circle cx="132.6" cy="116.1" r="4.0" fill="none" stroke="#3e3b35" stroke-width=".8" opacity=".5"/><circle cx="118.7" cy="122.5" r="4.0" fill="none" stroke="#3e3b35" stroke-width=".8" opacity=".5"/><circle cx="103.5" cy="123.8" r="4.0" fill="none" stroke="#3e3b35" stroke-width=".8" opacity=".5"/><circle cx="88.8" cy="119.8" r="4.0" fill="none" stroke="#3e3b35" stroke-width=".8" opacity=".5"/><circle cx="76.3" cy="111.0" r="4.0" fill="none" stroke="#3e3b35" stroke-width=".8" opacity=".5"/><circle cx="67.6" cy="98.4" r="4.0" fill="none" stroke="#3e3b35" stroke-width=".8" opacity=".5"/><circle cx="63.7" cy="83.7" r="4.0" fill="none" stroke="#3e3b35" stroke-width=".8" opacity=".5"/><circle cx="65.0" cy="68.5" r="4.0" fill="none" stroke="#3e3b35" stroke-width=".8" opacity=".5"/><circle cx="71.6" cy="54.6" r="4.0" fill="none" stroke="#3e3b35" stroke-width=".8" opacity=".5"/><circle cx="82.4" cy="43.9" r="4.0" fill="none" stroke="#3e3b35" stroke-width=".8" opacity=".5"/><circle cx="96.3" cy="37.5" r="4.0" fill="none" stroke="#3e3b35" stroke-width=".8" opacity=".5"/><circle cx="111.5" cy="36.2" r="4.0" fill="none" stroke="#3e3b35" stroke-width=".8" opacity=".5"/><circle cx="126.2" cy="40.2" r="4.0" fill="none" stroke="#3e3b35" stroke-width=".8" opacity=".5"/><circle cx="138.7" cy="49.0" r="4.0" fill="none" stroke="#3e3b35" stroke-width=".8" opacity=".5"/><circle cx="147.4" cy="61.6" r="4.0" fill="none" stroke="#3e3b35" stroke-width=".8" opacity=".5"/><circle cx="151.3" cy="76.3" r="4.0" fill="none" stroke="#3e3b35" stroke-width=".8" opacity=".5"/><circle cx="150.0" cy="91.5" r="4.0" fill="none" stroke="#3e3b35" stroke-width=".8" opacity=".5"/><polygon points="148.4,103.6 145.4,103.5 143.6,104.0 142.1,104.7 140.8,105.5 139.7,106.4 138.7,107.4 137.8,108.4 137.0,109.6 136.4,111.0 135.8,112.5 135.4,114.3 135.7,117.3 133.0,116.1 131.1,115.9 129.5,116.0 128.0,116.2 126.6,116.6 125.3,117.1 124.1,117.8 122.9,118.6 121.7,119.6 120.6,120.8 119.5,122.3 118.7,125.2 116.6,123.0 115.0,122.1 113.4,121.5 112.0,121.2 110.6,121.0 109.2,121.0 107.8,121.1 106.4,121.4 104.9,121.9 103.4,122.6 101.9,123.5 100.0,125.9 98.9,123.1 97.7,121.7 96.5,120.5 95.3,119.6 94.1,118.9 92.8,118.4 91.4,118.0 90.0,117.7 88.5,117.6 86.9,117.7 85.1,117.9 82.4,119.4 82.5,116.4 82.0,114.6 81.3,113.1 80.5,111.8 79.6,110.7 78.6,109.7 77.6,108.8 76.4,108.0 75.0,107.4 73.5,106.8 71.7,106.4 68.7,106.7 69.9,104.0 70.1,102.1 70.0,100.5 69.8,99.0 69.4,97.6 68.9,96.3 68.2,95.1 67.4,93.9 66.4,92.7 65.2,91.6 63.7,90.5 60.8,89.7 63.0,87.6 63.9,86.0 64.5,84.4 64.8,83.0 65.0,81.6 65.0,80.2 64.9,78.8 64.6,77.4 64.1,75.9 63.4,74.4 62.5,72.9 60.1,71.0 62.9,69.9 64.3,68.7 65.5,67.5 66.4,66.3 67.1,65.1 67.6,63.8 68.0,62.4 68.3,61.0 68.4,59.5 68.3,57.9 68.1,56.1 66.6,53.4 69.6,53.5 71.4,53.0 72.9,52.3 74.2,51.5 75.3,50.6 76.3,49.6 77.2,48.6 78.0,47.4 78.6,46.0 79.2,44.5 79.6,42.7 79.3,39.7 82.0,40.9 83.9,41.1 85.5,41.0 87.0,40.8 88.4,40.4 89.7,39.9 90.9,39.2 92.1,38.4 93.3,37.4 94.4,36.2 95.5,34.7 96.3,31.8 98.4,34.0 100.0,34.9 101.6,35.5 103.0,35.8 104.4,36.0 105.8,36.0 107.2,35.9 108.6,35.6 110.1,35.1 111.6,34.4 113.1,33.5 115.0,31.1 116.1,33.9 117.3,35.3 118.5,36.5 119.7,37.4 120.9,38.1 122.2,38.6 123.6,39.0 125.0,39.3 126.5,39.4 128.1,39.3 129.9,39.1 132.6,37.6 132.5,40.6 133.0,42.4 133.7,43.9 134.5,45.2 135.4,46.3 136.4,47.3 137.4,48.2 138.6,49.0 140.0,49.6 141.5,50.2 143.3,50.6 146.3,50.3 145.1,53.0 144.9,54.9 145.0,56.5 145.2,58.0 145.6,59.4 146.1,60.7 146.8,61.9 147.6,63.1 148.6,64.3 149.8,65.4 151.3,66.5 154.2,67.3 152.0,69.4 151.1,71.0 150.5,72.6 150.2,74.0 150.0,75.4 150.0,76.8 150.1,78.2 150.4,79.6 150.9,81.1 151.6,82.6 152.5,84.1 154.9,86.0 152.1,87.1 150.7,88.3 149.5,89.5 148.6,90.7 147.9,91.9 147.4,93.2 147.0,94.6 146.7,96.0 146.6,97.5 146.7,99.1 146.9,100.9" fill="url(#sg2)" stroke="#34312b" stroke-width="1.0"/><polygon points="148.4,103.6 145.4,103.5 143.6,104.0 142.1,104.7 140.8,105.5 139.7,106.4 138.7,107.4 137.8,108.4 137.0,109.6 136.4,111.0 135.8,112.5 135.4,114.3 135.7,117.3 133.0,116.1 131.1,115.9 129.5,116.0 128.0,116.2 126.6,116.6 125.3,117.1 124.1,117.8 122.9,118.6 121.7,119.6 120.6,120.8 119.5,122.3 118.7,125.2 116.6,123.0 115.0,122.1 113.4,121.5 112.0,121.2 110.6,121.0 109.2,121.0 107.8,121.1 106.4,121.4 104.9,121.9 103.4,122.6 101.9,123.5 100.0,125.9 98.9,123.1 97.7,121.7 96.5,120.5 95.3,119.6 94.1,118.9 92.8,118.4 91.4,118.0 90.0,117.7 88.5,117.6 86.9,117.7 85.1,117.9 82.4,119.4 82.5,116.4 82.0,114.6 81.3,113.1 80.5,111.8 79.6,110.7 78.6,109.7 77.6,108.8 76.4,108.0 75.0,107.4 73.5,106.8 71.7,106.4 68.7,106.7 69.9,104.0 70.1,102.1 70.0,100.5 69.8,99.0 69.4,97.6 68.9,96.3 68.2,95.1 67.4,93.9 66.4,92.7 65.2,91.6 63.7,90.5 60.8,89.7 63.0,87.6 63.9,86.0 64.5,84.4 64.8,83.0 65.0,81.6 65.0,80.2 64.9,78.8 64.6,77.4 64.1,75.9 63.4,74.4 62.5,72.9 60.1,71.0 62.9,69.9 64.3,68.7 65.5,67.5 66.4,66.3 67.1,65.1 67.6,63.8 68.0,62.4 68.3,61.0 68.4,59.5 68.3,57.9 68.1,56.1 66.6,53.4 69.6,53.5 71.4,53.0 72.9,52.3 74.2,51.5 75.3,50.6 76.3,49.6 77.2,48.6 78.0,47.4 78.6,46.0 79.2,44.5 79.6,42.7 79.3,39.7 82.0,40.9 83.9,41.1 85.5,41.0 87.0,40.8 88.4,40.4 89.7,39.9 90.9,39.2 92.1,38.4 93.3,37.4 94.4,36.2 95.5,34.7 96.3,31.8 98.4,34.0 100.0,34.9 101.6,35.5 103.0,35.8 104.4,36.0 105.8,36.0 107.2,35.9 108.6,35.6 110.1,35.1 111.6,34.4 113.1,33.5 115.0,31.1 116.1,33.9 117.3,35.3 118.5,36.5 119.7,37.4 120.9,38.1 122.2,38.6 123.6,39.0 125.0,39.3 126.5,39.4 128.1,39.3 129.9,39.1 132.6,37.6 132.5,40.6 133.0,42.4 133.7,43.9 134.5,45.2 135.4,46.3 136.4,47.3 137.4,48.2 138.6,49.0 140.0,49.6 141.5,50.2 143.3,50.6 146.3,50.3 145.1,53.0 144.9,54.9 145.0,56.5 145.2,58.0 145.6,59.4 146.1,60.7 146.8,61.9 147.6,63.1 148.6,64.3 149.8,65.4 151.3,66.5 154.2,67.3 152.0,69.4 151.1,71.0 150.5,72.6 150.2,74.0 150.0,75.4 150.0,76.8 150.1,78.2 150.4,79.6 150.9,81.1 151.6,82.6 152.5,84.1 154.9,86.0 152.1,87.1 150.7,88.3 149.5,89.5 148.6,90.7 147.9,91.9 147.4,93.2 147.0,94.6 146.7,96.0 146.6,97.5 146.7,99.1 146.9,100.9" fill="none" stroke="#f0f0ec" stroke-width="1" opacity=".4" transform="translate(1.2,1.5)"/><circle cx="133.9" cy="102.9" r="4.0" fill="none" stroke="#3e3b35" stroke-width=".8" opacity=".5"/><circle cx="122.6" cy="111.2" r="4.0" fill="none" stroke="#3e3b35" stroke-width=".8" opacity=".5"/><circle cx="108.9" cy="114.5" r="4.0" fill="none" stroke="#3e3b35" stroke-width=".8" opacity=".5"/><circle cx="95.0" cy="112.3" r="4.0" fill="none" stroke="#3e3b35" stroke-width=".8" opacity=".5"/><circle cx="83.1" cy="104.9" r="4.0" fill="none" stroke="#3e3b35" stroke-width=".8" opacity=".5"/><circle cx="74.8" cy="93.6" r="4.0" fill="none" stroke="#3e3b35" stroke-width=".8" opacity=".5"/><circle cx="71.5" cy="79.9" r="4.0" fill="none" stroke="#3e3b35" stroke-width=".8" opacity=".5"/><circle cx="73.7" cy="66.0" r="4.0" fill="none" stroke="#3e3b35" stroke-width=".8" opacity=".5"/><circle cx="81.1" cy="54.1" r="4.0" fill="none" stroke="#3e3b35" stroke-width=".8" opacity=".5"/><circle cx="92.4" cy="45.8" r="4.0" fill="none" stroke="#3e3b35" stroke-width=".8" opacity=".5"/><circle cx="106.1" cy="42.5" r="4.0" fill="none" stroke="#3e3b35" stroke-width=".8" opacity=".5"/><circle cx="120.0" cy="44.7" r="4.0" fill="none" stroke="#3e3b35" stroke-width=".8" opacity=".5"/><circle cx="131.9" cy="52.1" r="4.0" fill="none" stroke="#3e3b35" stroke-width=".8" opacity=".5"/><circle cx="140.2" cy="63.4" r="4.0" fill="none" stroke="#3e3b35" stroke-width=".8" opacity=".5"/><circle cx="143.5" cy="77.1" r="4.0" fill="none" stroke="#3e3b35" stroke-width=".8" opacity=".5"/><circle cx="141.3" cy="91.0" r="4.0" fill="none" stroke="#3e3b35" stroke-width=".8" opacity=".5"/><polygon points="138.0,76.0 139.0,78.0 141.2,80.2 142.7,82.6 142.8,84.9 142.2,87.1 141.4,89.2 139.9,91.0 137.3,92.1 134.3,92.7 132.3,93.6 132.0,95.8 132.4,98.9 132.2,101.7 130.9,103.7 129.2,105.1 127.3,106.3 125.0,106.9 122.2,106.2 119.4,104.9 117.3,104.5 115.7,106.1 114.3,108.8 112.4,111.0 110.3,111.9 108.0,112.0 105.7,111.9 103.6,111.0 101.7,108.8 100.3,106.1 98.7,104.5 96.6,104.9 93.8,106.2 91.0,106.9 88.7,106.3 86.8,105.1 85.1,103.7 83.8,101.7 83.6,98.9 84.0,95.8 83.7,93.6 81.7,92.7 78.7,92.1 76.1,91.0 74.6,89.2 73.8,87.1 73.2,84.9 73.3,82.6 74.8,80.2 77.0,78.0 78.0,76.0 77.0,74.0 74.8,71.8 73.3,69.4 73.2,67.1 73.8,64.9 74.6,62.8 76.1,61.0 78.7,59.9 81.7,59.3 83.7,58.4 84.0,56.2 83.6,53.1 83.8,50.3 85.1,48.3 86.8,46.9 88.7,45.7 91.0,45.1 93.8,45.8 96.6,47.1 98.7,47.5 100.3,45.9 101.7,43.2 103.6,41.0 105.7,40.1 108.0,40.0 110.3,40.1 112.4,41.0 114.3,43.2 115.7,45.9 117.3,47.5 119.4,47.1 122.2,45.8 125.0,45.1 127.3,45.7 129.2,46.9 130.9,48.3 132.2,50.3 132.4,53.1 132.0,56.2 132.3,58.4 134.3,59.3 137.3,59.9 139.9,61.0 141.4,62.8 142.2,64.9 142.8,67.1 142.7,69.4 141.2,71.8 139.0,74.0" fill="#141414"/><polygon points="123.0,79.0 122.9,80.4 122.8,81.8 124.9,83.8 124.4,85.3 123.8,86.8 123.0,88.2 122.2,89.6 119.3,89.3 118.3,90.3 117.3,91.3 117.6,94.2 116.2,95.0 114.8,95.8 113.3,96.4 111.8,96.9 109.8,94.8 108.4,94.9 107.0,95.0 105.4,97.4 103.8,97.2 102.2,96.9 100.7,96.4 99.2,95.8 99.0,92.9 97.8,92.1 96.7,91.3 93.9,92.1 92.8,90.9 91.8,89.6 91.0,88.2 90.2,86.8 92.0,84.5 91.5,83.1 91.2,81.8 88.6,80.6 88.5,79.0 88.6,77.4 88.8,75.8 89.1,74.2 92.0,73.5 92.5,72.2 93.1,71.0 91.8,68.4 92.8,67.1 93.9,65.9 95.1,64.8 96.4,63.8 99.0,65.1 100.2,64.5 101.5,64.0 102.2,61.1 103.8,60.8 105.4,60.6 107.0,60.5 108.6,60.6 109.8,63.2 111.1,63.5 112.5,64.0 114.8,62.2 116.2,63.0 117.6,63.8 118.9,64.8 120.1,65.9 119.3,68.7 120.1,69.8 120.9,71.0 123.8,71.2 124.4,72.7 124.9,74.2 125.2,75.8 125.4,77.4" fill="#fff"/></svg></div></div><div style="left:401.20px;top:679.20px;width:88.80px;height:14.80px;background:#4f86b8"></div><div class="t" style="left:145.60px;width:600px;text-align:center;top:682.10px;line-height:11px;font-size:7.35px;color:#eef3f9;font-weight:400;-webkit-text-stroke:0;">Výber súboru</div><div style="left:483.40px;top:253.00px;width:605.60px;height:412.60px;background:#fff;border:1px solid #d6d6d6"></div><div style="left:483.40px;top:253.00px;width:605.60px;height:19.20px;background:#ebebeb;border-bottom:1px solid #dbe6f2"></div><svg style="position:absolute;left:487.90px;top:255.80px;" width="11" height="13" viewBox="0 0 11 13"><polygon points="0.8,1 9.8,6.5 0.8,12" fill="#ffffff" stroke="#dcdcdc" stroke-width=".7"/><path d="M2.5 9.8 L7.5 7.2" stroke="#9c9c9c" stroke-width="1"/><path d="M1.5 3.5 L2.8 2" stroke="#b0b0b0" stroke-width=".8"/></svg><div class="t" style="left:501.20px;top:257.40px;line-height:12px;font-size:8.3px;color:#554c40;font-weight:700;-webkit-text-stroke:0;">Zákazka položka - výrobný kusovník, položka</div><div class="t" style="left:730.50px;width:300px;text-align:right;top:257.30px;line-height:12px;font-size:8.3px;color:#6a6254;font-weight:700;-webkit-text-stroke:0;">82</div><div style="left:1038.50px;top:262.50px;width:7.00px;height:1.00px;background:#333"></div><div style="left:1055.50px;top:259.40px;width:7.60px;height:7.50px;border:1.2px solid #222"></div><svg style="position:absolute;left:1072.80px;top:259.00px;" width="8" height="8" viewBox="0 0 8 8"><path d="M0.8 0.8 L7.2 7.2 M7.2 0.8 L0.8 7.2" stroke="#111" stroke-width="1.6"/></svg><div style="left:491.40px;top:292.40px;width:588.60px;height:365.00px;background:#f7fbff;border:1px solid #d3e2f5"></div><div style="left:491.50px;top:278.30px;width:36.20px;height:15.10px;background:#fff;border:1px solid #cadcf3;border-bottom:none;border-radius:2px 2px 0 0"></div><div style="left:527.70px;top:292.40px;width:552.30px;height:1.00px;background:#cadcf3"></div><div class="t" style="left:495.80px;top:279.95px;line-height:11px;font-size:7.35px;color:#3a3a3a;font-weight:400;">Zoznam</div><div class="t" style="left:531.00px;top:280.85px;line-height:11px;font-size:7.35px;color:#1e2a38;font-weight:400;">Detail</div><div style="left:500.30px;top:301.00px;width:569.70px;height:346.80px;background:#fbfdff;border:1px solid #dde8f4"></div><div style="left:500.50px;top:301.00px;width:569.50px;height:12.80px;background:linear-gradient(#ffffff,#eef4fb);border:1px solid #dde8f4"></div><div style="left:501.00px;top:313.10px;width:569.00px;height:322.80px;overflow:hidden;"><div style="left:-501.00px;top:-313.10px;width:1168px;height:709px"><div style="left:512.00px;top:320.40px;width:9px;height:1px;background:repeating-linear-gradient(90deg,#d6dbe3 0 2px,transparent 2px 3px)"></div><div class="t" style="left:525.00px;top:315.50px;line-height:11px;font-size:7.35px;color:#1e2a38;font-weight:400;">Lanko zadní brzdy</div><div style="left:501.00px;top:326.65px;width:569.00px;height:12.51px;background:#f6f9fe"></div><div style="left:512.00px;top:332.91px;width:9px;height:1px;background:repeating-linear-gradient(90deg,#d6dbe3 0 2px,transparent 2px 3px)"></div><div class="t" style="left:525.00px;top:328.01px;line-height:11px;font-size:7.35px;color:#1e2a38;font-weight:400;">Lanko přesmykače</div><div style="left:508.80px;top:342.42px;width:6px;height:6px;border:1px solid #a0a8b4;background:#fff"></div><div style="left:510.20px;top:345.12px;width:3.20px;height:0.80px;background:#4a5a70"></div><div class="t" style="left:518.00px;top:340.52px;line-height:11px;font-size:7.35px;color:#1e2a38;font-weight:400;">Přední kolo XC Basic</div><div style="left:501.00px;top:351.67px;width:569.00px;height:12.51px;background:#f6f9fe"></div><div style="left:512.00px;top:357.93px;width:9px;height:1px;background:repeating-linear-gradient(90deg,#d6dbe3 0 2px,transparent 2px 3px)"></div><div class="t" style="left:525.00px;top:353.03px;line-height:11px;font-size:7.35px;color:#1e2a38;font-weight:400;">Ráfky Alex DM-18 dvoustěnné</div><div style="left:512.00px;top:370.44px;width:9px;height:1px;background:repeating-linear-gradient(90deg,#d6dbe3 0 2px,transparent 2px 3px)"></div><div class="t" style="left:525.00px;top:365.54px;line-height:11px;font-size:7.35px;color:#1e2a38;font-weight:400;">Náboj Quando 36 děr (přední)</div><div style="left:501.00px;top:376.69px;width:569.00px;height:12.51px;background:#f6f9fe"></div><div style="left:512.00px;top:382.95px;width:9px;height:1px;background:repeating-linear-gradient(90deg,#d6dbe3 0 2px,transparent 2px 3px)"></div><div class="t" style="left:525.00px;top:378.05px;line-height:11px;font-size:7.35px;color:#1e2a38;font-weight:400;">Paprsky ocel</div><div style="left:512.00px;top:395.46px;width:9px;height:1px;background:repeating-linear-gradient(90deg,#d6dbe3 0 2px,transparent 2px 3px)"></div><div class="t" style="left:525.00px;top:390.56px;line-height:11px;font-size:7.35px;color:#1e2a38;font-weight:400;">Ráfkový šroub</div><div style="left:501.00px;top:401.71px;width:569.00px;height:12.51px;background:#f6f9fe"></div><div style="left:512.00px;top:407.97px;width:9px;height:1px;background:repeating-linear-gradient(90deg,#d6dbe3 0 2px,transparent 2px 3px)"></div><div class="t" style="left:525.00px;top:403.07px;line-height:11px;font-size:7.35px;color:#1e2a38;font-weight:400;">Duše Horské kolo GEAX</div><div style="left:512.00px;top:420.48px;width:9px;height:1px;background:repeating-linear-gradient(90deg,#d6dbe3 0 2px,transparent 2px 3px)"></div><div class="t" style="left:525.00px;top:415.58px;line-height:11px;font-size:7.35px;color:#1e2a38;font-weight:400;">Plášť Ritchey SpeedMax</div><div style="left:501.00px;top:426.74px;width:569.00px;height:12.51px;background:#f6f9fe"></div><div style="left:508.80px;top:429.99px;width:6px;height:6px;border:1px solid #a0a8b4;background:#fff"></div><div style="left:510.20px;top:432.69px;width:3.20px;height:0.80px;background:#4a5a70"></div><div class="t" style="left:518.00px;top:428.09px;line-height:11px;font-size:7.35px;color:#1e2a38;font-weight:400;">Zadní kolo XC Basic</div><div style="left:512.00px;top:445.50px;width:9px;height:1px;background:repeating-linear-gradient(90deg,#d6dbe3 0 2px,transparent 2px 3px)"></div><div class="t" style="left:525.00px;top:440.60px;line-height:11px;font-size:7.35px;color:#1e2a38;font-weight:400;">Ráfky Alex DM-18 dvoustěnné</div><div style="left:501.00px;top:451.75px;width:569.00px;height:12.51px;background:#f6f9fe"></div><div style="left:512.00px;top:458.01px;width:9px;height:1px;background:repeating-linear-gradient(90deg,#d6dbe3 0 2px,transparent 2px 3px)"></div><div class="t" style="left:525.00px;top:453.11px;line-height:11px;font-size:7.35px;color:#1e2a38;font-weight:400;">Náboj Quando 36 děr (zadní)</div><div style="left:512.00px;top:470.52px;width:9px;height:1px;background:repeating-linear-gradient(90deg,#d6dbe3 0 2px,transparent 2px 3px)"></div><div class="t" style="left:525.00px;top:465.62px;line-height:11px;font-size:7.35px;color:#1e2a38;font-weight:400;">Paprsky ocel</div><div style="left:501.00px;top:476.77px;width:569.00px;height:12.51px;background:#f6f9fe"></div><div style="left:512.00px;top:483.03px;width:9px;height:1px;background:repeating-linear-gradient(90deg,#d6dbe3 0 2px,transparent 2px 3px)"></div><div class="t" style="left:525.00px;top:478.13px;line-height:11px;font-size:7.35px;color:#1e2a38;font-weight:400;">Ráfkový šroub</div><div style="left:501.00px;top:489.28px;width:569.00px;height:12.51px;background:#0e4b70"></div><div style="left:512.00px;top:495.54px;width:9px;height:1px;background:repeating-linear-gradient(90deg,#d6dbe3 0 2px,transparent 2px 3px)"></div><div class="t" style="left:525.00px;top:490.64px;line-height:11px;font-size:7.35px;color:#fff;font-weight:400;-webkit-text-stroke:0;">Pastorky Shimano HG 41</div><div style="left:501.00px;top:501.79px;width:569.00px;height:12.51px;background:#f6f9fe"></div><div style="left:512.00px;top:508.05px;width:9px;height:1px;background:repeating-linear-gradient(90deg,#d6dbe3 0 2px,transparent 2px 3px)"></div><div class="t" style="left:525.00px;top:503.15px;line-height:11px;font-size:7.35px;color:#1e2a38;font-weight:400;">Duše Horské kolo GEAX</div><div style="left:512.00px;top:520.56px;width:9px;height:1px;background:repeating-linear-gradient(90deg,#d6dbe3 0 2px,transparent 2px 3px)"></div><div class="t" style="left:525.00px;top:515.66px;line-height:11px;font-size:7.35px;color:#1e2a38;font-weight:400;">Plášť Ritchey SpeedMax</div><div style="left:501.00px;top:526.81px;width:569.00px;height:12.51px;background:#f6f9fe"></div><div style="left:505.00px;top:533.07px;width:9px;height:1px;background:repeating-linear-gradient(90deg,#d6dbe3 0 2px,transparent 2px 3px)"></div><div class="t" style="left:518.00px;top:528.17px;line-height:11px;font-size:7.35px;color:#1e2a38;font-weight:400;">Brzda Tektro 29 AL (přední)</div><div style="left:505.00px;top:545.58px;width:9px;height:1px;background:repeating-linear-gradient(90deg,#d6dbe3 0 2px,transparent 2px 3px)"></div><div class="t" style="left:518.00px;top:540.68px;line-height:11px;font-size:7.35px;color:#1e2a38;font-weight:400;">Brzda Tektro 29 AL (zadní)</div><div style="left:501.00px;top:551.83px;width:569.00px;height:12.51px;background:#f6f9fe"></div><div style="left:505.00px;top:558.09px;width:9px;height:1px;background:repeating-linear-gradient(90deg,#d6dbe3 0 2px,transparent 2px 3px)"></div><div class="t" style="left:518.00px;top:553.19px;line-height:11px;font-size:7.35px;color:#1e2a38;font-weight:400;">Bovden přední (řazení)</div><div style="left:505.00px;top:570.60px;width:9px;height:1px;background:repeating-linear-gradient(90deg,#d6dbe3 0 2px,transparent 2px 3px)"></div><div class="t" style="left:518.00px;top:565.70px;line-height:11px;font-size:7.35px;color:#1e2a38;font-weight:400;">Bovden přední (brzdy)</div><div style="left:501.00px;top:576.85px;width:569.00px;height:12.51px;background:#f6f9fe"></div><div style="left:505.00px;top:583.11px;width:9px;height:1px;background:repeating-linear-gradient(90deg,#d6dbe3 0 2px,transparent 2px 3px)"></div><div class="t" style="left:518.00px;top:578.21px;line-height:11px;font-size:7.35px;color:#1e2a38;font-weight:400;">Bovden zadní (řazení) přesmykač</div><div style="left:505.00px;top:595.62px;width:9px;height:1px;background:repeating-linear-gradient(90deg,#d6dbe3 0 2px,transparent 2px 3px)"></div><div class="t" style="left:518.00px;top:590.72px;line-height:11px;font-size:7.35px;color:#1e2a38;font-weight:400;">Přesmykač Shimano Acera</div><div style="left:501.00px;top:601.88px;width:569.00px;height:12.51px;background:#f6f9fe"></div><div style="left:505.00px;top:608.13px;width:9px;height:1px;background:repeating-linear-gradient(90deg,#d6dbe3 0 2px,transparent 2px 3px)"></div><div class="t" style="left:518.00px;top:603.23px;line-height:11px;font-size:7.35px;color:#1e2a38;font-weight:400;">Bovden zadní,  (brzdy) zadní</div><div style="left:505.00px;top:620.64px;width:9px;height:1px;background:repeating-linear-gradient(90deg,#d6dbe3 0 2px,transparent 2px 3px)"></div><div class="t" style="left:518.00px;top:615.74px;line-height:11px;font-size:7.35px;color:#1e2a38;font-weight:400;">Bovden horní, zadní (řazení)</div><div style="left:504.5px;top:313px;width:1px;height:316px;background:repeating-linear-gradient(#d6dbe3 0 2px,transparent 2px 3px)"></div><div style="left:511.5px;top:313px;width:1px;height:19.91px;background:repeating-linear-gradient(#d6dbe3 0 2px,transparent 2px 3px)"></div><div style="left:511.5px;top:349.42px;width:1px;height:73.06px;background:repeating-linear-gradient(#d6dbe3 0 2px,transparent 2px 3px)"></div><div style="left:511.5px;top:436.99px;width:1px;height:85.57px;background:repeating-linear-gradient(#d6dbe3 0 2px,transparent 2px 3px)"></div></div></div><div style="left:500.80px;top:635.90px;width:569.20px;height:11.90px;background:#f3f6fa"></div><div style="left:513.00px;top:636.40px;width:12.00px;height:10.90px;background:#d4e3f2"></div><svg style="position:absolute;left:504.00px;top:638.00px;" width="6" height="8" viewBox="0 0 6 8"><path d="M4.5 1 L1.5 4 L4.5 7" stroke="#1e2a3a" stroke-width="1.4" fill="none"/></svg><div style="left:600.00px;top:275.20px;width:547.90px;height:423.60px;background:#fff;border:1px solid #d6d6d6"></div><div style="left:600.00px;top:275.20px;width:547.90px;height:19.20px;background:#ebebeb;border-bottom:1px solid #dbe6f2"></div><svg style="position:absolute;left:604.50px;top:278.00px;" width="11" height="13" viewBox="0 0 11 13"><polygon points="0.8,1 9.8,6.5 0.8,12" fill="#ffffff" stroke="#dcdcdc" stroke-width=".7"/><path d="M2.5 9.8 L7.5 7.2" stroke="#9c9c9c" stroke-width="1"/><path d="M1.5 3.5 L2.8 2" stroke="#b0b0b0" stroke-width=".8"/></svg><div class="t" style="left:617.80px;top:278.90px;line-height:12px;font-size:8.3px;color:#554c40;font-weight:700;-webkit-text-stroke:0;">Zákazka položka - operácia</div><div class="t" style="left:789.40px;width:300px;text-align:right;top:278.80px;line-height:12px;font-size:8.3px;color:#6a6254;font-weight:700;-webkit-text-stroke:0;">1</div><div style="left:1097.40px;top:284.70px;width:7.00px;height:1.00px;background:#333"></div><div style="left:1114.40px;top:281.60px;width:7.60px;height:7.50px;border:1.2px solid #222"></div><svg style="position:absolute;left:1131.70px;top:281.20px;" width="8" height="8" viewBox="0 0 8 8"><path d="M0.8 0.8 L7.2 7.2 M7.2 0.8 L0.8 7.2" stroke="#111" stroke-width="1.6"/></svg><div style="left:608.30px;top:300.20px;width:530.50px;height:131.00px;background:#f6faff;border:1px solid #d7e4f7"></div><div class="t" style="left:613.40px;top:305.80px;line-height:11px;font-size:7.35px;color:#3a4758;font-weight:400;">Evidenčné číslo zákazky</div><div style="left:614.40px;top:318.20px;width:82.30px;height:13.30px;background:#dce8fb"></div><div class="t" style="left:616.00px;top:319.65px;line-height:11px;font-size:7.35px;color:#1e2a38;font-weight:400;">VZ-KOL-2018-000002</div><div class="t" style="left:702.70px;top:305.80px;line-height:11px;font-size:7.35px;color:#3a4758;font-weight:400;">Stav výrobnej zákazky</div><div style="left:703.30px;top:318.20px;width:82.30px;height:13.30px;background:#dce8fb"></div><div class="t" style="left:704.90px;top:319.65px;line-height:11px;font-size:7.35px;color:#1e2a38;font-weight:400;">Rozpracovaná</div><div class="t" style="left:791.50px;top:305.80px;line-height:11px;font-size:7.35px;color:#3a4758;font-weight:400;">Výrobný príkaz</div><div style="left:792.00px;top:318.20px;width:82.40px;height:13.30px;background:#dce8fb"></div><div class="t" style="left:793.60px;top:319.65px;line-height:11px;font-size:7.35px;color:#1e2a38;font-weight:400;">VP-2018-0000158</div><div class="t" style="left:880.70px;top:305.80px;line-height:11px;font-size:7.35px;color:#3a4758;font-weight:400;">Plánovaný čas začatia</div><div style="left:881.40px;top:318.20px;width:82.30px;height:13.30px;background:#dce8fb"></div><div class="t" style="left:969.40px;top:305.80px;line-height:11px;font-size:7.35px;color:#3a4758;font-weight:400;">Plánovaný čas ukončenia</div><div style="left:970.00px;top:318.20px;width:82.40px;height:13.30px;background:#dce8fb"></div><div class="t" style="left:613.40px;top:336.00px;line-height:11px;font-size:7.35px;color:#3a4758;font-weight:400;">Identifikácia zostavy</div><div style="left:614.40px;top:347.90px;width:82.30px;height:13.40px;background:#dce8fb"></div><div class="t" style="left:702.70px;top:336.00px;line-height:11px;font-size:7.35px;color:#3a4758;font-weight:400;">Kód zostavy</div><div style="left:703.30px;top:347.90px;width:82.30px;height:13.40px;background:#dce8fb"></div><div class="t" style="left:704.90px;top:349.40px;line-height:11px;font-size:7.35px;color:#1e2a38;font-weight:400;">HXCBASZK</div><div class="t" style="left:791.00px;top:336.00px;line-height:11px;font-size:7.35px;color:#3a4758;font-weight:400;">Názov zostavy</div><div style="left:792.00px;top:347.90px;width:340.60px;height:13.40px;background:#dce8fb"></div><div class="t" style="left:793.60px;top:349.40px;line-height:11px;font-size:7.35px;color:#1e2a38;font-weight:400;">Zadní kolo XC Basic</div><div class="t" style="left:613.40px;top:363.70px;line-height:11px;font-size:7.35px;color:#3a4758;font-weight:400;">Poznámka</div><div style="left:614.40px;top:375.90px;width:423.60px;height:13.00px;background:#dce8fb"></div><div style="left:1044.50px;top:375.10px;width:88.70px;height:14.90px;background:#4f86b8"></div><div class="t" style="left:788.85px;width:600px;text-align:center;top:378.05px;line-height:11px;font-size:7.35px;color:#eef3f9;font-weight:400;-webkit-text-stroke:0;">Žiadanky na materiál</div><div class="t" style="left:613.40px;top:394.20px;line-height:11px;font-size:7.35px;color:#3a4758;font-weight:400;">Úroveň</div><div style="left:614.40px;top:406.50px;width:40.50px;height:13.10px;background:#dce8fb"></div><div class="t" style="left:352.40px;width:300px;text-align:right;top:407.85px;line-height:11px;font-size:7.35px;color:#1e2a38;font-weight:400;">1</div><div class="t" style="left:657.60px;top:394.20px;line-height:11px;font-size:7.35px;color:#3a4758;font-weight:400;">Pozícia</div><div style="left:658.80px;top:406.50px;width:37.90px;height:13.10px;background:#dce8fb"></div><div class="t" style="left:394.20px;width:300px;text-align:right;top:407.85px;line-height:11px;font-size:7.35px;color:#1e2a38;font-weight:400;">70</div><div class="t" style="left:702.70px;top:394.20px;line-height:11px;font-size:7.35px;color:#3a4758;font-weight:400;">Množstvo skladové, pozícia</div><div style="left:703.30px;top:406.50px;width:93.50px;height:13.10px;background:#dce8fb"></div><div class="t" style="left:494.30px;width:300px;text-align:right;top:407.85px;line-height:11px;font-size:7.35px;color:#1e2a38;font-weight:400;">1,000</div><div class="t" style="left:799.60px;top:394.20px;line-height:11px;font-size:7.35px;color:#3a4758;font-weight:400;">Množstvo skladové, celkom</div><div style="left:801.20px;top:406.50px;width:92.20px;height:13.10px;background:#dce8fb"></div><div class="t" style="left:590.90px;width:300px;text-align:right;top:407.85px;line-height:11px;font-size:7.35px;color:#1e2a38;font-weight:400;">500,000</div><div class="t" style="left:897.20px;top:394.20px;line-height:11px;font-size:7.35px;color:#3a4758;font-weight:400;">Množstvo skladové, celkom (bez TNZ)</div><div style="left:898.10px;top:406.50px;width:123.60px;height:13.10px;background:#dce8fb"></div><div class="t" style="left:719.20px;width:300px;text-align:right;top:407.85px;line-height:11px;font-size:7.35px;color:#1e2a38;font-weight:400;">500,000</div><div class="t" style="left:1027.70px;top:394.20px;line-height:11px;font-size:7.35px;color:#3a4758;font-weight:400;">MJ celkom</div><div style="left:1028.70px;top:406.50px;width:49.00px;height:13.10px;background:#dce8fb"></div><div class="t" style="left:1030.30px;top:407.85px;line-height:11px;font-size:7.35px;color:#1e2a38;font-weight:400;">ks</div><div style="left:608.50px;top:450.10px;width:432.70px;height:240.40px;background:#f7fbff;border:1px solid #d3e2f5"></div><div style="left:608.50px;top:435.90px;width:36.30px;height:15.20px;background:#fff;border:1px solid #cadcf3;border-bottom:none;border-radius:2px 2px 0 0"></div><div style="left:644.80px;top:450.10px;width:396.40px;height:1.00px;background:#cadcf3"></div><div class="t" style="left:613.00px;top:437.60px;line-height:11px;font-size:7.35px;color:#3a3a3a;font-weight:400;">Zoznam</div><div class="t" style="left:648.00px;top:438.50px;line-height:11px;font-size:7.35px;color:#1e2a38;font-weight:400;">Detail</div><div class="t" style="left:678.20px;top:438.50px;line-height:11px;font-size:7.35px;color:#1e2a38;font-weight:400;">Popis</div><div style="left:617.30px;top:459.60px;width:415.50px;height:221.40px;background:#fbfdff;border:1px solid #dde8f4"></div><div style="left:617.30px;top:459.60px;width:413.40px;height:25.00px;background:linear-gradient(#ffffff,#eef4fb);border:1px solid #dde8f4"></div><div style="left:686.70px;top:459.60px;width:1.00px;height:25.00px;background:#dde8f4"></div><div style="left:770.00px;top:459.60px;width:1.00px;height:25.00px;background:#dde8f4"></div><div style="left:815.80px;top:459.60px;width:1.00px;height:25.00px;background:#dde8f4"></div><div style="left:842.40px;top:459.60px;width:1.00px;height:25.00px;background:#dde8f4"></div><div style="left:887.90px;top:459.60px;width:1.00px;height:25.00px;background:#dde8f4"></div><div style="left:926.00px;top:459.60px;width:1.00px;height:25.00px;background:#dde8f4"></div><div style="left:972.70px;top:459.60px;width:1.00px;height:25.00px;background:#dde8f4"></div><div class="t" style="left:619.80px;top:462.50px;line-height:10px;font-size:7.35px;color:#1e2a38;font-weight:400;">Mzdový lístok</div><div class="t" style="left:690.00px;top:462.50px;line-height:10px;font-size:7.35px;color:#1e2a38;font-weight:400;">Názov operácie</div><div class="t" style="left:772.90px;top:462.50px;line-height:10px;font-size:7.35px;color:#1e2a38;font-weight:400;">Čas prípravy</div><div class="t" style="left:818.60px;top:462.50px;line-height:10px;font-size:7.35px;color:#1e2a38;font-weight:400;">MJ</div><div class="t" style="left:818.60px;top:471.80px;line-height:10px;font-size:7.35px;color:#1e2a38;font-weight:400;">čas...</div><div class="t" style="left:845.00px;top:462.50px;line-height:10px;font-size:7.35px;color:#1e2a38;font-weight:400;">Čas kusový</div><div class="t" style="left:889.90px;top:462.50px;line-height:10px;font-size:7.35px;color:#1e2a38;font-weight:400;">MJ času</div><div class="t" style="left:889.90px;top:471.80px;line-height:10px;font-size:7.35px;color:#1e2a38;font-weight:400;">kusového</div><div class="t" style="left:928.30px;top:462.50px;line-height:10px;font-size:7.35px;color:#1e2a38;font-weight:400;">Názov</div><div class="t" style="left:928.30px;top:471.80px;line-height:10px;font-size:7.35px;color:#1e2a38;font-weight:400;">technológie</div><div class="t" style="left:976.20px;top:462.50px;line-height:10px;font-size:7.35px;color:#1e2a38;font-weight:400;">Cena celkom</div><div style="left:617.80px;top:484.60px;width:412.90px;height:13.00px;background:#0e4b70"></div><div style="left:686.70px;top:484.60px;width:1.00px;height:13.00px;background:#5d8bb0"></div><div style="left:770.00px;top:484.60px;width:1.00px;height:13.00px;background:#5d8bb0"></div><div style="left:815.80px;top:484.60px;width:1.00px;height:13.00px;background:#5d8bb0"></div><div style="left:842.40px;top:484.60px;width:1.00px;height:13.00px;background:#5d8bb0"></div><div style="left:887.90px;top:484.60px;width:1.00px;height:13.00px;background:#5d8bb0"></div><div style="left:926.00px;top:484.60px;width:1.00px;height:13.00px;background:#5d8bb0"></div><div style="left:972.70px;top:484.60px;width:1.00px;height:13.00px;background:#5d8bb0"></div><div style="left:617.30px;top:484.60px;width:69.40px;height:13.00px;overflow:hidden;"><div style="left:-617.30px;top:-484.60px;width:1168px;height:709px"><div class="t" style="left:618.80px;top:486.40px;line-height:11px;font-size:7.35px;color:#fff;font-weight:400;-webkit-text-stroke:0;">ML-2018-0000270</div></div></div><div style="left:687.20px;top:484.60px;width:82.80px;height:13.00px;overflow:hidden;"><div style="left:-687.20px;top:-484.60px;width:1168px;height:709px"><div class="t" style="left:688.70px;top:486.40px;line-height:11px;font-size:7.35px;color:#fff;font-weight:400;-webkit-text-stroke:0;">Montáž zadniho kola</div></div></div><div style="left:770.50px;top:484.60px;width:45.30px;height:13.00px;overflow:hidden;"><div style="left:-770.50px;top:-484.60px;width:1168px;height:709px"><div class="t" style="left:514.80px;width:300px;text-align:right;top:486.40px;line-height:11px;font-size:7.35px;color:#fff;font-weight:400;-webkit-text-stroke:0;">0,0000</div></div></div><div style="left:816.30px;top:484.60px;width:26.10px;height:13.00px;overflow:hidden;"><div style="left:-816.30px;top:-484.60px;width:1168px;height:709px"><div class="t" style="left:817.80px;top:486.40px;line-height:11px;font-size:7.35px;color:#fff;font-weight:400;-webkit-text-stroke:0;">min</div></div></div><div style="left:842.90px;top:484.60px;width:45.00px;height:13.00px;overflow:hidden;"><div style="left:-842.90px;top:-484.60px;width:1168px;height:709px"><div class="t" style="left:586.90px;width:300px;text-align:right;top:486.40px;line-height:11px;font-size:7.35px;color:#fff;font-weight:400;-webkit-text-stroke:0;">90,0000</div></div></div><div style="left:888.40px;top:484.60px;width:37.60px;height:13.00px;overflow:hidden;"><div style="left:-888.40px;top:-484.60px;width:1168px;height:709px"><div class="t" style="left:889.90px;top:486.40px;line-height:11px;font-size:7.35px;color:#fff;font-weight:400;-webkit-text-stroke:0;">min</div></div></div><div style="left:926.50px;top:484.60px;width:46.20px;height:13.00px;overflow:hidden;"><div style="left:-926.50px;top:-484.60px;width:1168px;height:709px"><div class="t" style="left:928.00px;top:486.40px;line-height:11px;font-size:7.35px;color:#fff;font-weight:400;-webkit-text-stroke:0;">Montáž</div></div></div><div style="left:973.20px;top:484.60px;width:57.00px;height:13.00px;overflow:hidden;"><div style="left:-973.20px;top:-484.60px;width:1168px;height:709px"><div class="t" style="left:729.20px;width:300px;text-align:right;top:486.40px;line-height:11px;font-size:7.35px;color:#fff;font-weight:400;-webkit-text-stroke:0;">63 000,00</div></div></div><div style="left:617.80px;top:669.00px;width:414.50px;height:11.50px;background:#f3f6fa"></div><div style="left:630.50px;top:669.50px;width:10.70px;height:10.80px;background:#d4e3f2"></div><svg style="position:absolute;left:620.50px;top:670.80px;" width="6" height="8" viewBox="0 0 6 8"><path d="M4.5 1 L1.5 4 L4.5 7" stroke="#1e2a3a" stroke-width="1.4" fill="none"/></svg><svg style="position:absolute;left:1024.00px;top:670.80px;" width="6" height="8" viewBox="0 0 6 8"><path d="M1.5 1 L4.5 4 L1.5 7" stroke="#1e2a3a" stroke-width="1.4" fill="none"/></svg><div style="left:1050.20px;top:450.60px;width:89.30px;height:15.20px;background:#4f86b8"></div><div class="t" style="left:794.85px;width:600px;text-align:center;top:453.70px;line-height:11px;font-size:7.35px;color:#eef3f9;font-weight:400;-webkit-text-stroke:0;">Zaplánované kapacity</div><div style="left:1050.20px;top:470.10px;width:89.30px;height:15.20px;background:#4f86b8"></div><div class="t" style="left:794.85px;width:600px;text-align:center;top:473.20px;line-height:11px;font-size:7.35px;color:#eef3f9;font-weight:400;-webkit-text-stroke:0;">Pracovné výkazy</div><svg style="position:absolute;left:1131.90px;top:474.20px;" width="5" height="7" viewBox="0 0 5 7"><polygon points="0.5,0.5 4.5,3.5 0.5,6.5" fill="#f2f6fa"/></svg><div style="left:1050.20px;top:489.60px;width:89.30px;height:15.20px;background:#4f86b8"></div><div class="t" style="left:794.85px;width:600px;text-align:center;top:492.70px;line-height:11px;font-size:7.35px;color:#eef3f9;font-weight:400;-webkit-text-stroke:0;">Materiál na operácie</div><div style="left:1050.20px;top:509.10px;width:89.30px;height:15.20px;background:#4f86b8"></div><div class="t" style="left:794.85px;width:600px;text-align:center;top:512.20px;line-height:11px;font-size:7.35px;color:#eef3f9;font-weight:400;-webkit-text-stroke:0;">Náradie a prípravky</div><div style="left:1050.20px;top:528.60px;width:89.30px;height:15.20px;background:#4f86b8"></div><div class="t" style="left:794.85px;width:600px;text-align:center;top:531.70px;line-height:11px;font-size:7.35px;color:#eef3f9;font-weight:400;-webkit-text-stroke:0;">Povolené náhrady</div><svg style="position:absolute;left:1131.90px;top:532.70px;" width="5" height="7" viewBox="0 0 5 7"><polygon points="0.5,0.5 4.5,3.5 0.5,6.5" fill="#f2f6fa"/></svg><div style="left:1050.20px;top:548.10px;width:89.30px;height:15.20px;background:#4f86b8"></div><div class="t" style="left:794.85px;width:600px;text-align:center;top:551.20px;line-height:11px;font-size:7.35px;color:#eef3f9;font-weight:400;-webkit-text-stroke:0;">Náhrady stredísk</div><div style="left:1050.20px;top:567.60px;width:89.30px;height:15.20px;background:#4f86b8"></div><div class="t" style="left:794.85px;width:600px;text-align:center;top:570.70px;line-height:11px;font-size:7.35px;color:#eef3f9;font-weight:400;-webkit-text-stroke:0;">Čiastkové kroky</div><svg style="position:absolute;left:1131.90px;top:571.70px;" width="5" height="7" viewBox="0 0 5 7"><polygon points="0.5,0.5 4.5,3.5 0.5,6.5" fill="#f2f6fa"/></svg><div style="left:1050.20px;top:587.10px;width:89.30px;height:15.20px;background:#4f86b8"></div><div class="t" style="left:794.85px;width:600px;text-align:center;top:590.20px;line-height:11px;font-size:7.35px;color:#eef3f9;font-weight:400;-webkit-text-stroke:0;">Kooperácia</div><svg style="position:absolute;left:1131.90px;top:591.20px;" width="5" height="7" viewBox="0 0 5 7"><polygon points="0.5,0.5 4.5,3.5 0.5,6.5" fill="#f2f6fa"/></svg><div style="left:1050.20px;top:606.60px;width:89.30px;height:15.20px;background:#4f86b8"></div><div class="t" style="left:794.85px;width:600px;text-align:center;top:609.70px;line-height:11px;font-size:7.35px;color:#eef3f9;font-weight:400;-webkit-text-stroke:0;">Operácia - spol. stroj</div><svg style="position:absolute;left:1131.90px;top:610.70px;" width="5" height="7" viewBox="0 0 5 7"><polygon points="0.5,0.5 4.5,3.5 0.5,6.5" fill="#f2f6fa"/></svg><div style="left:1050.20px;top:626.10px;width:89.30px;height:15.20px;background:#4f86b8"></div><div class="t" style="left:794.85px;width:600px;text-align:center;top:629.20px;line-height:11px;font-size:7.35px;color:#eef3f9;font-weight:400;-webkit-text-stroke:0;">Pridelené stroje</div><div style="left:1050.20px;top:645.60px;width:89.30px;height:15.20px;background:#4f86b8"></div><div class="t" style="left:794.85px;width:600px;text-align:center;top:648.70px;line-height:11px;font-size:7.35px;color:#eef3f9;font-weight:400;-webkit-text-stroke:0;">Vykazovať operácie</div><div style="left:1050.20px;top:665.10px;width:89.30px;height:15.20px;background:#4f86b8"></div><div class="t" style="left:794.85px;width:600px;text-align:center;top:668.20px;line-height:11px;font-size:7.35px;color:#82abd2;font-weight:400;-webkit-text-stroke:0;">Zmeny výr. dok.</div></body></html>
